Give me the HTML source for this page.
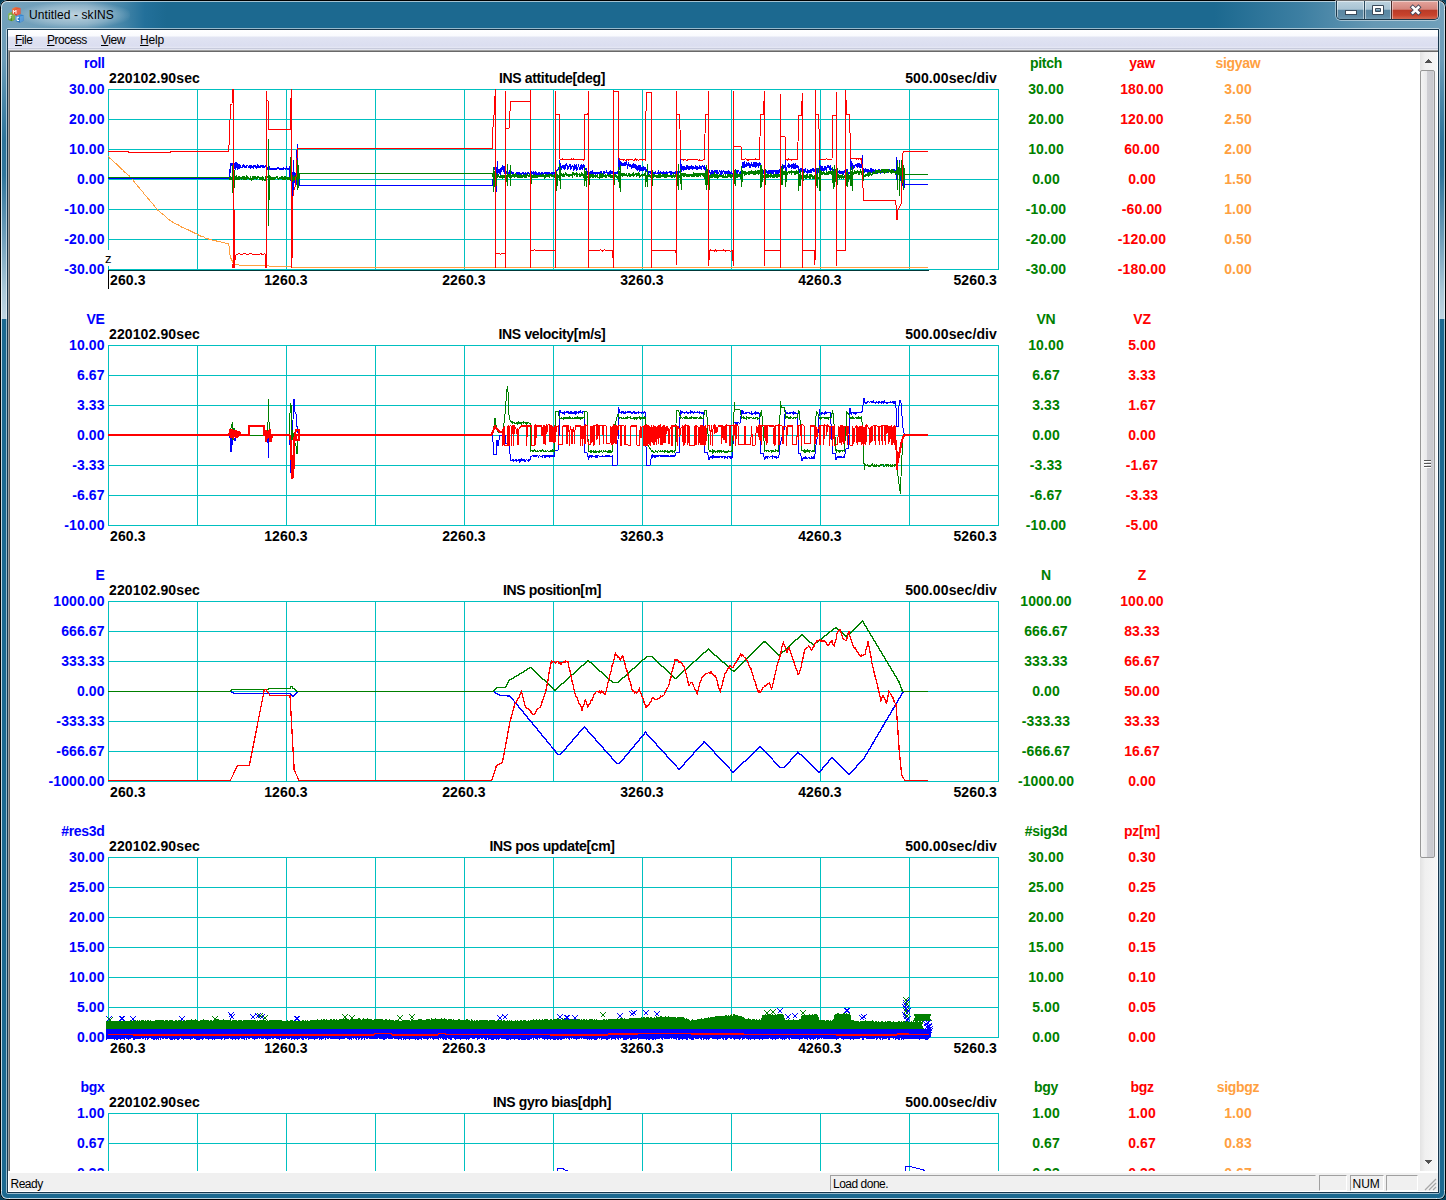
<!DOCTYPE html>
<html><head><meta charset="utf-8"><title>Untitled - skINS</title>
<style>
html,body{margin:0;padding:0}
body{width:1446px;height:1200px;overflow:hidden;position:relative;background:#063f5a;font-family:"Liberation Sans",sans-serif;}
.abs{position:absolute}
#win{left:0;top:0;width:1446px;height:1200px;background:#1c6990;border-radius:7px;overflow:hidden}
#glareL{left:0;top:0;width:8px;height:319px;background:linear-gradient(#74a2bc 0,#6c9cb8 60px,#4a87a8 100px,#2c7399 140px,#2f759b 175px,#6c9cb8 235px,#a9c7d7 290px,#bfd5e1 319px)}
#glareR{left:1438px;top:0;width:8px;height:319px;background:linear-gradient(#74a2bc 0,#6c9cb8 60px,#4a87a8 100px,#2c7399 140px,#2f759b 175px,#6c9cb8 235px,#a9c7d7 290px,#bfd5e1 319px)}
#title{left:0;top:0;width:1446px;height:30px;background:linear-gradient(90deg,#74a2bc 0,#6c9cb8 6%,#4485a8 8.5%,#23709a 10%,#1c6990 11.5%,#1c6990 84%,#3d7fa2 90%,#6698b4 95%,#70a0ba 100%)}
#tglow{left:20px;top:2px;width:110px;height:26px;border-radius:13px;background:radial-gradient(ellipse at center,rgba(255,255,255,.55),rgba(255,255,255,.25) 50%,rgba(255,255,255,0) 75%)}
#ttext{left:29px;top:8px;font-size:12px;letter-spacing:0.1px;color:#000;white-space:nowrap}
.edge{background:#000}
#menu{left:8px;top:30px;width:1430px;height:20px;background:linear-gradient(#fff 0,#fafbfe 28%,#e0e3f2 38%,#dbdef0 80%,#e4e6f3 88%,#c4c8da 93%,#f4f5fa 100%)}
#menu span{position:absolute;top:3px;font-size:12px;letter-spacing:-0.5px;color:#000;white-space:nowrap}
#menu u{text-decoration:underline}
#view{left:8px;top:50px;width:1430px;height:1121px;background:#fff;box-sizing:border-box;border-left:1px solid #a0a0a0;border-top:1px solid #a0a0a0}
#view2{left:9px;top:51px;width:1429px;height:1120px;box-sizing:border-box;border-left:1px solid #696969;border-top:1px solid #696969}
#plot{left:9px;top:51px;width:1411px;height:1120px;overflow:hidden}
#sb{left:1420px;top:52px;width:17px;height:1119px;background:linear-gradient(90deg,#e3e3e3,#f0f0f0 30%,#f6f6f6)}
#thumb{left:1420px;top:70px;width:15px;height:788px;box-sizing:border-box;border:1px solid #979797;border-radius:2px;background:linear-gradient(90deg,#f4f4f4,#e9e9eb 45%,#cfcfd4 50%,#c8c8cd 90%,#dcdce0)}
#status{left:8px;top:1171px;width:1430px;height:21px;background:#f0f0f0;font-size:12px;box-sizing:border-box;box-shadow:inset 1px 2px 0 #fff, inset 0 -1px 0 #fff;letter-spacing:-0.5px}
.pane{position:absolute;top:4px;height:16px;box-sizing:border-box;border:1px solid;border-color:#a0a0a0 #fff #fff #a0a0a0}
</style></head><body>
<div id="win" class="abs">
 <div id="title" class="abs"></div>
 <div id="glareL" class="abs"></div>
 <div id="glareR" class="abs"></div>
 <!-- outer edges -->
 <div class="abs" style="left:0;top:8px;width:1px;height:1184px;background:#000"></div>
 <div class="abs" style="left:1px;top:9px;width:1px;height:1182px;background:rgba(255,255,255,.75)"></div>
 <div class="abs" style="left:1445px;top:8px;width:1px;height:1184px;background:#000"></div>
 <div class="abs" style="left:1444px;top:9px;width:1px;height:1182px;background:rgba(255,255,255,.6)"></div>
 <div class="abs" style="left:8px;top:0;width:1430px;height:1px;background:#000"></div>
 <div class="abs" style="left:9px;top:1px;width:1428px;height:1px;background:rgba(255,255,255,.6)"></div>
 <div class="abs" style="left:8px;top:1199px;width:1430px;height:1px;background:#000"></div>
 <div class="abs" style="left:9px;top:1198px;width:1428px;height:1px;background:rgba(255,255,255,.7)"></div>
 <div class="abs" style="left:0;top:0;width:9px;height:9px;box-sizing:border-box;border-left:1px solid #000;border-top:1px solid #000;border-radius:7px 0 0 0"></div>
 <div class="abs" style="left:1px;top:1px;width:9px;height:9px;box-sizing:border-box;border-left:1px solid rgba(255,255,255,.7);border-top:1px solid rgba(255,255,255,.7);border-radius:6px 0 0 0"></div>
 <div class="abs" style="left:1437px;top:0;width:9px;height:9px;box-sizing:border-box;border-right:1px solid #000;border-top:1px solid #000;border-radius:0 7px 0 0"></div>
 <div class="abs" style="left:1436px;top:1px;width:9px;height:9px;box-sizing:border-box;border-right:1px solid rgba(255,255,255,.6);border-top:1px solid rgba(255,255,255,.6);border-radius:0 6px 0 0"></div>
 <div class="abs" style="left:0;top:1191px;width:9px;height:9px;box-sizing:border-box;border-left:1px solid #000;border-bottom:1px solid #000;border-radius:0 0 0 7px"></div>
 <div class="abs" style="left:1px;top:1190px;width:9px;height:9px;box-sizing:border-box;border-left:1px solid rgba(255,255,255,.7);border-bottom:1px solid rgba(255,255,255,.7);border-radius:0 0 0 6px"></div>
 <div class="abs" style="left:1437px;top:1191px;width:9px;height:9px;box-sizing:border-box;border-right:1px solid #000;border-bottom:1px solid #000;border-radius:0 0 7px 0"></div>
 <div class="abs" style="left:1436px;top:1190px;width:9px;height:9px;box-sizing:border-box;border-right:1px solid rgba(255,255,255,.6);border-bottom:1px solid rgba(255,255,255,.6);border-radius:0 0 6px 0"></div>
 <!-- inner edges -->
 <div class="abs" style="left:6px;top:28px;width:1434px;height:1166px;box-sizing:border-box;border:1px solid rgba(255,255,255,.55);border-radius:2px"></div>
 <div class="abs" style="left:7px;top:29px;width:1432px;height:1164px;box-sizing:border-box;border:1px solid #17374d"></div>
 <div id="tglow" class="abs"></div>
 <svg class="abs" style="left:7px;top:6px" width="18" height="18" viewBox="7 6 18 18">
  <defs>
   <linearGradient id="gr" x1="0" y1="0" x2="1" y2="1"><stop offset="0" stop-color="#f08a4a"/><stop offset=".5" stop-color="#e04a2a"/><stop offset="1" stop-color="#c02a1c"/></linearGradient>
   <linearGradient id="gg" x1="0" y1="0" x2="1" y2="1"><stop offset="0" stop-color="#9ccc5a"/><stop offset=".5" stop-color="#5c9a2c"/><stop offset="1" stop-color="#3c7a1c"/></linearGradient>
   <linearGradient id="gb" x1="0" y1="0" x2="1" y2="1"><stop offset="0" stop-color="#6cb4ea"/><stop offset=".5" stop-color="#2c7cc8"/><stop offset="1" stop-color="#1c5ca8"/></linearGradient>
  </defs>
  <path d="M8.3 13.5 L11.5 12 L15 13 L15 19.5 L12 21.3 L8.3 20 Z" fill="url(#gg)"/>
  <path d="M15.8 15.8 L19.5 14 L23.8 15.2 L23.8 20.8 L20 22.8 L15.8 21.3 Z" fill="url(#gb)"/>
  <path d="M12.2 8.5 L15.5 7 L20.5 8 L20.5 14 L16.5 15.8 L12.2 14 Z" fill="url(#gr)"/>
  <path d="M16.6 9.3 L20.5 8 L20.5 14 L16.6 15.8 Z" fill="#f4806a" opacity=".55"/>
  <path d="M12 15 L15 13.6 L15 19.5 L12 21.3 Z" fill="#b8e07a" opacity=".45"/>
  <path d="M20 16.6 L23.8 15.2 L23.8 20.8 L20 22.8 Z" fill="#8cc8f4" opacity=".5"/>
  <g stroke="#fff" stroke-width="1" fill="none"><path d="M13.4 13.6v-3.4l1.3 1.8 1.3-1.8v3.6"/><path d="M9.9 15.3v4M9.9 15.3h1.9M9.9 17.1h1.4"/><path d="M19 17.3h-1.9v3.2h2"/></g>
 </svg>
 <div id="ttext" class="abs">Untitled - skINS</div>
 <div class="abs" style="left:1336px;top:1px;width:103px;height:19px;box-sizing:border-box;border:1px solid #1a3648;border-top:none;border-radius:0 0 5px 5px;overflow:hidden;box-shadow:0 0 0 1px rgba(255,255,255,.45)">
  <div class="abs" style="left:0;top:0;width:27px;height:19px;background:linear-gradient(#bcd2de 0,#a8c3d3 44%,#5a87a2 47%,#5e8ba6 80%,#7aa2b9 100%);box-shadow:inset 0 0 0 1px rgba(255,255,255,.5)"></div>
  <div class="abs" style="left:27px;top:0;width:1px;height:19px;background:#2a4a5e"></div>
  <div class="abs" style="left:28px;top:0;width:26px;height:19px;background:linear-gradient(#bcd2de 0,#a8c3d3 44%,#5a87a2 47%,#5e8ba6 80%,#7aa2b9 100%);box-shadow:inset 0 0 0 1px rgba(255,255,255,.5)"></div>
  <div class="abs" style="left:54px;top:0;width:1px;height:19px;background:#4a2a28"></div>
  <div class="abs" style="left:55px;top:0;width:46px;height:19px;background:linear-gradient(#e3a49c 0,#d4857c 44%,#b93a27 47%,#c8432c 75%,#d4735c 100%);box-shadow:inset 0 0 0 1px rgba(255,255,255,.45)"></div>
 </div>
 <svg class="abs" style="left:1336px;top:0" width="103" height="20">
  <rect x="9.5" y="10.5" width="11" height="4" fill="#fff" stroke="#3a4a5a" stroke-width="1"/>
  <path d="M36.5 5.5h11v9h-11z M39.5 8.5v3h5v-3z" fill="#fff" fill-rule="evenodd" stroke="#3a4a5a" stroke-width="1"/>
  <path d="M76.8 7.3L82.4 12.7M82.4 7.3L76.8 12.7" stroke="#45485a" stroke-width="4.4" stroke-linecap="square"/><path d="M76.8 7.3L82.4 12.7M82.4 7.3L76.8 12.7" stroke="#fff" stroke-width="2.6" stroke-linecap="square"/>
 </svg>
 <div id="menu" class="abs"><span style="left:7px"><u>F</u>ile</span><span style="left:39px"><u>P</u>rocess</span><span style="left:93px"><u>V</u>iew</span><span style="left:132px;letter-spacing:-0.2px"><u>H</u>elp</span></div>
 <div id="view" class="abs"></div><div id="view2" class="abs"></div>
 <div id="plot" class="abs">
<svg width="1411" height="1120" viewBox="9 51 1411 1120" style="position:absolute;left:0;top:0" shape-rendering="crispEdges" fill="none">
<g font-family="'Liberation Sans',sans-serif" font-weight="bold" font-size="14px" style="letter-spacing:0.12px">
<g stroke="#00c0c0" stroke-width="1"><line x1="108.5" y1="89" x2="108.5" y2="270"/><line x1="197.5" y1="89" x2="197.5" y2="270"/><line x1="286.5" y1="89" x2="286.5" y2="270"/><line x1="375.5" y1="89" x2="375.5" y2="270"/><line x1="464.5" y1="89" x2="464.5" y2="270"/><line x1="553.5" y1="89" x2="553.5" y2="270"/><line x1="642.5" y1="89" x2="642.5" y2="270"/><line x1="731.5" y1="89" x2="731.5" y2="270"/><line x1="820.5" y1="89" x2="820.5" y2="270"/><line x1="909.5" y1="89" x2="909.5" y2="270"/><line x1="998.5" y1="89" x2="998.5" y2="270"/><line x1="108" y1="89.5" x2="999" y2="89.5"/><line x1="108" y1="119.5" x2="999" y2="119.5"/><line x1="108" y1="149.5" x2="999" y2="149.5"/><line x1="108" y1="179.5" x2="999" y2="179.5"/><line x1="108" y1="209.5" x2="999" y2="209.5"/><line x1="108" y1="239.5" x2="999" y2="239.5"/><line x1="108" y1="269.5" x2="999" y2="269.5"/></g>
<text x="104.6" y="68" text-anchor="end" fill="#0000ff" style="letter-spacing:-0.3px">roll</text>
<text x="109" y="83" text-anchor="start" fill="#000">220102.90sec</text>
<text x="552" y="83" text-anchor="middle" fill="#000" style="letter-spacing:-0.35px">INS attitude[deg]</text>
<text x="997" y="83" text-anchor="end" fill="#000">500.00sec/div</text>
<text x="104.7" y="94" text-anchor="end" fill="#0000ff">30.00</text>
<text x="104.7" y="124" text-anchor="end" fill="#0000ff">20.00</text>
<text x="104.7" y="154" text-anchor="end" fill="#0000ff">10.00</text>
<text x="104.7" y="184" text-anchor="end" fill="#0000ff">0.00</text>
<text x="104.7" y="214" text-anchor="end" fill="#0000ff">-10.00</text>
<text x="104.7" y="244" text-anchor="end" fill="#0000ff">-20.00</text>
<text x="104.7" y="274" text-anchor="end" fill="#0000ff">-30.00</text>
<text x="1046" y="68" text-anchor="middle" fill="#008000" style="letter-spacing:-0.3px">pitch</text>
<text x="1046" y="94" text-anchor="middle" fill="#008000">30.00</text>
<text x="1046" y="124" text-anchor="middle" fill="#008000">20.00</text>
<text x="1046" y="154" text-anchor="middle" fill="#008000">10.00</text>
<text x="1046" y="184" text-anchor="middle" fill="#008000">0.00</text>
<text x="1046" y="214" text-anchor="middle" fill="#008000">-10.00</text>
<text x="1046" y="244" text-anchor="middle" fill="#008000">-20.00</text>
<text x="1046" y="274" text-anchor="middle" fill="#008000">-30.00</text>
<text x="1142" y="68" text-anchor="middle" fill="#ff0000" style="letter-spacing:-0.3px">yaw</text>
<text x="1142" y="94" text-anchor="middle" fill="#ff0000">180.00</text>
<text x="1142" y="124" text-anchor="middle" fill="#ff0000">120.00</text>
<text x="1142" y="154" text-anchor="middle" fill="#ff0000">60.00</text>
<text x="1142" y="184" text-anchor="middle" fill="#ff0000">0.00</text>
<text x="1142" y="214" text-anchor="middle" fill="#ff0000">-60.00</text>
<text x="1142" y="244" text-anchor="middle" fill="#ff0000">-120.00</text>
<text x="1142" y="274" text-anchor="middle" fill="#ff0000">-180.00</text>
<text x="1238" y="68" text-anchor="middle" fill="#ffa040" style="letter-spacing:-0.3px">sigyaw</text>
<text x="1238" y="94" text-anchor="middle" fill="#ffa040">3.00</text>
<text x="1238" y="124" text-anchor="middle" fill="#ffa040">2.50</text>
<text x="1238" y="154" text-anchor="middle" fill="#ffa040">2.00</text>
<text x="1238" y="184" text-anchor="middle" fill="#ffa040">1.50</text>
<text x="1238" y="214" text-anchor="middle" fill="#ffa040">1.00</text>
<text x="1238" y="244" text-anchor="middle" fill="#ffa040">0.50</text>
<text x="1238" y="274" text-anchor="middle" fill="#ffa040">0.00</text>
<text x="110" y="285" text-anchor="start" fill="#000">260.3</text>
<text x="286" y="285" text-anchor="middle" fill="#000">1260.3</text>
<text x="464" y="285" text-anchor="middle" fill="#000">2260.3</text>
<text x="642" y="285" text-anchor="middle" fill="#000">3260.3</text>
<text x="820" y="285" text-anchor="middle" fill="#000">4260.3</text>
<text x="997" y="285" text-anchor="end" fill="#000">5260.3</text>
<g stroke="#00c0c0" stroke-width="1"><line x1="108.5" y1="345" x2="108.5" y2="526"/><line x1="197.5" y1="345" x2="197.5" y2="526"/><line x1="286.5" y1="345" x2="286.5" y2="526"/><line x1="375.5" y1="345" x2="375.5" y2="526"/><line x1="464.5" y1="345" x2="464.5" y2="526"/><line x1="553.5" y1="345" x2="553.5" y2="526"/><line x1="642.5" y1="345" x2="642.5" y2="526"/><line x1="731.5" y1="345" x2="731.5" y2="526"/><line x1="820.5" y1="345" x2="820.5" y2="526"/><line x1="909.5" y1="345" x2="909.5" y2="526"/><line x1="998.5" y1="345" x2="998.5" y2="526"/><line x1="108" y1="345.5" x2="999" y2="345.5"/><line x1="108" y1="375.5" x2="999" y2="375.5"/><line x1="108" y1="405.5" x2="999" y2="405.5"/><line x1="108" y1="435.5" x2="999" y2="435.5"/><line x1="108" y1="465.5" x2="999" y2="465.5"/><line x1="108" y1="495.5" x2="999" y2="495.5"/><line x1="108" y1="525.5" x2="999" y2="525.5"/></g>
<text x="104.6" y="324" text-anchor="end" fill="#0000ff" style="letter-spacing:-0.3px">VE</text>
<text x="109" y="339" text-anchor="start" fill="#000">220102.90sec</text>
<text x="552" y="339" text-anchor="middle" fill="#000" style="letter-spacing:-0.35px">INS velocity[m/s]</text>
<text x="997" y="339" text-anchor="end" fill="#000">500.00sec/div</text>
<text x="104.7" y="350" text-anchor="end" fill="#0000ff">10.00</text>
<text x="104.7" y="380" text-anchor="end" fill="#0000ff">6.67</text>
<text x="104.7" y="410" text-anchor="end" fill="#0000ff">3.33</text>
<text x="104.7" y="440" text-anchor="end" fill="#0000ff">0.00</text>
<text x="104.7" y="470" text-anchor="end" fill="#0000ff">-3.33</text>
<text x="104.7" y="500" text-anchor="end" fill="#0000ff">-6.67</text>
<text x="104.7" y="530" text-anchor="end" fill="#0000ff">-10.00</text>
<text x="1046" y="324" text-anchor="middle" fill="#008000" style="letter-spacing:-0.3px">VN</text>
<text x="1046" y="350" text-anchor="middle" fill="#008000">10.00</text>
<text x="1046" y="380" text-anchor="middle" fill="#008000">6.67</text>
<text x="1046" y="410" text-anchor="middle" fill="#008000">3.33</text>
<text x="1046" y="440" text-anchor="middle" fill="#008000">0.00</text>
<text x="1046" y="470" text-anchor="middle" fill="#008000">-3.33</text>
<text x="1046" y="500" text-anchor="middle" fill="#008000">-6.67</text>
<text x="1046" y="530" text-anchor="middle" fill="#008000">-10.00</text>
<text x="1142" y="324" text-anchor="middle" fill="#ff0000" style="letter-spacing:-0.3px">VZ</text>
<text x="1142" y="350" text-anchor="middle" fill="#ff0000">5.00</text>
<text x="1142" y="380" text-anchor="middle" fill="#ff0000">3.33</text>
<text x="1142" y="410" text-anchor="middle" fill="#ff0000">1.67</text>
<text x="1142" y="440" text-anchor="middle" fill="#ff0000">0.00</text>
<text x="1142" y="470" text-anchor="middle" fill="#ff0000">-1.67</text>
<text x="1142" y="500" text-anchor="middle" fill="#ff0000">-3.33</text>
<text x="1142" y="530" text-anchor="middle" fill="#ff0000">-5.00</text>
<text x="110" y="541" text-anchor="start" fill="#000">260.3</text>
<text x="286" y="541" text-anchor="middle" fill="#000">1260.3</text>
<text x="464" y="541" text-anchor="middle" fill="#000">2260.3</text>
<text x="642" y="541" text-anchor="middle" fill="#000">3260.3</text>
<text x="820" y="541" text-anchor="middle" fill="#000">4260.3</text>
<text x="997" y="541" text-anchor="end" fill="#000">5260.3</text>
<g stroke="#00c0c0" stroke-width="1"><line x1="108.5" y1="601" x2="108.5" y2="782"/><line x1="197.5" y1="601" x2="197.5" y2="782"/><line x1="286.5" y1="601" x2="286.5" y2="782"/><line x1="375.5" y1="601" x2="375.5" y2="782"/><line x1="464.5" y1="601" x2="464.5" y2="782"/><line x1="553.5" y1="601" x2="553.5" y2="782"/><line x1="642.5" y1="601" x2="642.5" y2="782"/><line x1="731.5" y1="601" x2="731.5" y2="782"/><line x1="820.5" y1="601" x2="820.5" y2="782"/><line x1="909.5" y1="601" x2="909.5" y2="782"/><line x1="998.5" y1="601" x2="998.5" y2="782"/><line x1="108" y1="601.5" x2="999" y2="601.5"/><line x1="108" y1="631.5" x2="999" y2="631.5"/><line x1="108" y1="661.5" x2="999" y2="661.5"/><line x1="108" y1="691.5" x2="999" y2="691.5"/><line x1="108" y1="721.5" x2="999" y2="721.5"/><line x1="108" y1="751.5" x2="999" y2="751.5"/><line x1="108" y1="781.5" x2="999" y2="781.5"/></g>
<text x="104.6" y="580" text-anchor="end" fill="#0000ff" style="letter-spacing:-0.3px">E</text>
<text x="109" y="595" text-anchor="start" fill="#000">220102.90sec</text>
<text x="552" y="595" text-anchor="middle" fill="#000" style="letter-spacing:-0.35px">INS position[m]</text>
<text x="997" y="595" text-anchor="end" fill="#000">500.00sec/div</text>
<text x="104.7" y="606" text-anchor="end" fill="#0000ff">1000.00</text>
<text x="104.7" y="636" text-anchor="end" fill="#0000ff">666.67</text>
<text x="104.7" y="666" text-anchor="end" fill="#0000ff">333.33</text>
<text x="104.7" y="696" text-anchor="end" fill="#0000ff">0.00</text>
<text x="104.7" y="726" text-anchor="end" fill="#0000ff">-333.33</text>
<text x="104.7" y="756" text-anchor="end" fill="#0000ff">-666.67</text>
<text x="104.7" y="786" text-anchor="end" fill="#0000ff">-1000.00</text>
<text x="1046" y="580" text-anchor="middle" fill="#008000" style="letter-spacing:-0.3px">N</text>
<text x="1046" y="606" text-anchor="middle" fill="#008000">1000.00</text>
<text x="1046" y="636" text-anchor="middle" fill="#008000">666.67</text>
<text x="1046" y="666" text-anchor="middle" fill="#008000">333.33</text>
<text x="1046" y="696" text-anchor="middle" fill="#008000">0.00</text>
<text x="1046" y="726" text-anchor="middle" fill="#008000">-333.33</text>
<text x="1046" y="756" text-anchor="middle" fill="#008000">-666.67</text>
<text x="1046" y="786" text-anchor="middle" fill="#008000">-1000.00</text>
<text x="1142" y="580" text-anchor="middle" fill="#ff0000" style="letter-spacing:-0.3px">Z</text>
<text x="1142" y="606" text-anchor="middle" fill="#ff0000">100.00</text>
<text x="1142" y="636" text-anchor="middle" fill="#ff0000">83.33</text>
<text x="1142" y="666" text-anchor="middle" fill="#ff0000">66.67</text>
<text x="1142" y="696" text-anchor="middle" fill="#ff0000">50.00</text>
<text x="1142" y="726" text-anchor="middle" fill="#ff0000">33.33</text>
<text x="1142" y="756" text-anchor="middle" fill="#ff0000">16.67</text>
<text x="1142" y="786" text-anchor="middle" fill="#ff0000">0.00</text>
<text x="110" y="797" text-anchor="start" fill="#000">260.3</text>
<text x="286" y="797" text-anchor="middle" fill="#000">1260.3</text>
<text x="464" y="797" text-anchor="middle" fill="#000">2260.3</text>
<text x="642" y="797" text-anchor="middle" fill="#000">3260.3</text>
<text x="820" y="797" text-anchor="middle" fill="#000">4260.3</text>
<text x="997" y="797" text-anchor="end" fill="#000">5260.3</text>
<g stroke="#00c0c0" stroke-width="1"><line x1="108.5" y1="857" x2="108.5" y2="1038"/><line x1="197.5" y1="857" x2="197.5" y2="1038"/><line x1="286.5" y1="857" x2="286.5" y2="1038"/><line x1="375.5" y1="857" x2="375.5" y2="1038"/><line x1="464.5" y1="857" x2="464.5" y2="1038"/><line x1="553.5" y1="857" x2="553.5" y2="1038"/><line x1="642.5" y1="857" x2="642.5" y2="1038"/><line x1="731.5" y1="857" x2="731.5" y2="1038"/><line x1="820.5" y1="857" x2="820.5" y2="1038"/><line x1="909.5" y1="857" x2="909.5" y2="1038"/><line x1="998.5" y1="857" x2="998.5" y2="1038"/><line x1="108" y1="857.5" x2="999" y2="857.5"/><line x1="108" y1="887.5" x2="999" y2="887.5"/><line x1="108" y1="917.5" x2="999" y2="917.5"/><line x1="108" y1="947.5" x2="999" y2="947.5"/><line x1="108" y1="977.5" x2="999" y2="977.5"/><line x1="108" y1="1007.5" x2="999" y2="1007.5"/><line x1="108" y1="1037.5" x2="999" y2="1037.5"/></g>
<text x="104.6" y="836" text-anchor="end" fill="#0000ff" style="letter-spacing:-0.3px">#res3d</text>
<text x="109" y="851" text-anchor="start" fill="#000">220102.90sec</text>
<text x="552" y="851" text-anchor="middle" fill="#000" style="letter-spacing:-0.35px">INS pos update[cm]</text>
<text x="997" y="851" text-anchor="end" fill="#000">500.00sec/div</text>
<text x="104.7" y="862" text-anchor="end" fill="#0000ff">30.00</text>
<text x="104.7" y="892" text-anchor="end" fill="#0000ff">25.00</text>
<text x="104.7" y="922" text-anchor="end" fill="#0000ff">20.00</text>
<text x="104.7" y="952" text-anchor="end" fill="#0000ff">15.00</text>
<text x="104.7" y="982" text-anchor="end" fill="#0000ff">10.00</text>
<text x="104.7" y="1012" text-anchor="end" fill="#0000ff">5.00</text>
<text x="104.7" y="1042" text-anchor="end" fill="#0000ff">0.00</text>
<text x="1046" y="836" text-anchor="middle" fill="#008000" style="letter-spacing:-0.3px">#sig3d</text>
<text x="1046" y="862" text-anchor="middle" fill="#008000">30.00</text>
<text x="1046" y="892" text-anchor="middle" fill="#008000">25.00</text>
<text x="1046" y="922" text-anchor="middle" fill="#008000">20.00</text>
<text x="1046" y="952" text-anchor="middle" fill="#008000">15.00</text>
<text x="1046" y="982" text-anchor="middle" fill="#008000">10.00</text>
<text x="1046" y="1012" text-anchor="middle" fill="#008000">5.00</text>
<text x="1046" y="1042" text-anchor="middle" fill="#008000">0.00</text>
<text x="1142" y="836" text-anchor="middle" fill="#ff0000" style="letter-spacing:-0.3px">pz[m]</text>
<text x="1142" y="862" text-anchor="middle" fill="#ff0000">0.30</text>
<text x="1142" y="892" text-anchor="middle" fill="#ff0000">0.25</text>
<text x="1142" y="922" text-anchor="middle" fill="#ff0000">0.20</text>
<text x="1142" y="952" text-anchor="middle" fill="#ff0000">0.15</text>
<text x="1142" y="982" text-anchor="middle" fill="#ff0000">0.10</text>
<text x="1142" y="1012" text-anchor="middle" fill="#ff0000">0.05</text>
<text x="1142" y="1042" text-anchor="middle" fill="#ff0000">0.00</text>
<text x="110" y="1053" text-anchor="start" fill="#000">260.3</text>
<text x="286" y="1053" text-anchor="middle" fill="#000">1260.3</text>
<text x="464" y="1053" text-anchor="middle" fill="#000">2260.3</text>
<text x="642" y="1053" text-anchor="middle" fill="#000">3260.3</text>
<text x="820" y="1053" text-anchor="middle" fill="#000">4260.3</text>
<text x="997" y="1053" text-anchor="end" fill="#000">5260.3</text>
<g stroke="#00c0c0" stroke-width="1"><line x1="108.5" y1="1113" x2="108.5" y2="1294"/><line x1="197.5" y1="1113" x2="197.5" y2="1294"/><line x1="286.5" y1="1113" x2="286.5" y2="1294"/><line x1="375.5" y1="1113" x2="375.5" y2="1294"/><line x1="464.5" y1="1113" x2="464.5" y2="1294"/><line x1="553.5" y1="1113" x2="553.5" y2="1294"/><line x1="642.5" y1="1113" x2="642.5" y2="1294"/><line x1="731.5" y1="1113" x2="731.5" y2="1294"/><line x1="820.5" y1="1113" x2="820.5" y2="1294"/><line x1="909.5" y1="1113" x2="909.5" y2="1294"/><line x1="998.5" y1="1113" x2="998.5" y2="1294"/><line x1="108" y1="1113.5" x2="999" y2="1113.5"/><line x1="108" y1="1143.5" x2="999" y2="1143.5"/><line x1="108" y1="1173.5" x2="999" y2="1173.5"/><line x1="108" y1="1203.5" x2="999" y2="1203.5"/><line x1="108" y1="1233.5" x2="999" y2="1233.5"/><line x1="108" y1="1263.5" x2="999" y2="1263.5"/><line x1="108" y1="1293.5" x2="999" y2="1293.5"/></g>
<text x="104.6" y="1092" text-anchor="end" fill="#0000ff" style="letter-spacing:-0.3px">bgx</text>
<text x="109" y="1107" text-anchor="start" fill="#000">220102.90sec</text>
<text x="552" y="1107" text-anchor="middle" fill="#000" style="letter-spacing:-0.35px">INS gyro bias[dph]</text>
<text x="997" y="1107" text-anchor="end" fill="#000">500.00sec/div</text>
<text x="104.7" y="1118" text-anchor="end" fill="#0000ff">1.00</text>
<text x="104.7" y="1148" text-anchor="end" fill="#0000ff">0.67</text>
<text x="104.7" y="1178" text-anchor="end" fill="#0000ff">0.33</text>
<text x="104.7" y="1208" text-anchor="end" fill="#0000ff">0.00</text>
<text x="104.7" y="1238" text-anchor="end" fill="#0000ff">-0.33</text>
<text x="104.7" y="1268" text-anchor="end" fill="#0000ff">-0.67</text>
<text x="104.7" y="1298" text-anchor="end" fill="#0000ff">-1.00</text>
<text x="1046" y="1092" text-anchor="middle" fill="#008000" style="letter-spacing:-0.3px">bgy</text>
<text x="1046" y="1118" text-anchor="middle" fill="#008000">1.00</text>
<text x="1046" y="1148" text-anchor="middle" fill="#008000">0.67</text>
<text x="1046" y="1178" text-anchor="middle" fill="#008000">0.33</text>
<text x="1046" y="1208" text-anchor="middle" fill="#008000">0.00</text>
<text x="1046" y="1238" text-anchor="middle" fill="#008000">-0.33</text>
<text x="1046" y="1268" text-anchor="middle" fill="#008000">-0.67</text>
<text x="1046" y="1298" text-anchor="middle" fill="#008000">-1.00</text>
<text x="1142" y="1092" text-anchor="middle" fill="#ff0000" style="letter-spacing:-0.3px">bgz</text>
<text x="1142" y="1118" text-anchor="middle" fill="#ff0000">1.00</text>
<text x="1142" y="1148" text-anchor="middle" fill="#ff0000">0.67</text>
<text x="1142" y="1178" text-anchor="middle" fill="#ff0000">0.33</text>
<text x="1142" y="1208" text-anchor="middle" fill="#ff0000">0.00</text>
<text x="1142" y="1238" text-anchor="middle" fill="#ff0000">-0.33</text>
<text x="1142" y="1268" text-anchor="middle" fill="#ff0000">-0.67</text>
<text x="1142" y="1298" text-anchor="middle" fill="#ff0000">-1.00</text>
<text x="1238" y="1092" text-anchor="middle" fill="#ffa040" style="letter-spacing:-0.3px">sigbgz</text>
<text x="1238" y="1118" text-anchor="middle" fill="#ffa040">1.00</text>
<text x="1238" y="1148" text-anchor="middle" fill="#ffa040">0.83</text>
<text x="1238" y="1178" text-anchor="middle" fill="#ffa040">0.67</text>
<text x="1238" y="1208" text-anchor="middle" fill="#ffa040">0.50</text>
<text x="1238" y="1238" text-anchor="middle" fill="#ffa040">0.33</text>
<text x="1238" y="1268" text-anchor="middle" fill="#ffa040">0.17</text>
<text x="1238" y="1298" text-anchor="middle" fill="#ffa040">0.00</text>
<text x="110" y="1309" text-anchor="start" fill="#000">260.3</text>
<text x="286" y="1309" text-anchor="middle" fill="#000">1260.3</text>
<text x="464" y="1309" text-anchor="middle" fill="#000">2260.3</text>
<text x="642" y="1309" text-anchor="middle" fill="#000">3260.3</text>
<text x="820" y="1309" text-anchor="middle" fill="#000">4260.3</text>
<text x="997" y="1309" text-anchor="end" fill="#000">5260.3</text>
</g>
<g fill="none" stroke-linejoin="miter">
<polyline points="108.0,156.4 109.0,157.2 110.0,158.4 111.0,159.0 112.0,160.2 113.0,161.0 114.0,161.8 115.0,162.9 116.0,163.6 117.0,164.7 118.0,165.4 119.0,166.4 120.0,167.5 121.0,168.7 122.0,169.2 123.0,170.1 124.0,171.3 125.0,172.4 126.0,173.1 127.0,173.9 128.0,175.2 129.0,175.5 130.0,177.0 131.0,177.7 132.0,178.8 133.0,180.0 134.0,181.4 135.0,182.9 136.0,183.7 137.0,185.2 138.0,186.5 139.0,187.5 140.0,188.9 141.0,189.8 142.0,191.0 143.0,192.3 144.0,193.8 145.0,194.8 146.0,195.9 147.0,197.3 148.0,198.4 149.0,199.4 150.0,200.9 151.0,202.0 152.0,202.9 153.0,204.3 154.0,205.5 155.0,206.9 156.0,207.9 157.0,208.9 158.0,210.5 159.0,210.8 160.0,211.9 161.0,212.9 162.0,213.4 163.0,214.5 164.0,215.0 165.0,216.3 166.0,217.2 167.0,217.9 168.0,218.9 169.0,219.4 170.0,220.5 171.0,221.2 172.0,221.7 173.0,222.2 174.0,223.0 175.0,223.6 176.0,223.8 177.0,224.5 178.0,224.7 179.0,225.6 180.0,226.1 181.0,226.8 182.0,227.3 183.0,227.5 184.0,228.1 185.0,228.7 186.0,228.8 187.0,229.5 188.0,229.8 189.0,230.3 190.0,230.7 191.0,231.6 192.0,231.7 193.0,232.2 194.0,232.7 195.0,233.5 196.0,233.5 197.0,234.2 198.0,234.7 199.0,235.3 200.0,235.7 201.0,236.2 202.0,236.2 203.0,236.7 204.0,237.1 205.0,237.9 206.0,238.3 207.0,238.3 208.0,238.7 209.0,239.2 210.0,239.5 211.0,239.8 212.0,240.1 213.0,240.1 214.0,240.2 215.0,240.6 216.0,240.8 217.0,241.2 218.0,241.6 219.0,241.7 220.0,241.8 221.0,242.0 222.0,242.3 223.0,242.1 224.0,242.8 225.0,243.0 226.0,243.3 227.0,243.4 228.0,243.4 229.0,246.2 230.0,255.0 231.0,258.4 232.0,260.5 233.0,262.8 234.0,263.4 235.0,263.9 236.0,264.6 237.0,264.9 238.0,264.9 239.0,265.0 240.0,265.2 241.0,265.2 242.0,265.2 243.0,265.2 244.0,265.2 245.0,265.2 246.0,265.2 247.0,265.2 248.0,265.2 249.0,265.2 250.0,265.2 251.0,265.2 252.0,265.2 253.0,265.2 254.0,265.2 255.0,265.2 256.0,265.2 257.0,265.2 258.0,265.2 259.0,265.2 260.0,265.2 261.0,265.2 262.0,265.2 263.0,265.2 264.0,265.2 265.0,265.2 266.0,265.2 267.0,265.5 268.0,265.7 269.0,266.0 270.0,266.2 271.0,266.3 272.0,266.4 273.0,266.4 274.0,266.4 275.0,266.4 276.0,266.5 277.0,266.5 278.0,266.5 279.0,266.6 280.0,266.6 281.0,266.6 282.0,266.7 283.0,266.7 284.0,266.7 285.0,266.8 286.0,266.8 287.0,266.8 288.0,266.9 289.0,266.9 290.0,266.9 291.0,267.0 292.0,267.0 293.0,267.1 294.0,267.2 295.0,267.2 296.0,267.3 297.0,267.3 298.0,267.4 299.0,267.4 300.0,267.5 301.0,267.5 302.0,267.5 303.0,267.5 304.0,267.5 305.0,267.5 306.0,267.5 307.0,267.5 308.0,267.5 309.0,267.5 310.0,267.5 311.0,267.5 312.0,267.5 313.0,267.5 314.0,267.5 315.0,267.5 316.0,267.5 317.0,267.5 318.0,267.5 319.0,267.5 320.0,267.5 321.0,267.5 322.0,267.5 323.0,267.5 324.0,267.5 325.0,267.5 326.0,267.5 327.0,267.5 328.0,267.5 329.0,267.5 330.0,267.5 331.0,267.5 332.0,267.5 333.0,267.5 334.0,267.5 335.0,267.5 336.0,267.5 337.0,267.5 338.0,267.5 339.0,267.5 340.0,267.5 341.0,267.5 342.0,267.5 343.0,267.5 344.0,267.5 345.0,267.5 346.0,267.5 347.0,267.5 348.0,267.5 349.0,267.5 350.0,267.5 351.0,267.5 352.0,267.5 353.0,267.5 354.0,267.5 355.0,267.5 356.0,267.5 357.0,267.5 358.0,267.5 359.0,267.5 360.0,267.5 361.0,267.5 362.0,267.5 363.0,267.5 364.0,267.5 365.0,267.5 366.0,267.5 367.0,267.5 368.0,267.5 369.0,267.5 370.0,267.5 371.0,267.5 372.0,267.5 373.0,267.5 374.0,267.5 375.0,267.5 376.0,267.5 377.0,267.5 378.0,267.5 379.0,267.5 380.0,267.5 381.0,267.5 382.0,267.5 383.0,267.5 384.0,267.5 385.0,267.5 386.0,267.5 387.0,267.5 388.0,267.5 389.0,267.5 390.0,267.5 391.0,267.5 392.0,267.5 393.0,267.5 394.0,267.5 395.0,267.5 396.0,267.5 397.0,267.5 398.0,267.5 399.0,267.5 400.0,267.5 401.0,267.5 402.0,267.5 403.0,267.5 404.0,267.5 405.0,267.5 406.0,267.5 407.0,267.5 408.0,267.5 409.0,267.5 410.0,267.5 411.0,267.5 412.0,267.5 413.0,267.5 414.0,267.5 415.0,267.5 416.0,267.5 417.0,267.5 418.0,267.5 419.0,267.5 420.0,267.5 421.0,267.5 422.0,267.5 423.0,267.5 424.0,267.5 425.0,267.5 426.0,267.5 427.0,267.5 428.0,267.5 429.0,267.5 430.0,267.5 431.0,267.5 432.0,267.5 433.0,267.5 434.0,267.5 435.0,267.5 436.0,267.5 437.0,267.5 438.0,267.5 439.0,267.5 440.0,267.5 441.0,267.5 442.0,267.5 443.0,267.5 444.0,267.5 445.0,267.5 446.0,267.5 447.0,267.5 448.0,267.5 449.0,267.5 450.0,267.5 451.0,267.5 452.0,267.5 453.0,267.5 454.0,267.5 455.0,267.5 456.0,267.5 457.0,267.5 458.0,267.5 459.0,267.5 460.0,267.5 461.0,267.5 462.0,267.5 463.0,267.5 464.0,267.5 465.0,267.5 466.0,267.5 467.0,267.5 468.0,267.5 469.0,267.5 470.0,267.5 471.0,267.5 472.0,267.5 473.0,267.5 474.0,267.5 475.0,267.5 476.0,267.5 477.0,267.5 478.0,267.5 479.0,267.5 480.0,267.5 481.0,267.5 482.0,267.5 483.0,267.5 484.0,267.5 485.0,267.5 486.0,267.5 487.0,267.5 488.0,267.5 489.0,267.5 490.0,267.5 491.0,267.5 492.0,267.5 493.0,267.5 494.0,267.5 495.0,267.5 496.0,267.5 497.0,267.5 498.0,267.5 499.0,267.5 500.0,267.5 501.0,267.5 502.0,267.5 503.0,267.5 504.0,267.5 505.0,267.5 506.0,267.5 507.0,267.5 508.0,267.5 509.0,267.5 510.0,267.5 511.0,267.5 512.0,267.5 513.0,267.5 514.0,267.5 515.0,267.5 516.0,267.5 517.0,267.5 518.0,267.5 519.0,267.5 520.0,267.5 521.0,267.5 522.0,267.5 523.0,267.5 524.0,267.5 525.0,267.5 526.0,267.5 527.0,267.5 528.0,267.5 529.0,267.5 530.0,267.5 531.0,267.5 532.0,267.5 533.0,267.5 534.0,267.5 535.0,267.5 536.0,267.5 537.0,267.5 538.0,267.5 539.0,267.5 540.0,267.5 541.0,267.5 542.0,267.5 543.0,267.5 544.0,267.5 545.0,267.5 546.0,267.5 547.0,267.5 548.0,267.5 549.0,267.5 550.0,267.5 551.0,267.5 552.0,267.5 553.0,267.5 554.0,267.5 555.0,267.5 556.0,267.5 557.0,267.5 558.0,267.5 559.0,267.5 560.0,267.5 561.0,267.5 562.0,267.5 563.0,267.5 564.0,267.5 565.0,267.5 566.0,267.5 567.0,267.5 568.0,267.5 569.0,267.5 570.0,267.5 571.0,267.5 572.0,267.5 573.0,267.5 574.0,267.5 575.0,267.5 576.0,267.5 577.0,267.5 578.0,267.5 579.0,267.5 580.0,267.5 581.0,267.5 582.0,267.5 583.0,267.5 584.0,267.5 585.0,267.5 586.0,267.5 587.0,267.5 588.0,267.5 589.0,267.5 590.0,267.5 591.0,267.5 592.0,267.5 593.0,267.5 594.0,267.5 595.0,267.5 596.0,267.5 597.0,267.5 598.0,267.5 599.0,267.5 600.0,267.5 601.0,267.5 602.0,267.5 603.0,267.5 604.0,267.5 605.0,267.5 606.0,267.5 607.0,267.5 608.0,267.5 609.0,267.5 610.0,267.5 611.0,267.5 612.0,267.5 613.0,267.5 614.0,267.5 615.0,267.5 616.0,267.5 617.0,267.5 618.0,267.5 619.0,267.5 620.0,267.5 621.0,267.5 622.0,267.5 623.0,267.5 624.0,267.5 625.0,267.5 626.0,267.5 627.0,267.5 628.0,267.5 629.0,267.5 630.0,267.5 631.0,267.5 632.0,267.5 633.0,267.5 634.0,267.5 635.0,267.5 636.0,267.5 637.0,267.5 638.0,267.5 639.0,267.5 640.0,267.5 641.0,267.5 642.0,267.5 643.0,267.5 644.0,267.5 645.0,267.5 646.0,267.5 647.0,267.5 648.0,267.5 649.0,267.5 650.0,267.5 651.0,267.5 652.0,267.5 653.0,267.5 654.0,267.5 655.0,267.5 656.0,267.5 657.0,267.5 658.0,267.5 659.0,267.5 660.0,267.5 661.0,267.5 662.0,267.5 663.0,267.5 664.0,267.5 665.0,267.5 666.0,267.5 667.0,267.5 668.0,267.5 669.0,267.5 670.0,267.5 671.0,267.5 672.0,267.5 673.0,267.5 674.0,267.5 675.0,267.5 676.0,267.5 677.0,267.5 678.0,267.5 679.0,267.5 680.0,267.5 681.0,267.5 682.0,267.5 683.0,267.5 684.0,267.5 685.0,267.5 686.0,267.5 687.0,267.5 688.0,267.5 689.0,267.5 690.0,267.5 691.0,267.5 692.0,267.5 693.0,267.5 694.0,267.5 695.0,267.5 696.0,267.5 697.0,267.5 698.0,267.5 699.0,267.5 700.0,267.5 701.0,267.5 702.0,267.5 703.0,267.5 704.0,267.5 705.0,267.5 706.0,267.5 707.0,267.5 708.0,267.5 709.0,267.5 710.0,267.5 711.0,267.5 712.0,267.5 713.0,267.5 714.0,267.5 715.0,267.5 716.0,267.5 717.0,267.5 718.0,267.5 719.0,267.5 720.0,267.5 721.0,267.5 722.0,267.5 723.0,267.5 724.0,267.5 725.0,267.5 726.0,267.5 727.0,267.5 728.0,267.5 729.0,267.5 730.0,267.5 731.0,267.5 732.0,267.5 733.0,267.5 734.0,267.5 735.0,267.5 736.0,267.5 737.0,267.5 738.0,267.5 739.0,267.5 740.0,267.5 741.0,267.5 742.0,267.5 743.0,267.5 744.0,267.5 745.0,267.5 746.0,267.5 747.0,267.5 748.0,267.5 749.0,267.5 750.0,267.5 751.0,267.5 752.0,267.5 753.0,267.5 754.0,267.5 755.0,267.5 756.0,267.5 757.0,267.5 758.0,267.5 759.0,267.5 760.0,267.5 761.0,267.5 762.0,267.5 763.0,267.5 764.0,267.5 765.0,267.5 766.0,267.5 767.0,267.5 768.0,267.5 769.0,267.5 770.0,267.5 771.0,267.5 772.0,267.5 773.0,267.5 774.0,267.5 775.0,267.5 776.0,267.5 777.0,267.5 778.0,267.5 779.0,267.5 780.0,267.5 781.0,267.5 782.0,267.5 783.0,267.5 784.0,267.5 785.0,267.5 786.0,267.5 787.0,267.5 788.0,267.5 789.0,267.5 790.0,267.5 791.0,267.5 792.0,267.5 793.0,267.5 794.0,267.5 795.0,267.5 796.0,267.5 797.0,267.5 798.0,267.5 799.0,267.5 800.0,267.5 801.0,267.5 802.0,267.5 803.0,267.5 804.0,267.5 805.0,267.5 806.0,267.5 807.0,267.5 808.0,267.5 809.0,267.5 810.0,267.5 811.0,267.5 812.0,267.5 813.0,267.5 814.0,267.5 815.0,267.5 816.0,267.5 817.0,267.5 818.0,267.5 819.0,267.5 820.0,267.5 821.0,267.5 822.0,267.5 823.0,267.5 824.0,267.5 825.0,267.5 826.0,267.5 827.0,267.5 828.0,267.5 829.0,267.5 830.0,267.5 831.0,267.5 832.0,267.5 833.0,267.5 834.0,267.5 835.0,267.5 836.0,267.5 837.0,267.5 838.0,267.5 839.0,267.5 840.0,267.5 841.0,267.5 842.0,267.5 843.0,267.5 844.0,267.5 845.0,267.5 846.0,267.5 847.0,267.5 848.0,267.5 849.0,267.5 850.0,267.5 851.0,267.5 852.0,267.5 853.0,267.5 854.0,267.5 855.0,267.5 856.0,267.5 857.0,267.5 858.0,267.5 859.0,267.5 860.0,267.5 861.0,267.5 862.0,267.5 863.0,267.5 864.0,267.5 865.0,267.5 866.0,267.5 867.0,267.5 868.0,267.5 869.0,267.5 870.0,267.5 871.0,267.5 872.0,267.5 873.0,267.5 874.0,267.5 875.0,267.5 876.0,267.5 877.0,267.5 878.0,267.5 879.0,267.5 880.0,267.5 881.0,267.5 882.0,267.5 883.0,267.5 884.0,267.5 885.0,267.5 886.0,267.5 887.0,267.5 888.0,267.5 889.0,267.5 890.0,267.5 891.0,267.5 892.0,267.5 893.0,267.5 894.0,267.5 895.0,267.5 896.0,267.5 897.0,267.5 898.0,267.5 899.0,267.5 900.0,267.5 901.0,267.5 902.0,267.5 903.0,267.5 904.0,267.5 905.0,267.5 906.0,267.5 907.0,267.5 908.0,267.5 909.0,267.5 910.0,267.5 911.0,267.5 912.0,267.5 913.0,267.5 914.0,267.5 915.0,267.5 916.0,267.5 917.0,267.5 918.0,267.5 919.0,267.5 920.0,267.5 921.0,267.5 922.0,267.5 923.0,267.5 924.0,267.5 925.0,267.5 926.0,267.5 927.0,267.5 928.0,267.5" stroke="#ffa040" stroke-width="1"/>
<line x1="108" y1="270.5" x2="929" y2="270.5" stroke="#003838" stroke-width="1"/>
<polyline points="108.0,178.5 108.3,178.5 108.6,178.5 108.9,178.5 109.2,178.5 109.5,178.5 109.8,178.5 110.1,178.5 110.4,178.5 110.7,178.5 111.0,178.5 111.3,178.5 111.6,178.5 111.9,178.5 112.2,178.5 112.5,178.5 112.8,178.5 113.1,178.5 113.4,178.5 113.7,178.5 114.0,178.5 114.3,178.5 114.6,178.5 114.9,178.5 115.2,178.5 115.5,178.5 115.8,178.5 116.1,178.5 116.4,178.5 116.7,178.5 117.0,178.5 117.3,178.5 117.6,178.5 117.9,178.5 118.2,178.5 118.5,178.5 118.8,178.5 119.1,178.5 119.4,178.5 119.7,178.5 120.0,178.5 120.3,178.5 120.6,178.5 120.9,178.5 121.2,178.5 121.5,178.5 121.8,178.5 122.1,178.5 122.4,178.5 122.7,178.5 123.0,178.5 123.3,178.5 123.6,178.5 123.9,178.5 124.2,178.5 124.5,178.5 124.8,178.5 125.1,178.5 125.4,178.5 125.7,178.5 126.0,178.5 126.3,178.5 126.6,178.5 126.9,178.5 127.2,178.5 127.5,178.5 127.8,178.5 128.1,178.5 128.4,178.5 128.7,178.5 129.0,178.5 129.3,178.5 129.6,178.5 129.9,178.5 130.2,178.5 130.5,178.5 130.8,178.5 131.1,178.5 131.4,178.5 131.7,178.5 132.0,178.5 132.3,178.5 132.6,178.5 132.9,178.5 133.2,178.5 133.5,178.5 133.8,178.5 134.1,178.5 134.4,178.5 134.7,178.5 135.0,178.5 135.3,178.5 135.6,178.5 135.9,178.5 136.2,178.5 136.5,178.5 136.8,178.5 137.1,178.5 137.4,178.5 137.7,178.5 138.0,178.5 138.3,178.5 138.6,178.5 138.9,178.5 139.2,178.5 139.5,178.5 139.8,178.5 140.1,178.5 140.4,178.5 140.7,178.5 141.0,178.5 141.3,178.5 141.6,178.5 141.9,178.5 142.2,178.5 142.5,178.5 142.8,178.5 143.1,178.5 143.4,178.5 143.7,178.5 144.0,178.5 144.3,178.5 144.6,178.5 144.9,178.5 145.2,178.5 145.5,178.5 145.8,178.5 146.1,178.5 146.4,178.5 146.7,178.5 147.0,178.5 147.3,178.5 147.6,178.5 147.9,178.5 148.2,178.5 148.5,178.5 148.8,178.5 149.1,178.5 149.4,178.5 149.7,178.5 150.0,178.5 150.3,178.5 150.6,178.5 150.9,178.5 151.2,178.5 151.5,178.5 151.8,178.5 152.1,178.5 152.4,178.5 152.7,178.5 153.0,178.5 153.3,178.5 153.6,178.5 153.9,178.5 154.2,178.5 154.5,178.5 154.8,178.5 155.1,178.5 155.4,178.5 155.7,178.5 156.0,178.5 156.3,178.5 156.6,178.5 156.9,178.5 157.2,178.5 157.5,178.5 157.8,178.5 158.1,178.5 158.4,178.5 158.7,178.5 159.0,178.5 159.3,178.5 159.6,178.5 159.9,178.5 160.2,178.5 160.5,178.5 160.8,178.5 161.1,178.5 161.4,178.5 161.7,178.5 162.0,178.5 162.3,178.5 162.6,178.5 162.9,178.5 163.2,178.5 163.5,178.5 163.8,178.5 164.1,178.5 164.4,178.5 164.7,178.5 165.0,178.5 165.3,178.5 165.6,178.5 165.9,178.5 166.2,178.5 166.5,178.5 166.8,178.5 167.1,178.5 167.4,178.5 167.7,178.5 168.0,178.5 168.3,178.5 168.6,178.5 168.9,178.5 169.2,178.5 169.5,178.5 169.8,178.5 170.1,178.5 170.4,178.5 170.7,178.5 171.0,178.5 171.3,178.5 171.6,178.5 171.9,178.5 172.2,178.5 172.5,178.5 172.8,178.5 173.1,178.5 173.4,178.5 173.7,178.5 174.0,178.5 174.3,178.5 174.6,178.5 174.9,178.5 175.2,178.5 175.5,178.5 175.8,178.5 176.1,178.5 176.4,178.5 176.7,178.5 177.0,178.5 177.3,178.5 177.6,178.5 177.9,178.5 178.2,178.5 178.5,178.5 178.8,178.5 179.1,178.5 179.4,178.5 179.7,178.5 180.0,178.5 180.3,178.5 180.6,178.5 180.9,178.5 181.2,178.5 181.5,178.5 181.8,178.5 182.1,178.5 182.4,178.5 182.7,178.5 183.0,178.5 183.3,178.5 183.6,178.5 183.9,178.5 184.2,178.5 184.5,178.5 184.8,178.5 185.1,178.5 185.4,178.5 185.7,178.5 186.0,178.5 186.3,178.5 186.6,178.5 186.9,178.5 187.2,178.5 187.5,178.5 187.8,178.5 188.1,178.5 188.4,178.5 188.7,178.5 189.0,178.5 189.3,178.5 189.6,178.5 189.9,178.5 190.2,178.5 190.5,178.5 190.8,178.5 191.1,178.5 191.4,178.5 191.7,178.5 192.0,178.5 192.3,178.5 192.6,178.5 192.9,178.5 193.2,178.5 193.5,178.5 193.8,178.5 194.1,178.5 194.4,178.5 194.7,178.5 195.0,178.5 195.3,178.5 195.6,178.5 195.9,178.5 196.2,178.5 196.5,178.5 196.8,178.5 197.1,178.5 197.4,178.5 197.7,178.5 198.0,178.5 198.3,178.5 198.6,178.5 198.9,178.5 199.2,178.5 199.5,178.5 199.8,178.5 200.1,178.5 200.4,178.5 200.7,178.5 201.0,178.5 201.3,178.5 201.6,178.5 201.9,178.5 202.2,178.5 202.5,178.5 202.8,178.5 203.1,178.5 203.4,178.5 203.7,178.5 204.0,178.5 204.3,178.5 204.6,178.5 204.9,178.5 205.2,178.5 205.5,178.5 205.8,178.5 206.1,178.5 206.4,178.5 206.7,178.5 207.0,178.5 207.3,178.5 207.6,178.5 207.9,178.5 208.2,178.5 208.5,178.5 208.8,178.5 209.1,178.5 209.4,178.5 209.7,178.5 210.0,178.5 210.3,178.5 210.6,178.5 210.9,178.5 211.2,178.5 211.5,178.5 211.8,178.5 212.1,178.5 212.4,178.5 212.7,178.5 213.0,178.5 213.3,178.5 213.6,178.5 213.9,178.5 214.2,178.5 214.5,178.5 214.8,178.5 215.1,178.5 215.4,178.5 215.7,178.5 216.0,178.5 216.3,178.5 216.6,178.5 216.9,178.5 217.2,178.5 217.5,178.5 217.8,178.5 218.1,178.5 218.4,178.5 218.7,178.5 219.0,178.5 219.3,178.5 219.6,178.5 219.9,178.5 220.2,178.5 220.5,178.5 220.8,178.5 221.1,178.5 221.4,178.5 221.7,178.5 222.0,178.5 222.3,178.5 222.6,178.5 222.9,178.5 223.2,178.5 223.5,178.5 223.8,178.5 224.1,178.5 224.4,178.5 224.7,178.5 225.0,178.5 225.3,178.5 225.6,178.5 225.9,178.5 226.2,178.5 226.5,178.5 226.8,178.5 227.1,178.5 227.4,178.5 227.7,178.5 228.0,178.5 228.3,178.5 228.6,178.5 228.9,178.5 229.2,177.3 229.5,172.3 229.8,172.5 230.1,168.0 230.4,173.0 230.7,169.0 231.0,163.5 231.3,164.3 231.6,165.1 231.9,165.2 232.2,163.3 232.5,169.1 232.8,170.2 233.1,166.0 233.4,166.2 233.7,163.0 234.0,163.1 234.3,165.0 234.6,164.4 234.9,168.9 235.2,163.6 235.5,162.5 235.8,169.9 236.1,166.5 236.4,163.5 236.7,166.6 237.0,162.5 237.3,166.5 237.6,170.1 237.9,169.2 238.2,167.9 238.5,164.4 238.8,165.2 239.1,163.6 239.4,168.5 239.7,166.6 240.0,167.3 240.3,165.7 240.6,165.3 240.9,167.4 241.2,168.0 241.5,167.6 241.8,167.4 242.1,167.4 242.4,167.2 242.7,165.3 243.0,166.4 243.3,165.8 243.6,164.6 243.9,164.6 244.2,165.5 244.5,165.4 244.8,167.0 245.1,167.9 245.4,166.1 245.7,167.9 246.0,168.1 246.3,167.9 246.6,165.8 246.9,165.3 247.2,165.3 247.5,165.2 247.8,165.2 248.1,166.7 248.4,167.7 248.7,167.5 249.0,166.2 249.3,166.9 249.6,167.4 249.9,164.8 250.2,166.9 250.5,167.8 250.8,167.3 251.1,167.2 251.4,166.2 251.7,165.1 252.0,167.3 252.3,165.7 252.6,167.4 252.9,168.0 253.2,165.9 253.5,165.9 253.8,167.9 254.1,167.1 254.4,165.1 254.7,165.0 255.0,165.0 255.3,167.8 255.6,167.4 255.9,165.0 256.2,167.5 256.5,168.0 256.8,166.9 257.1,165.8 257.4,166.5 257.7,165.0 258.0,164.6 258.3,168.0 258.6,166.8 258.9,166.4 259.2,167.9 259.5,166.1 259.8,167.6 260.1,167.5 260.4,165.3 260.7,165.4 261.0,165.6 261.3,165.4 261.6,166.6 261.9,165.4 262.2,166.0 262.5,165.0 262.8,167.8 263.1,165.8 263.4,166.1 263.7,166.6 264.0,167.8 264.3,166.0 264.6,167.8 264.9,166.3 265.2,166.4 265.5,166.4 265.8,164.6 266.1,166.2 266.4,165.6 266.7,165.4 267.0,168.6 267.3,166.7 267.6,168.1 267.9,169.4 268.2,168.8 268.5,168.4 268.8,168.7 269.1,168.8 269.4,169.3 269.7,167.9 270.0,168.8 270.3,168.2 270.6,168.3 270.9,169.2 271.2,168.7 271.5,168.8 271.8,169.2 272.1,169.5 272.4,168.6 272.7,168.9 273.0,168.7 273.3,168.7 273.6,169.1 273.9,168.6 274.2,168.8 274.5,168.7 274.8,169.6 275.1,169.1 275.4,169.5 275.7,169.6 276.0,168.2 276.3,168.8 276.6,169.6 276.9,169.4 277.2,168.0 277.5,167.9 277.8,168.6 278.1,167.8 278.4,168.2 278.7,167.8 279.0,169.0 279.3,169.3 279.6,169.5 279.9,168.0 280.2,169.1 280.5,169.0 280.8,168.0 281.1,169.5 281.4,169.6 281.7,168.1 282.0,169.6 282.3,168.5 282.6,168.7 282.9,169.7 283.2,169.4 283.5,168.0 283.8,168.6 284.1,168.7 284.4,168.4 284.7,168.1 285.0,168.3 285.3,169.1 285.6,167.7 285.9,168.8 286.2,168.6 286.5,167.7 286.8,168.4 287.1,168.9 287.4,168.7 287.7,167.8 288.0,169.7 288.3,169.3 288.6,169.6 288.9,167.9 289.2,167.1 289.5,166.3 289.8,177.1 290.1,172.3 290.4,170.8 290.7,174.5 291.0,180.5 291.3,179.5 291.6,173.0 291.9,171.8 292.2,181.3 292.5,177.2 292.5,172.0 292.8,197.0 292.8,179.0 293.1,171.8 293.4,171.6 293.7,179.3 293.5,160.0 293.8,190.0 294.0,176.3 294.3,172.3 294.6,182.8 294.9,179.3 295.2,181.5 295.5,173.1 295.8,182.5 296.1,173.2 296.0,150.0 296.3,185.0 296.4,182.9 296.7,178.2 297.0,177.0 297.3,179.7 297.6,184.3 297.5,144.0 297.8,180.0 297.9,176.6 298.2,175.1 298.5,180.0 298.8,176.8 299.1,176.4 299.4,180.2 299.7,185.3 300.0,185.3 300.3,185.3 300.6,185.3 300.9,185.3 301.2,185.3 301.5,185.3 301.8,185.3 302.1,185.3 302.4,185.3 302.7,185.3 303.0,185.3 303.3,185.3 303.6,185.3 303.9,185.3 304.2,185.3 304.5,185.3 304.8,185.3 305.1,185.3 305.4,185.3 305.7,185.3 306.0,185.3 306.3,185.3 306.6,185.3 306.9,185.3 307.2,185.3 307.5,185.3 307.8,185.3 308.1,185.3 308.4,185.3 308.7,185.3 309.0,185.3 309.3,185.3 309.6,185.3 309.9,185.3 310.2,185.3 310.5,185.3 310.8,185.3 311.1,185.3 311.4,185.3 311.7,185.3 312.0,185.3 312.3,185.3 312.6,185.3 312.9,185.3 313.2,185.3 313.5,185.3 313.8,185.3 314.1,185.3 314.4,185.3 314.7,185.3 315.0,185.3 315.3,185.3 315.6,185.3 315.9,185.3 316.2,185.3 316.5,185.3 316.8,185.3 317.1,185.3 317.4,185.3 317.7,185.3 318.0,185.3 318.3,185.3 318.6,185.3 318.9,185.3 319.2,185.3 319.5,185.3 319.8,185.3 320.1,185.3 320.4,185.3 320.7,185.3 321.0,185.3 321.3,185.3 321.6,185.3 321.9,185.3 322.2,185.3 322.5,185.3 322.8,185.3 323.1,185.3 323.4,185.3 323.7,185.3 324.0,185.3 324.3,185.3 324.6,185.3 324.9,185.3 325.2,185.3 325.5,185.3 325.8,185.3 326.1,185.3 326.4,185.3 326.7,185.3 327.0,185.3 327.3,185.3 327.6,185.3 327.9,185.3 328.2,185.3 328.5,185.3 328.8,185.3 329.1,185.3 329.4,185.3 329.7,185.3 330.0,185.3 330.3,185.3 330.6,185.3 330.9,185.3 331.2,185.3 331.5,185.3 331.8,185.3 332.1,185.3 332.4,185.3 332.7,185.3 333.0,185.3 333.3,185.3 333.6,185.3 333.9,185.3 334.2,185.3 334.5,185.3 334.8,185.3 335.1,185.3 335.4,185.3 335.7,185.3 336.0,185.3 336.3,185.3 336.6,185.3 336.9,185.3 337.2,185.3 337.5,185.3 337.8,185.3 338.1,185.3 338.4,185.3 338.7,185.3 339.0,185.3 339.3,185.3 339.6,185.3 339.9,185.3 340.2,185.3 340.5,185.3 340.8,185.3 341.1,185.3 341.4,185.3 341.7,185.3 342.0,185.3 342.3,185.3 342.6,185.3 342.9,185.3 343.2,185.3 343.5,185.3 343.8,185.3 344.1,185.3 344.4,185.3 344.7,185.3 345.0,185.3 345.3,185.3 345.6,185.3 345.9,185.3 346.2,185.3 346.5,185.3 346.8,185.3 347.1,185.3 347.4,185.3 347.7,185.3 348.0,185.3 348.3,185.3 348.6,185.3 348.9,185.3 349.2,185.3 349.5,185.3 349.8,185.3 350.1,185.3 350.4,185.3 350.7,185.3 351.0,185.3 351.3,185.3 351.6,185.3 351.9,185.3 352.2,185.3 352.5,185.3 352.8,185.3 353.1,185.3 353.4,185.3 353.7,185.3 354.0,185.3 354.3,185.3 354.6,185.3 354.9,185.3 355.2,185.3 355.5,185.3 355.8,185.3 356.1,185.3 356.4,185.3 356.7,185.3 357.0,185.3 357.3,185.3 357.6,185.3 357.9,185.3 358.2,185.3 358.5,185.3 358.8,185.3 359.1,185.3 359.4,185.3 359.7,185.3 360.0,185.3 360.3,185.3 360.6,185.3 360.9,185.3 361.2,185.3 361.5,185.3 361.8,185.3 362.1,185.3 362.4,185.3 362.7,185.3 363.0,185.3 363.3,185.3 363.6,185.3 363.9,185.3 364.2,185.3 364.5,185.3 364.8,185.3 365.1,185.3 365.4,185.3 365.7,185.3 366.0,185.3 366.3,185.3 366.6,185.3 366.9,185.3 367.2,185.3 367.5,185.3 367.8,185.3 368.1,185.3 368.4,185.3 368.7,185.3 369.0,185.3 369.3,185.3 369.6,185.3 369.9,185.3 370.2,185.3 370.5,185.3 370.8,185.3 371.1,185.3 371.4,185.3 371.7,185.3 372.0,185.3 372.3,185.3 372.6,185.3 372.9,185.3 373.2,185.3 373.5,185.3 373.8,185.3 374.1,185.3 374.4,185.3 374.7,185.3 375.0,185.3 375.3,185.3 375.6,185.3 375.9,185.3 376.2,185.3 376.5,185.3 376.8,185.3 377.1,185.3 377.4,185.3 377.7,185.3 378.0,185.3 378.3,185.3 378.6,185.3 378.9,185.3 379.2,185.3 379.5,185.3 379.8,185.3 380.1,185.3 380.4,185.3 380.7,185.3 381.0,185.3 381.3,185.3 381.6,185.3 381.9,185.3 382.2,185.3 382.5,185.3 382.8,185.3 383.1,185.3 383.4,185.3 383.7,185.3 384.0,185.3 384.3,185.3 384.6,185.3 384.9,185.3 385.2,185.3 385.5,185.3 385.8,185.3 386.1,185.3 386.4,185.3 386.7,185.3 387.0,185.3 387.3,185.3 387.6,185.3 387.9,185.3 388.2,185.3 388.5,185.3 388.8,185.3 389.1,185.3 389.4,185.3 389.7,185.3 390.0,185.3 390.3,185.3 390.6,185.3 390.9,185.3 391.2,185.3 391.5,185.3 391.8,185.3 392.1,185.3 392.4,185.3 392.7,185.3 393.0,185.3 393.3,185.3 393.6,185.3 393.9,185.3 394.2,185.3 394.5,185.3 394.8,185.3 395.1,185.3 395.4,185.3 395.7,185.3 396.0,185.3 396.3,185.3 396.6,185.3 396.9,185.3 397.2,185.3 397.5,185.3 397.8,185.3 398.1,185.3 398.4,185.3 398.7,185.3 399.0,185.3 399.3,185.3 399.6,185.3 399.9,185.3 400.2,185.3 400.5,185.3 400.8,185.3 401.1,185.3 401.4,185.3 401.7,185.3 402.0,185.3 402.3,185.3 402.6,185.3 402.9,185.3 403.2,185.3 403.5,185.3 403.8,185.3 404.1,185.3 404.4,185.3 404.7,185.3 405.0,185.3 405.3,185.3 405.6,185.3 405.9,185.3 406.2,185.3 406.5,185.3 406.8,185.3 407.1,185.3 407.4,185.3 407.7,185.3 408.0,185.3 408.3,185.3 408.6,185.3 408.9,185.3 409.2,185.3 409.5,185.3 409.8,185.3 410.1,185.3 410.4,185.3 410.7,185.3 411.0,185.3 411.3,185.3 411.6,185.3 411.9,185.3 412.2,185.3 412.5,185.3 412.8,185.3 413.1,185.3 413.4,185.3 413.7,185.3 414.0,185.3 414.3,185.3 414.6,185.3 414.9,185.3 415.2,185.3 415.5,185.3 415.8,185.3 416.1,185.3 416.4,185.3 416.7,185.3 417.0,185.3 417.3,185.3 417.6,185.3 417.9,185.3 418.2,185.3 418.5,185.3 418.8,185.3 419.1,185.3 419.4,185.3 419.7,185.3 420.0,185.3 420.3,185.3 420.6,185.3 420.9,185.3 421.2,185.3 421.5,185.3 421.8,185.3 422.1,185.3 422.4,185.3 422.7,185.3 423.0,185.3 423.3,185.3 423.6,185.3 423.9,185.3 424.2,185.3 424.5,185.3 424.8,185.3 425.1,185.3 425.4,185.3 425.7,185.3 426.0,185.3 426.3,185.3 426.6,185.3 426.9,185.3 427.2,185.3 427.5,185.3 427.8,185.3 428.1,185.3 428.4,185.3 428.7,185.3 429.0,185.3 429.3,185.3 429.6,185.3 429.9,185.3 430.2,185.3 430.5,185.3 430.8,185.3 431.1,185.3 431.4,185.3 431.7,185.3 432.0,185.3 432.3,185.3 432.6,185.3 432.9,185.3 433.2,185.3 433.5,185.3 433.8,185.3 434.1,185.3 434.4,185.3 434.7,185.3 435.0,185.3 435.3,185.3 435.6,185.3 435.9,185.3 436.2,185.3 436.5,185.3 436.8,185.3 437.1,185.3 437.4,185.3 437.7,185.3 438.0,185.3 438.3,185.3 438.6,185.3 438.9,185.3 439.2,185.3 439.5,185.3 439.8,185.3 440.1,185.3 440.4,185.3 440.7,185.3 441.0,185.3 441.3,185.3 441.6,185.3 441.9,185.3 442.2,185.3 442.5,185.3 442.8,185.3 443.1,185.3 443.4,185.3 443.7,185.3 444.0,185.3 444.3,185.3 444.6,185.3 444.9,185.3 445.2,185.3 445.5,185.3 445.8,185.3 446.1,185.3 446.4,185.3 446.7,185.3 447.0,185.3 447.3,185.3 447.6,185.3 447.9,185.3 448.2,185.3 448.5,185.3 448.8,185.3 449.1,185.3 449.4,185.3 449.7,185.3 450.0,185.3 450.3,185.3 450.6,185.3 450.9,185.3 451.2,185.3 451.5,185.3 451.8,185.3 452.1,185.3 452.4,185.3 452.7,185.3 453.0,185.3 453.3,185.3 453.6,185.3 453.9,185.3 454.2,185.3 454.5,185.3 454.8,185.3 455.1,185.3 455.4,185.3 455.7,185.3 456.0,185.3 456.3,185.3 456.6,185.3 456.9,185.3 457.2,185.3 457.5,185.3 457.8,185.3 458.1,185.3 458.4,185.3 458.7,185.3 459.0,185.3 459.3,185.3 459.6,185.3 459.9,185.3 460.2,185.3 460.5,185.3 460.8,185.3 461.1,185.3 461.4,185.3 461.7,185.3 462.0,185.3 462.3,185.3 462.6,185.3 462.9,185.3 463.2,185.3 463.5,185.3 463.8,185.3 464.1,185.3 464.4,185.3 464.7,185.3 465.0,185.3 465.3,185.3 465.6,185.3 465.9,185.3 466.2,185.3 466.5,185.3 466.8,185.3 467.1,185.3 467.4,185.3 467.7,185.3 468.0,185.3 468.3,185.3 468.6,185.3 468.9,185.3 469.2,185.3 469.5,185.3 469.8,185.3 470.1,185.3 470.4,185.3 470.7,185.3 471.0,185.3 471.3,185.3 471.6,185.3 471.9,185.3 472.2,185.3 472.5,185.3 472.8,185.3 473.1,185.3 473.4,185.3 473.7,185.3 474.0,185.3 474.3,185.3 474.6,185.3 474.9,185.3 475.2,185.3 475.5,185.3 475.8,185.3 476.1,185.3 476.4,185.3 476.7,185.3 477.0,185.3 477.3,185.3 477.6,185.3 477.9,185.3 478.2,185.3 478.5,185.3 478.8,185.3 479.1,185.3 479.4,185.3 479.7,185.3 480.0,185.3 480.3,185.3 480.6,185.3 480.9,185.3 481.2,185.3 481.5,185.3 481.8,185.3 482.1,185.3 482.4,185.3 482.7,185.3 483.0,185.3 483.3,185.3 483.6,185.3 483.9,185.3 484.2,185.3 484.5,185.3 484.8,185.3 485.1,185.3 485.4,185.3 485.7,185.3 486.0,185.3 486.3,185.3 486.6,185.3 486.9,185.3 487.2,185.3 487.5,185.3 487.8,185.3 488.1,185.3 488.4,185.3 488.7,185.3 489.0,185.3 489.3,185.3 489.6,185.3 489.9,185.3 490.2,185.3 490.5,185.3 490.8,185.3 491.1,185.3 491.4,185.3 491.7,185.3 492.0,185.3 492.3,185.3 492.6,182.9 492.9,180.2 493.2,177.5 493.5,174.6 493.8,172.2 494.1,167.9 494.4,170.0 494.7,166.8 495.0,168.5 495.3,165.2 495.6,167.5 495.9,165.2 495.8,165.0 496.1,192.0 496.2,172.3 496.5,170.5 496.8,166.9 497.1,169.7 497.0,160.0 497.3,178.0 497.4,174.3 497.7,166.1 498.0,173.2 498.3,169.3 498.6,170.0 498.9,173.3 499.2,168.9 499.5,170.1 499.8,171.9 500.1,174.8 500.4,168.4 500.7,173.3 501.0,172.1 501.3,171.4 501.6,169.0 501.9,168.5 502.2,165.5 502.5,166.3 502.8,165.7 503.1,172.4 503.4,167.6 503.7,166.6 504.0,165.8 504.3,173.4 504.6,173.7 504.9,171.7 505.2,170.0 505.5,171.0 505.8,172.2 506.1,173.5 506.4,172.5 506.7,173.4 507.0,172.8 507.3,175.1 507.6,175.1 507.9,173.8 508.2,172.8 508.5,175.1 508.8,173.0 509.1,173.1 509.4,172.0 509.7,173.2 510.0,173.5 510.3,173.6 510.6,172.6 510.9,173.6 511.2,172.0 511.5,172.8 511.8,172.3 512.1,173.3 512.4,172.1 512.7,172.1 513.0,173.0 513.3,172.7 513.6,173.9 513.9,173.7 514.2,174.4 514.5,174.1 514.8,174.3 515.1,174.8 515.4,173.2 515.7,173.0 516.0,175.2 516.3,172.5 516.6,174.3 516.9,174.1 517.2,172.1 517.5,174.7 517.8,174.9 518.1,174.0 518.4,174.3 518.7,174.6 519.0,172.4 519.3,173.7 519.6,173.6 519.9,174.7 520.2,174.6 520.5,174.6 520.8,173.9 521.1,174.9 521.4,174.2 521.7,174.2 522.0,172.7 522.3,172.1 522.6,172.4 522.9,173.2 523.2,172.3 523.5,174.7 523.8,173.8 524.1,174.0 524.4,174.0 524.7,174.2 525.0,173.6 525.3,172.0 525.6,174.6 525.9,174.4 526.2,173.6 526.5,173.7 526.8,174.1 527.1,172.2 527.4,174.4 527.7,172.8 528.0,172.2 528.3,172.8 528.6,174.3 528.9,172.7 529.2,174.4 529.5,175.1 529.8,173.6 530.1,173.2 530.4,173.5 530.7,174.2 531.0,174.5 531.3,174.0 531.6,174.1 531.9,172.2 532.2,172.5 532.5,172.8 532.8,174.4 533.1,173.0 533.4,173.8 533.7,172.0 534.0,172.2 534.3,172.9 534.6,174.2 534.9,174.2 535.2,174.2 535.5,172.9 535.8,173.7 536.1,173.5 536.4,173.5 536.7,172.4 537.0,174.9 537.3,172.6 537.6,175.1 537.9,175.0 538.2,172.1 538.5,173.5 538.8,174.6 539.1,175.1 539.4,173.4 539.7,172.9 540.0,172.7 540.3,175.0 540.6,172.7 540.9,173.9 541.2,172.5 541.5,173.7 541.8,175.0 542.1,172.4 542.4,174.6 542.7,173.6 543.0,174.8 543.3,174.3 543.6,172.7 543.9,174.9 544.2,173.6 544.5,172.1 544.8,172.0 545.1,173.6 545.4,173.4 545.7,173.0 546.0,172.5 546.3,173.1 546.6,173.0 546.9,174.7 547.2,172.0 547.5,174.4 547.8,174.7 548.1,172.4 548.4,175.0 548.7,174.3 549.0,174.9 549.3,172.9 549.6,173.2 549.9,173.3 550.2,175.2 550.5,173.9 550.8,173.2 551.1,173.4 551.4,172.9 551.7,172.2 552.0,172.3 552.3,174.7 552.6,172.9 552.9,175.0 553.2,172.8 553.5,172.9 553.8,173.6 554.1,172.6 554.4,173.2 554.7,175.1 555.0,174.8 555.3,174.2 555.6,173.2 555.9,173.7 556.2,173.4 556.5,171.8 556.8,171.9 557.1,169.4 557.4,171.2 557.7,169.9 558.0,170.4 558.3,169.7 558.6,168.2 558.9,167.0 559.2,169.4 559.5,166.5 559.8,167.2 560.1,166.1 559.9,160.0 560.2,172.0 560.4,165.8 560.7,168.4 561.0,169.9 561.3,165.6 561.6,167.9 561.9,165.8 562.2,167.3 562.5,166.4 562.8,165.0 563.1,165.0 563.4,165.2 563.7,169.4 564.0,167.0 564.3,165.3 564.6,169.4 564.9,170.0 565.2,166.7 565.5,164.8 565.8,165.2 566.1,164.5 566.4,166.1 566.7,164.5 567.0,165.4 567.3,165.6 567.6,167.4 567.9,169.3 568.2,168.5 568.5,166.5 568.8,166.5 569.1,167.1 569.4,166.3 569.7,166.0 570.0,164.4 570.3,165.7 570.6,169.8 570.9,164.8 571.2,167.0 571.5,167.8 571.8,169.2 572.1,165.3 572.4,165.6 572.7,165.5 573.0,166.4 573.3,166.7 573.6,169.7 573.9,169.1 574.2,169.2 574.5,164.1 574.8,164.2 575.1,168.3 575.4,169.4 575.7,166.8 576.0,167.5 576.3,164.0 576.6,166.3 576.9,169.6 577.2,169.0 577.5,169.1 577.8,169.8 578.1,165.5 578.4,164.7 578.7,164.9 579.0,167.1 579.3,168.1 579.6,169.6 579.9,168.3 580.2,167.9 580.5,168.6 580.8,166.7 581.1,167.3 581.4,164.2 581.7,168.7 582.0,165.4 582.3,169.5 582.6,167.9 582.9,165.8 583.2,164.8 583.5,165.5 583.8,167.8 584.1,168.3 584.4,165.3 584.7,165.5 585.0,168.6 585.3,169.4 585.6,168.7 585.9,168.2 586.2,170.9 586.5,167.8 586.8,170.0 587.1,171.4 587.4,174.9 587.7,173.4 588.0,174.2 588.3,172.9 588.6,172.2 588.9,172.2 589.2,174.5 589.5,173.7 589.8,172.4 590.1,171.5 590.4,173.0 590.7,173.6 591.0,172.7 591.3,172.2 591.6,173.5 591.9,174.4 592.2,172.1 592.5,171.5 592.8,172.5 593.1,172.7 593.4,173.6 593.7,172.0 594.0,174.0 594.3,173.8 594.6,173.0 594.9,172.1 595.2,174.5 595.5,172.4 595.8,174.0 596.1,172.1 596.4,172.1 596.7,173.8 597.0,172.3 597.3,174.4 597.6,173.0 597.9,172.0 598.2,172.1 598.5,172.7 598.8,173.5 599.1,174.4 599.4,171.9 599.7,172.7 600.0,172.1 600.3,174.5 600.6,171.9 600.9,171.6 601.2,171.6 601.5,172.7 601.8,174.3 602.1,174.2 602.4,173.7 602.7,174.6 603.0,174.4 603.3,172.5 603.6,172.0 603.9,174.4 604.2,173.8 604.5,171.5 604.8,173.5 605.1,172.6 605.4,172.6 605.7,172.5 606.0,171.9 606.3,171.4 606.6,172.3 606.9,172.5 607.2,174.5 607.5,171.8 607.8,174.5 608.1,172.1 608.4,172.5 608.7,174.0 609.0,174.0 609.3,172.8 609.6,171.6 609.9,172.9 610.2,172.6 610.5,174.3 610.8,172.0 611.1,172.6 611.4,174.3 611.7,171.5 612.0,172.7 612.3,174.0 612.6,173.9 612.9,171.5 613.2,171.5 613.5,171.6 613.8,174.3 614.1,172.2 614.4,173.8 614.7,174.3 615.0,172.5 615.3,172.3 615.6,174.5 615.9,173.4 616.2,172.2 616.5,173.7 616.8,172.4 617.1,172.3 617.4,171.4 617.7,173.8 618.0,174.3 618.3,170.4 618.6,168.4 618.9,162.5 619.2,161.3 618.9,157.0 619.2,170.0 619.5,163.0 619.8,166.1 620.1,166.2 620.4,162.6 620.7,161.8 621.0,163.0 621.3,163.5 621.6,166.3 621.9,161.6 622.2,165.7 622.5,165.3 622.8,165.9 623.1,165.7 623.4,164.7 623.7,163.0 624.0,163.0 624.3,163.3 624.6,166.1 624.9,161.7 625.2,162.5 625.5,166.1 625.8,163.0 626.1,161.9 626.4,161.7 626.7,165.1 627.0,163.7 627.3,168.0 627.6,167.4 627.9,168.2 628.2,163.6 628.5,162.5 628.8,162.7 629.1,165.3 629.4,166.7 629.7,165.1 630.0,163.8 630.3,165.1 630.6,166.4 630.9,166.9 631.2,167.4 631.5,168.1 631.8,167.0 632.1,163.6 632.4,168.3 632.7,164.8 633.0,166.7 633.3,165.5 633.6,167.9 633.9,164.5 634.2,164.9 634.5,164.9 634.8,164.4 635.1,169.2 635.4,167.3 635.7,165.7 636.0,166.3 636.3,170.1 636.6,167.1 636.9,165.4 637.2,169.2 637.5,168.3 637.8,170.5 638.1,164.9 638.4,167.3 638.7,169.6 639.0,169.8 639.3,170.3 639.6,164.8 639.9,166.5 640.2,165.5 640.5,166.0 640.8,171.1 641.1,168.6 641.4,170.9 641.7,167.4 642.0,170.7 642.3,168.1 642.6,166.9 642.9,170.3 643.2,171.4 643.5,166.1 643.8,169.3 644.1,169.6 644.4,167.1 644.7,168.1 645.0,166.7 645.3,167.7 645.6,168.6 645.9,171.4 646.2,172.4 646.5,170.1 646.8,169.5 647.1,172.4 647.4,173.6 647.7,172.0 648.0,172.4 648.3,172.1 648.6,173.9 648.9,173.2 649.2,171.6 649.5,171.7 649.8,172.7 650.1,173.2 650.4,173.4 650.7,171.7 651.0,171.9 651.3,173.6 651.6,172.7 651.9,172.3 652.2,172.4 652.5,174.5 652.8,172.4 653.1,173.2 653.4,172.5 653.7,172.7 654.0,174.2 654.3,174.6 654.6,172.6 654.9,172.0 655.2,173.7 655.5,172.1 655.8,171.4 656.1,174.3 656.4,172.8 656.7,174.0 657.0,172.7 657.3,174.2 657.6,172.9 657.9,171.9 658.2,171.4 658.5,173.2 658.8,173.5 659.1,174.3 659.4,171.7 659.7,173.4 660.0,172.6 660.3,173.0 660.6,171.9 660.9,172.3 661.2,173.1 661.5,174.4 661.8,171.7 662.1,173.0 662.4,174.0 662.7,174.5 663.0,172.0 663.3,171.8 663.6,174.4 663.9,174.5 664.2,172.9 664.5,171.6 664.8,174.4 665.1,172.6 665.4,174.3 665.7,173.4 666.0,174.0 666.3,171.9 666.6,173.9 666.9,172.1 667.2,172.7 667.5,174.1 667.8,174.1 668.1,172.0 668.4,172.1 668.7,172.7 669.0,173.1 669.3,172.6 669.6,171.8 669.9,172.2 670.2,173.7 670.5,174.3 670.8,171.5 671.1,173.2 671.4,173.8 671.7,171.5 672.0,174.1 672.3,171.8 672.6,173.3 672.9,173.2 673.2,173.4 673.5,172.4 673.8,172.7 674.1,173.3 674.4,172.8 674.7,173.5 675.0,172.8 675.3,172.8 675.6,171.5 675.9,173.4 676.2,173.0 676.5,172.2 676.8,173.8 677.1,173.9 677.4,172.9 677.7,172.0 678.0,172.9 678.3,171.7 678.6,171.8 678.9,172.8 679.2,171.7 679.5,172.8 679.8,173.0 680.1,171.0 680.4,171.2 680.7,167.8 681.0,168.2 680.9,158.0 681.2,172.0 681.3,168.9 681.6,167.6 681.9,165.3 682.2,167.5 682.5,166.9 682.8,169.8 683.1,165.7 683.4,169.3 683.7,170.0 684.0,168.7 684.3,169.1 684.6,166.0 684.9,169.9 685.2,167.5 685.5,169.8 685.8,169.6 686.1,165.8 686.4,168.9 686.7,169.7 687.0,165.3 687.3,166.8 687.6,168.8 687.9,165.8 688.2,169.5 688.5,166.4 688.8,169.1 689.1,165.7 689.4,167.5 689.7,169.6 690.0,166.0 690.3,166.3 690.6,167.5 690.9,166.6 691.2,165.2 691.5,165.9 691.8,165.8 692.1,169.7 692.4,168.4 692.7,169.5 693.0,165.8 693.3,168.9 693.6,165.6 693.9,167.7 694.2,168.2 694.5,166.8 694.8,169.4 695.1,167.8 695.4,167.9 695.7,169.4 696.0,165.5 696.3,170.0 696.6,168.1 696.9,167.0 697.2,169.0 697.5,166.3 697.8,170.0 698.1,167.9 698.4,166.8 698.7,168.8 699.0,167.2 699.3,165.9 699.6,168.7 699.9,165.2 700.2,169.1 700.5,166.3 700.8,168.2 701.1,169.9 701.4,167.9 701.7,168.3 702.0,166.6 702.3,165.0 702.6,165.2 702.9,165.7 703.2,168.1 703.5,167.2 703.8,167.6 704.1,169.5 704.4,165.7 704.7,166.1 705.0,168.3 705.3,166.9 705.6,168.3 705.9,171.4 706.2,170.8 706.5,171.9 706.8,171.3 707.1,172.9 707.4,172.9 707.7,171.2 708.0,173.0 708.3,172.4 708.6,170.9 708.9,174.4 709.2,171.4 709.5,171.0 709.8,170.7 710.1,173.1 710.4,174.1 710.7,173.7 711.0,172.1 711.3,171.5 711.6,170.4 711.9,173.1 712.2,172.8 712.5,171.8 712.8,173.1 713.1,172.3 713.4,174.4 713.7,173.5 714.0,171.4 714.3,174.3 714.6,170.5 714.9,172.6 715.2,172.1 715.5,171.3 715.8,170.6 716.1,173.7 716.4,170.4 716.7,172.7 717.0,174.4 717.3,170.9 717.6,171.2 717.9,173.0 718.2,172.5 718.5,173.1 718.8,173.9 719.1,171.1 719.4,171.7 719.7,171.6 720.0,170.5 720.3,174.2 720.6,173.7 720.9,173.4 721.2,170.3 721.5,174.0 721.8,173.6 722.1,172.3 722.4,173.6 722.7,172.3 723.0,171.3 723.3,170.8 723.6,171.3 723.9,170.5 724.2,171.8 724.5,173.6 724.8,173.4 725.1,174.0 725.4,173.4 725.7,171.5 726.0,172.7 726.3,172.2 726.6,173.8 726.9,172.6 727.2,171.5 727.5,173.1 727.8,174.5 728.1,171.3 728.4,174.2 728.7,170.4 729.0,171.4 729.3,171.3 729.6,173.6 729.9,174.5 730.2,173.6 730.5,171.7 730.8,174.2 731.1,171.7 731.4,171.4 731.7,174.3 732.0,173.1 732.3,173.3 732.6,173.2 732.9,174.6 733.2,172.4 733.5,174.0 733.8,173.4 733.5,152.0 733.8,175.0 734.1,174.1 734.4,172.2 734.7,173.5 735.0,172.8 735.3,171.7 735.6,171.2 735.9,173.0 736.2,170.6 736.5,174.3 736.8,170.9 737.1,170.4 737.4,170.8 737.7,174.4 738.0,171.8 738.3,170.9 738.6,170.4 738.9,170.5 739.2,173.3 739.5,173.1 739.8,173.4 740.1,173.5 740.4,170.6 740.7,172.9 741.0,171.9 741.3,172.3 741.6,170.0 741.9,168.3 742.2,162.2 742.5,167.4 742.8,167.7 743.1,167.8 743.4,162.5 743.7,163.1 744.0,162.5 744.3,162.0 744.6,167.2 744.9,167.0 745.2,165.9 745.5,167.1 745.8,165.8 746.1,163.6 746.4,162.4 746.7,162.4 747.0,166.6 747.3,163.1 747.6,163.8 747.9,164.5 748.2,161.9 748.5,163.4 748.8,163.6 749.1,166.4 749.4,164.2 749.7,163.9 750.0,168.0 750.3,165.0 750.6,167.2 750.9,165.8 751.2,162.0 751.5,164.4 751.8,164.6 752.1,166.7 752.4,164.0 752.7,166.3 753.0,165.2 753.3,163.2 753.6,167.3 753.9,162.4 754.2,167.0 754.5,162.9 754.8,161.8 755.1,163.1 755.4,166.7 755.7,168.1 756.0,161.8 756.3,164.9 756.6,164.9 756.9,166.9 757.2,163.0 757.5,165.0 757.8,164.0 758.1,167.1 758.4,163.5 758.7,167.8 759.0,163.6 759.3,163.2 759.6,166.3 759.9,165.0 760.2,164.4 760.5,169.2 760.8,168.4 761.1,173.5 761.4,173.0 761.7,173.5 762.0,172.7 762.3,171.2 762.6,171.5 762.9,171.5 763.2,174.0 763.5,169.8 763.8,174.0 764.1,169.5 764.4,170.5 764.7,170.8 765.0,174.1 765.3,172.0 765.6,171.4 765.9,174.0 766.2,170.6 766.5,171.8 766.8,172.2 767.1,173.3 767.4,173.3 767.7,172.8 768.0,171.2 768.3,171.1 768.6,170.2 768.9,173.8 769.2,172.8 769.5,173.3 769.8,170.3 770.1,171.7 770.4,173.4 770.7,172.4 771.0,170.1 771.3,171.8 771.6,174.0 771.9,170.6 772.2,170.4 772.5,171.0 772.8,173.1 773.1,173.8 773.4,170.2 773.7,170.2 774.0,170.7 774.3,171.1 774.6,172.1 774.9,170.2 775.2,171.1 775.5,170.4 775.8,174.5 776.1,173.2 776.4,169.9 776.7,174.4 777.0,169.9 777.3,171.4 777.6,174.5 777.9,173.5 778.2,173.2 778.5,171.7 778.8,170.4 779.1,172.7 779.4,170.0 779.7,170.5 780.0,171.4 780.3,169.6 780.6,171.5 780.9,173.5 781.2,172.1 781.5,169.0 781.8,168.1 782.1,165.8 782.4,163.6 782.7,166.7 783.0,165.4 783.3,167.6 783.6,168.8 783.9,165.5 784.2,166.5 784.5,167.7 784.8,165.5 785.1,164.2 785.4,167.5 785.7,168.6 786.0,167.9 785.7,158.0 786.0,172.0 786.3,167.4 786.6,168.4 786.9,167.2 787.2,167.0 787.5,165.7 787.8,164.7 788.1,166.9 788.4,163.3 788.7,165.5 789.0,167.9 789.3,167.4 789.6,166.9 789.9,164.3 790.2,165.5 790.5,165.7 790.8,166.8 791.1,165.4 791.4,167.2 791.7,168.9 792.0,163.8 792.3,167.1 792.6,167.9 792.9,165.2 793.2,165.9 793.5,169.2 793.8,162.9 794.1,166.3 794.4,163.7 794.7,167.9 795.0,169.0 795.3,166.1 795.6,163.3 795.9,166.5 796.2,166.3 796.5,167.5 796.8,166.1 797.1,166.9 797.4,168.2 797.7,166.1 798.0,165.4 798.3,170.0 798.6,167.4 798.9,171.5 799.2,170.4 799.5,172.5 799.8,168.9 800.1,173.7 800.4,170.2 800.7,168.5 801.0,169.7 801.3,170.4 801.6,168.3 801.9,170.5 802.2,170.6 802.5,172.1 802.8,170.2 803.1,169.7 803.4,169.5 803.7,172.4 804.0,173.5 804.3,171.2 804.6,169.4 804.9,172.7 805.2,170.4 805.5,169.4 805.8,168.9 806.1,172.5 806.4,172.7 806.7,171.8 807.0,170.8 807.3,171.3 807.6,169.5 807.9,173.6 808.2,170.2 808.5,171.8 808.8,172.8 809.1,172.8 809.4,170.8 809.7,169.8 810.0,171.3 810.3,168.9 810.6,172.9 810.9,170.2 811.2,173.0 811.5,169.7 811.8,170.3 812.1,169.6 812.4,170.6 812.7,169.2 813.0,168.2 813.3,172.2 813.6,169.8 813.9,169.6 814.2,169.9 814.5,170.9 814.8,170.6 815.1,171.8 815.4,171.9 815.7,170.2 816.0,173.4 816.3,173.0 816.6,168.5 816.9,172.8 817.2,173.3 817.5,172.6 817.8,169.0 818.1,172.9 818.4,171.7 818.7,168.3 819.0,168.3 819.3,173.2 819.6,170.3 819.9,166.6 819.8,150.0 820.1,172.0 820.2,165.3 820.5,165.6 820.8,166.2 821.1,169.9 821.4,167.0 821.7,165.6 822.0,170.7 822.3,170.0 822.6,165.7 822.9,170.7 823.2,168.7 823.5,169.9 823.8,169.1 824.1,170.7 824.4,170.0 824.7,170.3 825.0,165.9 825.3,169.3 825.6,168.2 825.9,169.6 826.2,167.6 826.5,170.6 826.8,168.4 827.1,166.4 827.4,166.2 827.7,165.5 828.0,168.0 828.3,165.0 828.6,167.8 828.9,165.6 829.2,167.9 829.5,168.0 829.8,168.3 830.1,170.5 830.4,164.6 830.7,170.3 831.0,167.8 831.3,168.4 831.6,169.1 831.9,170.3 832.2,168.1 832.5,169.5 832.8,173.8 833.1,169.6 833.4,172.8 833.7,172.8 834.0,169.4 834.3,172.6 834.6,173.0 834.9,174.4 835.2,171.1 835.5,174.7 835.8,172.1 836.1,171.9 836.4,174.2 836.7,169.4 837.0,173.2 837.3,172.7 837.6,171.1 837.9,174.0 838.2,171.3 838.5,171.9 838.8,172.1 839.1,173.5 839.4,170.4 839.7,171.6 840.0,171.6 840.3,172.3 840.6,173.8 840.9,170.8 841.2,173.8 841.5,171.5 841.8,172.0 842.1,170.7 842.4,172.0 842.7,174.7 843.0,172.9 843.3,173.6 843.6,171.1 843.9,171.0 844.2,170.9 844.5,172.5 844.8,172.8 845.1,173.6 845.4,169.4 845.7,173.2 846.0,174.2 846.3,172.3 846.6,169.5 846.9,170.9 847.2,169.2 847.5,170.3 847.8,174.4 848.1,172.6 848.4,172.9 848.7,173.6 849.0,174.3 849.3,172.6 849.6,172.7 849.9,172.7 850.2,171.7 850.5,169.3 850.8,167.7 851.1,164.0 850.8,155.0 851.1,170.0 851.4,166.4 851.7,165.3 852.0,166.9 852.3,163.4 852.6,163.8 852.9,163.1 853.2,166.9 853.5,167.7 853.8,166.3 854.1,164.8 854.4,167.2 854.7,167.0 855.0,165.8 855.3,164.2 855.6,164.5 855.9,165.1 856.2,164.6 856.5,165.1 856.8,166.2 857.1,167.8 857.4,163.2 857.7,165.9 858.0,163.1 858.3,163.5 858.6,167.1 858.9,165.9 859.2,167.7 859.5,165.2 859.8,163.0 860.1,164.9 860.4,166.0 860.7,167.8 861.0,168.0 861.3,165.4 861.6,165.0 861.9,163.4 862.2,167.4 862.5,166.8 862.4,155.0 862.7,172.0 862.8,168.1 863.1,168.9 863.4,168.8 863.7,171.8 864.0,169.3 864.3,173.1 864.6,169.2 864.9,172.6 865.2,169.4 865.5,168.9 865.8,172.0 866.1,169.9 866.4,172.0 866.7,169.6 867.0,169.0 867.3,172.2 867.6,171.9 867.9,172.6 868.2,172.0 868.5,169.2 868.8,171.6 869.1,171.9 869.4,170.8 869.7,172.9 870.0,169.9 870.3,173.0 870.6,172.0 870.9,168.9 871.2,168.9 871.5,171.7 871.8,172.4 872.1,169.2 872.4,170.2 872.7,172.0 873.0,169.5 873.3,172.6 873.6,170.9 873.9,169.1 874.2,170.4 874.5,171.3 874.8,170.7 875.1,171.8 875.4,169.4 875.7,172.3 876.0,170.4 876.3,171.6 876.6,171.6 876.9,170.6 877.2,170.5 877.5,172.3 877.8,173.0 878.1,172.3 878.4,171.3 878.7,170.1 879.0,169.1 879.3,173.1 879.6,171.9 879.9,172.4 880.2,170.3 880.5,171.5 880.8,173.1 881.1,172.5 881.4,171.4 881.7,170.2 882.0,170.7 882.3,172.7 882.6,170.5 882.9,171.8 883.2,171.4 883.5,172.7 883.8,172.4 884.1,170.0 884.4,168.8 884.7,170.0 885.0,170.7 885.3,171.4 885.6,172.4 885.9,172.7 886.2,169.0 886.5,172.5 886.8,172.4 887.1,172.6 887.4,171.3 887.7,170.0 888.0,172.5 888.3,172.4 888.6,171.8 888.9,172.8 889.2,170.3 889.5,169.2 889.8,171.2 890.1,172.3 890.4,169.7 890.7,172.1 891.0,172.9 891.3,169.8 891.6,171.5 891.9,171.8 892.2,170.8 892.5,169.7 892.8,169.9 893.1,172.1 893.4,172.3 893.7,170.8 894.0,169.2 894.3,172.3 894.6,172.2 894.9,169.8 895.2,171.4 895.5,172.7 895.8,172.7 896.1,171.1 896.4,170.9 896.7,171.4 896.5,157.0 896.8,180.0 897.0,169.6 897.3,166.4 897.6,166.5 897.9,175.1 898.2,170.0 898.5,173.5 898.8,171.2 899.1,173.4 899.0,160.0 899.3,185.0 899.4,167.8 899.7,166.4 900.0,182.0 900.3,172.3 900.6,168.3 900.9,177.0 901.2,179.8 901.5,170.0 901.8,177.4 902.1,173.6 902.4,176.7 902.7,169.0 902.5,158.0 902.8,186.0 903.0,169.5 903.3,185.1 903.6,183.5 903.9,177.7 904.2,180.4 904.5,177.4 904.8,187.6 905.1,184.4 905.4,184.4 905.7,184.4 906.0,184.4 906.3,184.4 906.6,184.4 906.9,184.4 907.2,184.4 907.5,184.4 907.8,184.4 908.1,184.4 908.4,184.4 908.7,184.4 909.0,184.4 909.3,184.4 909.6,184.4 909.9,184.4 910.2,184.4 910.5,184.4 910.8,184.4 911.1,184.4 911.4,184.4 911.7,184.4 912.0,184.4 912.3,184.4 912.6,184.4 912.9,184.4 913.2,184.4 913.5,184.4 913.8,184.4 914.1,184.4 914.4,184.4 914.7,184.4 915.0,184.4 915.3,184.4 915.6,184.4 915.9,184.4 916.2,184.4 916.5,184.4 916.8,184.4 917.1,184.4 917.4,184.4 917.7,184.4 918.0,184.4 918.3,184.4 918.6,184.4 918.9,184.4 919.2,184.4 919.5,184.4 919.8,184.4 920.1,184.4 920.4,184.4 920.7,184.4 921.0,184.4 921.3,184.4 921.6,184.4 921.9,184.4 922.2,184.4 922.5,184.4 922.8,184.4 923.1,184.4 923.4,184.4 923.7,184.4 924.0,184.4 924.3,184.4 924.6,184.4 924.9,184.4 925.2,184.4 925.5,184.4 925.8,184.4 926.1,184.4 926.4,184.4 926.7,184.4 927.0,184.4 927.3,184.4 927.6,184.4" stroke="#0000ff" stroke-width="1"/>
<polyline points="108.0,177.5 108.2,177.5 108.5,177.5 108.8,177.5 109.0,177.5 109.2,177.5 109.5,177.5 109.8,177.5 110.0,177.5 110.2,177.5 110.5,177.5 110.8,177.5 111.0,177.5 111.2,177.5 111.5,177.5 111.8,177.5 112.0,177.5 112.2,177.5 112.5,177.5 112.8,177.5 113.0,177.5 113.2,177.5 113.5,177.5 113.8,177.5 114.0,177.5 114.2,177.5 114.5,177.5 114.8,177.5 115.0,177.5 115.2,177.5 115.5,177.5 115.8,177.5 116.0,177.5 116.2,177.5 116.5,177.5 116.8,177.5 117.0,177.5 117.2,177.5 117.5,177.5 117.8,177.5 118.0,177.5 118.2,177.5 118.5,177.5 118.8,177.5 119.0,177.5 119.2,177.5 119.5,177.5 119.8,177.5 120.0,177.5 120.2,177.5 120.5,177.5 120.8,177.5 121.0,177.5 121.2,177.5 121.5,177.5 121.8,177.5 122.0,177.5 122.2,177.5 122.5,177.5 122.8,177.5 123.0,177.5 123.2,177.5 123.5,177.5 123.8,177.5 124.0,177.5 124.2,177.5 124.5,177.5 124.8,177.5 125.0,177.5 125.2,177.5 125.5,177.5 125.8,177.5 126.0,177.5 126.2,177.5 126.5,177.5 126.8,177.5 127.0,177.5 127.2,177.5 127.5,177.5 127.8,177.5 128.0,177.5 128.2,177.5 128.5,177.5 128.8,177.5 129.0,177.5 129.2,177.5 129.5,177.5 129.8,177.5 130.0,177.5 130.2,177.5 130.5,177.5 130.8,177.5 131.0,177.5 131.2,177.5 131.5,177.5 131.8,177.5 132.0,177.5 132.2,177.5 132.5,177.5 132.8,177.5 133.0,177.5 133.2,177.5 133.5,177.5 133.8,177.5 134.0,177.5 134.2,177.5 134.5,177.5 134.8,177.5 135.0,177.5 135.2,177.5 135.5,177.5 135.8,177.5 136.0,177.5 136.2,177.5 136.5,177.5 136.8,177.5 137.0,177.5 137.2,177.5 137.5,177.5 137.8,177.5 138.0,177.5 138.2,177.5 138.5,177.5 138.8,177.5 139.0,177.5 139.2,177.5 139.5,177.5 139.8,177.5 140.0,177.5 140.2,177.5 140.5,177.5 140.8,177.5 141.0,177.5 141.2,177.5 141.5,177.5 141.8,177.5 142.0,177.5 142.2,177.5 142.5,177.5 142.8,177.5 143.0,177.5 143.2,177.5 143.5,177.5 143.8,177.5 144.0,177.5 144.2,177.5 144.5,177.5 144.8,177.5 145.0,177.5 145.2,177.5 145.5,177.5 145.8,177.5 146.0,177.5 146.2,177.5 146.5,177.5 146.8,177.5 147.0,177.5 147.2,177.5 147.5,177.5 147.8,177.5 148.0,177.5 148.2,177.5 148.5,177.5 148.8,177.5 149.0,177.5 149.2,177.5 149.5,177.5 149.8,177.5 150.0,177.5 150.2,177.5 150.5,177.5 150.8,177.5 151.0,177.5 151.2,177.5 151.5,177.5 151.8,177.5 152.0,177.5 152.2,177.5 152.5,177.5 152.8,177.5 153.0,177.5 153.2,177.5 153.5,177.5 153.8,177.5 154.0,177.5 154.2,177.5 154.5,177.5 154.8,177.5 155.0,177.5 155.2,177.5 155.5,177.5 155.8,177.5 156.0,177.5 156.2,177.5 156.5,177.5 156.8,177.5 157.0,177.5 157.2,177.5 157.5,177.5 157.8,177.5 158.0,177.5 158.2,177.5 158.5,177.5 158.8,177.5 159.0,177.5 159.2,177.5 159.5,177.5 159.8,177.5 160.0,177.5 160.2,177.5 160.5,177.5 160.8,177.5 161.0,177.5 161.2,177.5 161.5,177.5 161.8,177.5 162.0,177.5 162.2,177.5 162.5,177.5 162.8,177.5 163.0,177.5 163.2,177.5 163.5,177.5 163.8,177.5 164.0,177.5 164.2,177.5 164.5,177.5 164.8,177.5 165.0,177.5 165.2,177.5 165.5,177.5 165.8,177.5 166.0,177.5 166.2,177.5 166.5,177.5 166.8,177.5 167.0,177.5 167.2,177.5 167.5,177.5 167.8,177.5 168.0,177.5 168.2,177.5 168.5,177.5 168.8,177.5 169.0,177.5 169.2,177.5 169.5,177.5 169.8,177.5 170.0,177.5 170.2,177.5 170.5,177.5 170.8,177.5 171.0,177.5 171.2,177.5 171.5,177.5 171.8,177.5 172.0,177.5 172.2,177.5 172.5,177.5 172.8,177.5 173.0,177.5 173.2,177.5 173.5,177.5 173.8,177.5 174.0,177.5 174.2,177.5 174.5,177.5 174.8,177.5 175.0,177.5 175.2,177.5 175.5,177.5 175.8,177.5 176.0,177.5 176.2,177.5 176.5,177.5 176.8,177.5 177.0,177.5 177.2,177.5 177.5,177.5 177.8,177.5 178.0,177.5 178.2,177.5 178.5,177.5 178.8,177.5 179.0,177.5 179.2,177.5 179.5,177.5 179.8,177.5 180.0,177.5 180.2,177.5 180.5,177.5 180.8,177.5 181.0,177.5 181.2,177.5 181.5,177.5 181.8,177.5 182.0,177.5 182.2,177.5 182.5,177.5 182.8,177.5 183.0,177.5 183.2,177.5 183.5,177.5 183.8,177.5 184.0,177.5 184.2,177.5 184.5,177.5 184.8,177.5 185.0,177.5 185.2,177.5 185.5,177.5 185.8,177.5 186.0,177.5 186.2,177.5 186.5,177.5 186.8,177.5 187.0,177.5 187.2,177.5 187.5,177.5 187.8,177.5 188.0,177.5 188.2,177.5 188.5,177.5 188.8,177.5 189.0,177.5 189.2,177.5 189.5,177.5 189.8,177.5 190.0,177.5 190.2,177.5 190.5,177.5 190.8,177.5 191.0,177.5 191.2,177.5 191.5,177.5 191.8,177.5 192.0,177.5 192.2,177.5 192.5,177.5 192.8,177.5 193.0,177.5 193.2,177.5 193.5,177.5 193.8,177.5 194.0,177.5 194.2,177.5 194.5,177.5 194.8,177.5 195.0,177.5 195.2,177.5 195.5,177.5 195.8,177.5 196.0,177.5 196.2,177.5 196.5,177.5 196.8,177.5 197.0,177.5 197.2,177.5 197.5,177.5 197.8,177.5 198.0,177.5 198.2,177.5 198.5,177.5 198.8,177.5 199.0,177.5 199.2,177.5 199.5,177.5 199.8,177.5 200.0,177.5 200.2,177.5 200.5,177.5 200.8,177.5 201.0,177.5 201.2,177.5 201.5,177.5 201.8,177.5 202.0,177.5 202.2,177.5 202.5,177.5 202.8,177.5 203.0,177.5 203.2,177.5 203.5,177.5 203.8,177.5 204.0,177.5 204.2,177.5 204.5,177.5 204.8,177.5 205.0,177.5 205.2,177.5 205.5,177.5 205.8,177.5 206.0,177.5 206.2,177.5 206.5,177.5 206.8,177.5 207.0,177.5 207.2,177.5 207.5,177.5 207.8,177.5 208.0,177.5 208.2,177.5 208.5,177.5 208.8,177.5 209.0,177.5 209.2,177.5 209.5,177.5 209.8,177.5 210.0,177.5 210.2,177.5 210.5,177.5 210.8,177.5 211.0,177.5 211.2,177.5 211.5,177.5 211.8,177.5 212.0,177.5 212.2,177.5 212.5,177.5 212.8,177.5 213.0,177.5 213.2,177.5 213.5,177.5 213.8,177.5 214.0,177.5 214.2,177.5 214.5,177.5 214.8,177.5 215.0,177.5 215.2,177.5 215.5,177.5 215.8,177.5 216.0,177.5 216.2,177.5 216.5,177.5 216.8,177.5 217.0,177.5 217.2,177.5 217.5,177.5 217.8,177.5 218.0,177.5 218.2,177.5 218.5,177.5 218.8,177.5 219.0,177.5 219.2,177.5 219.5,177.5 219.8,177.5 220.0,177.5 220.2,177.5 220.5,177.5 220.8,177.5 221.0,177.5 221.2,177.5 221.5,177.5 221.8,177.5 222.0,177.5 222.2,177.5 222.5,177.5 222.8,177.5 223.0,177.5 223.2,177.5 223.5,177.5 223.8,177.5 224.0,177.5 224.2,177.5 224.5,177.5 224.8,177.5 225.0,177.5 225.2,177.5 225.5,177.5 225.8,177.5 226.0,177.5 226.2,177.5 226.5,177.5 226.8,177.5 227.0,177.5 227.2,177.5 227.5,177.5 227.8,177.5 228.0,177.5 228.2,177.5 228.5,177.5 228.8,177.5 229.0,177.5 229.2,177.9 229.5,178.3 229.8,177.6 230.0,179.9 230.2,176.8 230.5,180.2 230.8,176.5 231.0,179.9 231.2,179.0 231.5,177.1 231.8,178.2 232.0,177.4 232.2,177.3 232.5,177.1 232.3,165.0 232.6,193.0 232.8,177.8 233.0,180.3 233.2,180.3 233.5,180.0 233.5,160.0 233.8,190.0 233.8,176.7 234.0,177.5 234.2,179.9 234.5,176.5 234.8,179.2 234.6,170.0 234.9,188.0 235.0,177.5 235.2,180.2 235.5,176.4 235.8,179.5 236.0,177.7 236.2,176.9 236.5,176.3 236.8,179.6 237.0,178.4 237.2,177.0 237.5,178.0 237.8,179.9 238.0,177.2 238.2,178.6 238.5,176.9 238.8,177.0 239.0,179.4 239.2,179.1 239.5,177.1 239.8,176.6 240.0,176.6 240.2,178.7 240.5,178.3 240.8,177.4 241.0,177.1 241.2,178.7 241.5,179.1 241.8,179.5 242.0,178.6 242.2,177.1 242.5,176.6 242.8,179.2 243.0,177.9 243.2,179.2 243.5,176.5 243.8,179.5 244.0,177.6 244.2,179.7 244.5,179.8 244.8,178.3 245.0,176.4 245.2,179.9 245.5,178.2 245.8,179.8 246.0,177.4 246.2,177.0 246.5,179.6 246.8,177.8 247.0,177.0 247.2,177.8 247.5,178.7 247.8,176.3 248.0,178.4 248.2,178.1 248.5,178.4 248.8,176.8 249.0,179.2 249.2,179.6 249.5,179.8 249.8,177.6 250.0,179.1 250.2,177.8 250.5,179.3 250.8,176.5 251.0,179.8 251.2,180.1 251.5,178.3 251.8,178.4 252.0,178.4 252.2,178.4 252.5,176.4 252.8,180.2 253.0,177.2 253.2,177.0 253.5,176.7 253.8,177.3 254.0,179.6 254.2,176.4 254.5,176.7 254.8,179.1 255.0,177.1 255.2,176.4 255.5,178.7 255.8,178.6 256.0,178.4 256.2,179.1 256.5,176.7 256.8,179.8 257.0,179.2 257.2,176.5 257.5,176.8 257.8,178.3 258.0,178.3 258.2,177.4 258.5,176.8 258.8,177.9 259.0,176.8 259.2,178.7 259.5,179.7 259.8,176.9 260.0,178.6 260.2,179.3 260.5,177.0 260.8,179.6 261.0,180.1 261.2,177.9 261.5,178.0 261.8,179.7 262.0,178.4 262.2,177.9 262.5,180.1 262.8,179.4 263.0,177.7 263.2,177.3 263.5,177.6 263.8,178.0 264.0,180.2 264.2,179.5 264.5,180.0 264.8,179.6 265.0,179.7 265.2,176.5 265.5,178.4 265.8,180.1 266.0,180.0 266.2,177.3 266.5,178.0 266.8,178.8 267.0,177.8 267.2,178.4 267.5,176.6 267.8,178.0 268.0,178.3 268.2,176.4 268.5,176.9 268.4,139.4 268.7,225.7 268.8,180.2 269.0,179.4 268.9,160.0 269.2,200.0 269.2,180.0 269.5,178.8 269.8,179.5 270.0,179.8 270.2,179.8 270.5,176.4 270.8,178.9 271.0,177.4 271.2,179.0 271.5,177.4 271.8,178.5 272.0,180.0 272.2,178.8 272.5,177.3 272.8,178.4 273.0,178.0 273.2,180.1 273.5,177.5 273.8,177.5 274.0,178.9 274.2,176.8 274.5,178.7 274.8,180.1 275.0,178.4 275.2,177.4 275.5,178.2 275.8,178.4 276.0,176.9 276.2,176.8 276.5,176.8 276.8,177.5 277.0,177.9 277.2,177.5 277.5,177.3 277.8,176.7 278.0,178.5 278.2,179.7 278.5,178.7 278.8,178.6 279.0,178.9 279.2,177.1 279.5,179.1 279.8,178.1 280.0,178.5 280.2,178.8 280.5,178.2 280.8,177.5 281.0,177.3 281.2,177.2 281.5,178.3 281.8,177.8 282.0,178.6 282.2,176.3 282.5,177.7 282.8,179.7 283.0,177.3 283.2,178.5 283.5,178.3 283.8,177.4 284.0,180.3 284.2,177.5 284.5,179.4 284.8,176.9 285.0,176.6 285.2,179.8 285.5,178.1 285.8,176.5 286.0,177.9 286.2,178.1 286.5,179.2 286.8,176.7 287.0,177.2 287.2,180.1 287.5,179.3 287.8,176.9 288.0,177.6 288.2,177.7 288.5,179.0 288.8,178.8 289.0,179.7 289.2,179.6 289.5,178.4 289.8,179.3 290.0,179.3 290.0,157.0 290.3,180.0 290.2,179.3 290.5,178.2 290.8,179.4 291.0,179.1 290.8,162.0 291.1,184.0 291.2,180.0 291.5,176.8 291.8,179.8 292.0,174.3 292.2,180.3 292.5,178.8 292.8,178.0 293.0,181.7 293.2,178.5 293.5,177.2 293.8,180.0 294.0,180.6 294.2,178.4 294.5,176.5 294.8,177.0 295.0,177.0 295.2,179.0 295.5,175.5 295.8,176.2 296.0,177.4 296.2,176.0 296.5,175.4 296.8,179.0 297.0,179.5 297.0,160.0 297.3,190.0 297.2,176.6 297.5,176.0 297.8,173.9 298.0,174.8 298.2,173.4 298.5,176.8 298.3,165.0 298.6,188.0 298.8,176.7 299.0,172.7 299.2,178.6 299.5,173.1 299.8,176.5 300.0,173.0 300.2,173.0 300.5,173.0 300.8,173.0 301.0,173.0 301.2,173.0 301.5,173.0 301.8,173.0 302.0,173.0 302.2,173.0 302.5,173.0 302.8,173.0 303.0,173.0 303.2,173.0 303.5,173.0 303.8,173.0 304.0,173.0 304.2,173.0 304.5,173.0 304.8,173.0 305.0,173.0 305.2,173.0 305.5,173.0 305.8,173.0 306.0,173.0 306.2,173.0 306.5,173.0 306.8,173.0 307.0,173.0 307.2,173.1 307.5,173.2 307.8,173.4 308.0,173.5 308.2,173.5 308.5,173.5 308.8,173.5 309.0,173.5 309.2,173.5 309.5,173.5 309.8,173.5 310.0,173.5 310.2,173.5 310.5,173.5 310.8,173.5 311.0,173.5 311.2,173.5 311.5,173.5 311.8,173.5 312.0,173.5 312.2,173.5 312.5,173.5 312.8,173.5 313.0,173.5 313.2,173.5 313.5,173.5 313.8,173.5 314.0,173.5 314.2,173.5 314.5,173.5 314.8,173.5 315.0,173.5 315.2,173.5 315.5,173.5 315.8,173.5 316.0,173.5 316.2,173.5 316.5,173.5 316.8,173.5 317.0,173.5 317.2,173.5 317.5,173.5 317.8,173.5 318.0,173.5 318.2,173.5 318.5,173.5 318.8,173.5 319.0,173.5 319.2,173.5 319.5,173.5 319.8,173.5 320.0,173.5 320.2,173.5 320.5,173.5 320.8,173.5 321.0,173.5 321.2,173.5 321.5,173.5 321.8,173.5 322.0,173.5 322.2,173.5 322.5,173.5 322.8,173.5 323.0,173.5 323.2,173.5 323.5,173.5 323.8,173.5 324.0,173.5 324.2,173.5 324.5,173.5 324.8,173.5 325.0,173.5 325.2,173.5 325.5,173.5 325.8,173.5 326.0,173.5 326.2,173.5 326.5,173.5 326.8,173.5 327.0,173.5 327.2,173.5 327.5,173.5 327.8,173.5 328.0,173.5 328.2,173.5 328.5,173.5 328.8,173.5 329.0,173.5 329.2,173.5 329.5,173.5 329.8,173.5 330.0,173.5 330.2,173.5 330.5,173.5 330.8,173.5 331.0,173.5 331.2,173.5 331.5,173.5 331.8,173.5 332.0,173.5 332.2,173.5 332.5,173.5 332.8,173.5 333.0,173.5 333.2,173.5 333.5,173.5 333.8,173.5 334.0,173.5 334.2,173.5 334.5,173.5 334.8,173.5 335.0,173.5 335.2,173.5 335.5,173.5 335.8,173.5 336.0,173.5 336.2,173.5 336.5,173.5 336.8,173.5 337.0,173.5 337.2,173.5 337.5,173.5 337.8,173.5 338.0,173.5 338.2,173.5 338.5,173.5 338.8,173.5 339.0,173.5 339.2,173.5 339.5,173.5 339.8,173.5 340.0,173.5 340.2,173.5 340.5,173.5 340.8,173.5 341.0,173.5 341.2,173.5 341.5,173.5 341.8,173.5 342.0,173.5 342.2,173.5 342.5,173.5 342.8,173.5 343.0,173.5 343.2,173.5 343.5,173.5 343.8,173.5 344.0,173.5 344.2,173.5 344.5,173.5 344.8,173.5 345.0,173.5 345.2,173.5 345.5,173.5 345.8,173.5 346.0,173.5 346.2,173.5 346.5,173.5 346.8,173.5 347.0,173.5 347.2,173.5 347.5,173.5 347.8,173.5 348.0,173.5 348.2,173.5 348.5,173.5 348.8,173.5 349.0,173.5 349.2,173.5 349.5,173.5 349.8,173.5 350.0,173.5 350.2,173.5 350.5,173.5 350.8,173.5 351.0,173.5 351.2,173.5 351.5,173.5 351.8,173.5 352.0,173.5 352.2,173.5 352.5,173.5 352.8,173.5 353.0,173.5 353.2,173.5 353.5,173.5 353.8,173.5 354.0,173.5 354.2,173.5 354.5,173.5 354.8,173.5 355.0,173.5 355.2,173.5 355.5,173.5 355.8,173.5 356.0,173.5 356.2,173.5 356.5,173.5 356.8,173.5 357.0,173.5 357.2,173.5 357.5,173.5 357.8,173.5 358.0,173.5 358.2,173.5 358.5,173.5 358.8,173.5 359.0,173.5 359.2,173.5 359.5,173.5 359.8,173.5 360.0,173.5 360.2,173.5 360.5,173.5 360.8,173.5 361.0,173.5 361.2,173.5 361.5,173.5 361.8,173.5 362.0,173.5 362.2,173.5 362.5,173.5 362.8,173.5 363.0,173.5 363.2,173.5 363.5,173.5 363.8,173.5 364.0,173.5 364.2,173.5 364.5,173.5 364.8,173.5 365.0,173.5 365.2,173.5 365.5,173.5 365.8,173.5 366.0,173.5 366.2,173.5 366.5,173.5 366.8,173.5 367.0,173.5 367.2,173.5 367.5,173.5 367.8,173.5 368.0,173.5 368.2,173.5 368.5,173.5 368.8,173.5 369.0,173.5 369.2,173.5 369.5,173.5 369.8,173.5 370.0,173.5 370.2,173.5 370.5,173.5 370.8,173.5 371.0,173.5 371.2,173.5 371.5,173.5 371.8,173.5 372.0,173.5 372.2,173.5 372.5,173.5 372.8,173.5 373.0,173.5 373.2,173.5 373.5,173.5 373.8,173.5 374.0,173.5 374.2,173.5 374.5,173.5 374.8,173.5 375.0,173.5 375.2,173.5 375.5,173.5 375.8,173.5 376.0,173.5 376.2,173.5 376.5,173.5 376.8,173.5 377.0,173.5 377.2,173.5 377.5,173.5 377.8,173.5 378.0,173.5 378.2,173.5 378.5,173.5 378.8,173.5 379.0,173.5 379.2,173.5 379.5,173.5 379.8,173.5 380.0,173.5 380.2,173.5 380.5,173.5 380.8,173.5 381.0,173.5 381.2,173.5 381.5,173.5 381.8,173.5 382.0,173.5 382.2,173.5 382.5,173.5 382.8,173.5 383.0,173.5 383.2,173.5 383.5,173.5 383.8,173.5 384.0,173.5 384.2,173.5 384.5,173.5 384.8,173.5 385.0,173.5 385.2,173.5 385.5,173.5 385.8,173.5 386.0,173.5 386.2,173.5 386.5,173.5 386.8,173.5 387.0,173.5 387.2,173.5 387.5,173.5 387.8,173.5 388.0,173.5 388.2,173.5 388.5,173.5 388.8,173.5 389.0,173.5 389.2,173.5 389.5,173.5 389.8,173.5 390.0,173.5 390.2,173.5 390.5,173.5 390.8,173.5 391.0,173.5 391.2,173.5 391.5,173.5 391.8,173.5 392.0,173.5 392.2,173.5 392.5,173.5 392.8,173.5 393.0,173.5 393.2,173.5 393.5,173.5 393.8,173.5 394.0,173.5 394.2,173.5 394.5,173.5 394.8,173.5 395.0,173.5 395.2,173.5 395.5,173.5 395.8,173.5 396.0,173.5 396.2,173.5 396.5,173.5 396.8,173.5 397.0,173.5 397.2,173.5 397.5,173.5 397.8,173.5 398.0,173.5 398.2,173.5 398.5,173.5 398.8,173.5 399.0,173.5 399.2,173.5 399.5,173.5 399.8,173.5 400.0,173.5 400.2,173.5 400.5,173.5 400.8,173.5 401.0,173.5 401.2,173.5 401.5,173.5 401.8,173.5 402.0,173.5 402.2,173.5 402.5,173.5 402.8,173.5 403.0,173.5 403.2,173.5 403.5,173.5 403.8,173.5 404.0,173.5 404.2,173.5 404.5,173.5 404.8,173.5 405.0,173.5 405.2,173.5 405.5,173.5 405.8,173.5 406.0,173.5 406.2,173.5 406.5,173.5 406.8,173.5 407.0,173.5 407.2,173.5 407.5,173.5 407.8,173.5 408.0,173.5 408.2,173.5 408.5,173.5 408.8,173.5 409.0,173.5 409.2,173.5 409.5,173.5 409.8,173.5 410.0,173.5 410.2,173.5 410.5,173.5 410.8,173.5 411.0,173.5 411.2,173.5 411.5,173.5 411.8,173.5 412.0,173.5 412.2,173.5 412.5,173.5 412.8,173.5 413.0,173.5 413.2,173.5 413.5,173.5 413.8,173.5 414.0,173.5 414.2,173.5 414.5,173.5 414.8,173.5 415.0,173.5 415.2,173.5 415.5,173.5 415.8,173.5 416.0,173.5 416.2,173.5 416.5,173.5 416.8,173.5 417.0,173.5 417.2,173.5 417.5,173.5 417.8,173.5 418.0,173.5 418.2,173.5 418.5,173.5 418.8,173.5 419.0,173.5 419.2,173.5 419.5,173.5 419.8,173.5 420.0,173.5 420.2,173.5 420.5,173.5 420.8,173.5 421.0,173.5 421.2,173.5 421.5,173.5 421.8,173.5 422.0,173.5 422.2,173.5 422.5,173.5 422.8,173.5 423.0,173.5 423.2,173.5 423.5,173.5 423.8,173.5 424.0,173.5 424.2,173.5 424.5,173.5 424.8,173.5 425.0,173.5 425.2,173.5 425.5,173.5 425.8,173.5 426.0,173.5 426.2,173.5 426.5,173.5 426.8,173.5 427.0,173.5 427.2,173.5 427.5,173.5 427.8,173.5 428.0,173.5 428.2,173.5 428.5,173.5 428.8,173.5 429.0,173.5 429.2,173.5 429.5,173.5 429.8,173.5 430.0,173.5 430.2,173.5 430.5,173.5 430.8,173.5 431.0,173.5 431.2,173.5 431.5,173.5 431.8,173.5 432.0,173.5 432.2,173.5 432.5,173.5 432.8,173.5 433.0,173.5 433.2,173.5 433.5,173.5 433.8,173.5 434.0,173.5 434.2,173.5 434.5,173.5 434.8,173.5 435.0,173.5 435.2,173.5 435.5,173.5 435.8,173.5 436.0,173.5 436.2,173.5 436.5,173.5 436.8,173.5 437.0,173.5 437.2,173.5 437.5,173.5 437.8,173.5 438.0,173.5 438.2,173.5 438.5,173.5 438.8,173.5 439.0,173.5 439.2,173.5 439.5,173.5 439.8,173.5 440.0,173.5 440.2,173.5 440.5,173.5 440.8,173.5 441.0,173.5 441.2,173.5 441.5,173.5 441.8,173.5 442.0,173.5 442.2,173.5 442.5,173.5 442.8,173.5 443.0,173.5 443.2,173.5 443.5,173.5 443.8,173.5 444.0,173.5 444.2,173.5 444.5,173.5 444.8,173.5 445.0,173.5 445.2,173.5 445.5,173.5 445.8,173.5 446.0,173.5 446.2,173.5 446.5,173.5 446.8,173.5 447.0,173.5 447.2,173.5 447.5,173.5 447.8,173.5 448.0,173.5 448.2,173.5 448.5,173.5 448.8,173.5 449.0,173.5 449.2,173.5 449.5,173.5 449.8,173.5 450.0,173.5 450.2,173.5 450.5,173.5 450.8,173.5 451.0,173.5 451.2,173.5 451.5,173.5 451.8,173.5 452.0,173.5 452.2,173.5 452.5,173.5 452.8,173.5 453.0,173.5 453.2,173.5 453.5,173.5 453.8,173.5 454.0,173.5 454.2,173.5 454.5,173.5 454.8,173.5 455.0,173.5 455.2,173.5 455.5,173.5 455.8,173.5 456.0,173.5 456.2,173.5 456.5,173.5 456.8,173.5 457.0,173.5 457.2,173.5 457.5,173.5 457.8,173.5 458.0,173.5 458.2,173.5 458.5,173.5 458.8,173.5 459.0,173.5 459.2,173.5 459.5,173.5 459.8,173.5 460.0,173.5 460.2,173.5 460.5,173.5 460.8,173.5 461.0,173.5 461.2,173.5 461.5,173.5 461.8,173.5 462.0,173.5 462.2,173.5 462.5,173.5 462.8,173.5 463.0,173.5 463.2,173.5 463.5,173.5 463.8,173.5 464.0,173.5 464.2,173.5 464.5,173.5 464.8,173.5 465.0,173.5 465.2,173.5 465.5,173.5 465.8,173.5 466.0,173.5 466.2,173.5 466.5,173.5 466.8,173.5 467.0,173.5 467.2,173.5 467.5,173.5 467.8,173.5 468.0,173.5 468.2,173.5 468.5,173.5 468.8,173.5 469.0,173.5 469.2,173.5 469.5,173.5 469.8,173.5 470.0,173.5 470.2,173.5 470.5,173.5 470.8,173.5 471.0,173.5 471.2,173.5 471.5,173.5 471.8,173.5 472.0,173.5 472.2,173.5 472.5,173.5 472.8,173.5 473.0,173.5 473.2,173.5 473.5,173.5 473.8,173.5 474.0,173.5 474.2,173.5 474.5,173.5 474.8,173.5 475.0,173.5 475.2,173.5 475.5,173.5 475.8,173.5 476.0,173.5 476.2,173.5 476.5,173.5 476.8,173.5 477.0,173.5 477.2,173.5 477.5,173.5 477.8,173.5 478.0,173.5 478.2,173.5 478.5,173.5 478.8,173.5 479.0,173.5 479.2,173.5 479.5,173.5 479.8,173.5 480.0,173.5 480.2,173.5 480.5,173.5 480.8,173.5 481.0,173.5 481.2,173.5 481.5,173.5 481.8,173.5 482.0,173.5 482.2,173.5 482.5,173.5 482.8,173.5 483.0,173.5 483.2,173.5 483.5,173.5 483.8,173.5 484.0,173.5 484.2,173.5 484.5,173.5 484.8,173.5 485.0,173.5 485.2,173.5 485.5,173.5 485.8,173.5 486.0,173.5 486.2,173.5 486.5,173.5 486.8,173.5 487.0,173.5 487.2,173.5 487.5,173.5 487.8,173.5 488.0,173.5 488.2,173.5 488.5,173.5 488.8,173.5 489.0,173.5 489.2,173.5 489.5,173.5 489.8,173.5 490.0,173.5 490.2,173.5 490.5,173.5 490.8,173.5 491.0,173.5 491.2,173.5 491.5,173.5 491.8,173.5 492.0,173.5 492.2,173.9 492.5,174.4 492.8,176.1 493.0,177.0 493.2,174.5 493.5,175.8 493.5,167.0 493.8,191.6 493.8,177.7 494.0,174.2 494.2,174.4 494.1,171.0 494.4,186.6 494.5,176.3 494.8,176.1 495.0,177.7 495.2,177.1 495.5,176.2 495.8,178.0 495.6,169.4 495.9,190.7 496.0,176.2 496.2,176.2 496.2,173.4 496.5,185.7 496.5,176.8 496.8,175.7 497.0,175.6 497.2,176.5 497.5,175.5 497.8,177.8 498.0,176.8 498.2,176.2 498.5,174.6 498.8,175.6 499.0,175.7 499.2,176.3 499.5,176.4 499.8,177.5 500.0,177.9 500.2,176.0 500.5,175.9 500.8,176.6 501.0,178.0 501.2,175.5 501.5,176.2 501.8,177.3 502.0,174.8 502.2,175.4 502.5,177.9 502.8,177.3 503.0,176.1 503.2,174.6 503.5,177.6 503.8,176.8 504.0,177.3 504.2,178.0 504.5,177.6 504.8,175.8 505.0,174.8 505.2,175.3 505.5,176.1 505.3,170.7 505.6,186.8 505.8,176.1 506.0,174.9 505.9,174.7 506.2,181.8 506.2,174.9 506.5,176.6 506.8,176.5 507.0,175.5 507.0,164.3 507.3,186.4 507.2,178.0 507.5,176.6 507.8,174.4 507.6,168.3 507.9,181.4 508.0,175.8 508.2,177.2 508.5,175.4 508.8,176.8 509.0,174.2 509.2,175.4 509.5,177.4 509.8,176.4 510.0,176.7 510.0,165.3 510.3,185.6 510.2,174.9 510.5,176.1 510.8,176.3 510.6,169.3 510.9,180.6 511.0,175.2 511.2,176.7 511.5,176.2 511.8,178.0 512.0,176.4 512.2,175.8 512.5,174.7 512.8,174.8 513.0,177.1 513.2,174.6 513.5,174.6 513.8,174.8 514.0,176.2 514.2,177.3 514.5,176.5 514.8,177.3 515.0,174.4 515.2,174.2 515.5,177.1 515.8,175.4 516.0,176.9 516.2,175.5 516.5,174.8 516.8,175.2 517.0,174.6 517.2,177.6 517.5,176.4 517.8,175.5 518.0,175.9 518.2,175.7 518.5,174.4 518.8,177.6 519.0,176.4 519.2,177.8 519.5,175.9 519.8,176.6 520.0,175.1 520.2,174.4 520.5,177.7 520.8,177.4 521.0,175.4 521.2,177.6 521.5,177.3 521.8,175.4 522.0,176.5 522.2,177.8 522.5,176.1 522.8,177.8 523.0,175.1 523.2,175.7 523.5,176.9 523.8,175.0 524.0,175.4 524.2,177.5 524.5,176.0 524.8,177.2 525.0,175.1 525.2,174.9 525.5,175.6 525.8,174.9 526.0,177.9 526.2,175.3 526.5,176.3 526.8,174.6 527.0,176.2 527.2,175.7 527.5,175.7 527.8,174.4 528.0,174.7 528.2,177.3 528.5,175.5 528.8,175.1 529.0,174.9 529.2,175.3 529.5,175.1 529.8,174.3 530.0,176.7 530.2,175.5 530.5,174.8 530.3,164.4 530.6,188.9 530.8,176.9 531.0,174.6 530.9,168.4 531.2,183.9 531.2,175.2 531.5,177.4 531.8,174.7 532.0,175.9 532.2,177.4 532.5,177.3 532.8,174.8 533.0,175.5 533.2,176.9 533.5,175.6 533.8,177.8 534.0,175.0 534.2,177.8 534.5,176.1 534.8,175.1 535.0,175.9 535.2,174.7 535.5,176.9 535.8,175.2 536.0,177.6 536.2,176.4 536.5,175.6 536.8,175.1 537.0,176.5 537.2,175.0 537.5,177.5 537.8,174.7 538.0,176.1 538.2,176.3 538.5,175.2 538.8,177.1 539.0,175.7 539.2,176.7 539.5,176.4 539.8,175.4 540.0,175.7 540.2,174.5 540.5,174.9 540.8,177.4 541.0,175.4 541.2,176.7 541.5,174.6 541.8,176.3 542.0,175.6 542.2,176.1 542.5,175.3 542.8,174.5 543.0,175.4 543.2,175.1 543.5,174.7 543.8,176.9 544.0,175.3 544.2,175.7 544.5,177.7 544.8,177.1 545.0,177.6 545.2,177.5 545.5,174.7 545.8,175.3 546.0,174.3 546.2,176.8 546.5,176.7 546.8,175.5 547.0,175.8 547.2,176.7 547.5,176.9 547.8,175.1 548.0,177.4 548.2,175.5 548.5,176.6 548.8,174.9 549.0,174.6 549.2,177.7 549.5,177.0 549.8,176.9 550.0,174.4 550.2,174.4 550.5,174.8 550.8,175.0 551.0,175.4 551.2,175.6 551.5,174.3 551.8,175.4 552.0,176.6 552.2,174.9 552.5,177.4 552.8,176.4 553.0,176.9 553.2,175.2 553.5,175.9 553.8,176.8 554.0,175.5 554.2,174.2 554.5,177.4 554.8,177.2 555.0,175.3 555.2,174.4 555.2,170.1 555.5,188.2 555.5,177.4 555.8,176.5 556.0,174.4 555.8,174.1 556.1,183.2 556.2,175.1 556.5,174.6 556.5,170.6 556.8,191.4 556.8,177.2 557.0,175.0 557.2,177.7 557.1,174.6 557.4,186.4 557.5,177.0 557.8,174.5 558.0,176.8 558.2,175.7 558.5,177.0 558.8,177.3 559.0,175.3 559.2,174.3 559.5,177.2 559.8,175.0 560.0,176.6 559.8,164.4 560.1,189.2 560.2,175.7 560.5,175.9 560.4,168.4 560.7,184.2 560.8,176.3 561.0,175.5 561.2,174.8 561.5,173.3 561.8,175.8 562.0,174.7 562.2,175.0 562.5,176.6 562.8,173.6 563.0,176.0 563.2,173.3 563.5,175.8 563.8,176.2 564.0,174.1 564.2,175.2 564.5,176.8 564.8,175.5 565.0,175.2 565.2,174.0 565.5,173.3 565.8,174.5 566.0,174.7 566.2,173.9 566.5,174.3 566.8,173.6 567.0,175.8 567.2,175.6 567.5,174.0 567.8,174.0 568.0,175.1 568.2,174.8 568.5,176.7 568.8,174.4 569.0,174.2 569.2,176.5 569.5,173.6 569.8,175.2 570.0,174.4 570.2,176.2 570.5,175.2 570.8,176.0 571.0,173.7 571.2,175.6 571.5,175.4 571.8,174.9 572.0,176.0 572.2,176.3 572.5,173.5 572.8,174.2 573.0,174.5 573.2,173.9 573.5,173.3 573.8,174.2 574.0,173.8 574.2,175.8 574.5,174.8 574.8,173.5 575.0,174.3 575.2,174.9 575.5,174.5 575.8,173.7 576.0,173.4 576.2,173.1 576.5,176.9 576.8,176.0 577.0,173.4 577.2,175.8 577.5,176.8 577.8,175.2 578.0,173.5 578.2,175.0 578.5,174.8 578.8,173.8 579.0,175.2 579.2,173.1 579.5,176.6 579.8,175.5 580.0,175.5 580.2,176.7 580.5,175.6 580.8,174.1 581.0,174.0 581.2,173.6 581.5,173.2 581.8,176.0 582.0,176.3 582.2,174.2 582.5,173.8 582.8,175.5 583.0,176.3 583.2,176.6 583.5,173.7 583.8,176.1 584.0,176.3 584.2,176.2 584.5,174.9 584.5,166.8 584.8,185.8 584.8,174.6 585.0,177.3 585.2,175.4 585.1,170.8 585.4,180.8 585.5,175.6 585.8,176.3 586.0,175.6 586.0,170.7 586.3,186.8 586.2,177.4 586.5,175.1 586.8,174.4 586.6,174.7 586.9,181.8 587.0,176.4 587.2,176.6 587.5,177.3 587.8,176.9 588.0,177.6 588.2,177.8 588.5,176.1 588.3,168.0 588.6,189.5 588.8,176.1 589.0,174.8 588.9,172.0 589.2,184.5 589.2,175.3 589.5,176.4 589.8,174.5 590.0,176.8 590.2,174.8 590.5,175.9 590.8,177.9 591.0,174.5 591.2,174.4 591.5,175.9 591.8,174.9 592.0,176.9 592.2,174.2 592.5,177.4 592.8,177.5 593.0,177.2 593.2,175.8 593.5,175.3 593.8,176.7 594.0,176.2 594.2,175.8 594.5,175.5 594.8,175.9 595.0,176.7 595.2,177.3 595.5,177.6 595.8,174.8 596.0,175.3 596.2,175.9 596.5,176.3 596.8,175.5 597.0,174.9 597.2,174.5 597.5,175.4 597.8,175.9 598.0,177.9 598.2,177.7 598.5,177.5 598.8,177.9 599.0,177.9 599.2,176.6 599.5,177.3 599.8,174.4 600.0,176.8 600.2,176.5 600.5,175.3 600.8,176.4 601.0,177.8 601.2,176.0 601.5,176.7 601.8,175.3 602.0,175.5 602.2,177.6 602.5,174.3 602.8,174.9 603.0,176.8 603.2,175.9 603.5,174.5 603.8,176.7 604.0,175.6 604.2,176.4 604.5,175.8 604.8,176.2 605.0,176.3 605.2,175.7 605.5,174.6 605.8,174.9 606.0,177.6 606.2,176.3 606.5,174.6 606.8,177.5 607.0,175.2 607.2,174.6 607.5,176.2 607.8,175.2 608.0,176.1 608.2,176.3 608.5,175.1 608.8,176.4 609.0,174.6 609.2,176.2 609.5,176.4 609.8,174.5 610.0,175.8 610.2,174.5 610.5,175.9 610.8,177.5 611.0,176.3 611.2,176.9 611.5,177.1 611.8,174.6 612.0,178.0 612.2,176.9 612.5,174.6 612.8,177.4 613.0,175.7 613.2,174.9 613.5,177.8 613.5,170.7 613.8,189.7 613.8,176.3 614.0,177.1 614.2,174.7 614.1,174.7 614.4,184.7 614.5,177.1 614.8,174.4 615.0,175.1 615.2,175.6 615.5,174.3 615.8,176.5 616.0,175.0 616.2,175.3 616.5,176.9 616.8,175.8 617.0,177.6 617.2,176.6 617.5,177.5 617.8,176.3 618.0,177.7 618.2,177.2 618.5,174.3 618.8,176.2 619.0,174.4 618.8,166.8 619.1,188.1 619.2,176.0 619.5,175.7 619.4,170.8 619.7,183.1 619.8,176.2 620.0,173.6 620.0,165.1 620.3,191.8 620.2,174.5 620.5,175.9 620.8,176.7 620.6,169.1 620.9,186.8 621.0,175.8 621.2,173.3 621.5,175.4 621.8,173.5 622.0,175.2 622.2,176.2 622.5,173.5 622.8,176.6 623.0,175.7 623.2,174.1 623.5,173.8 623.8,174.8 624.0,176.3 624.2,175.3 624.5,173.5 624.8,173.2 625.0,173.5 625.2,176.1 625.5,173.8 625.8,175.2 626.0,174.2 626.2,175.7 626.5,174.5 626.8,173.6 627.0,176.4 627.2,175.1 627.5,175.7 627.8,176.2 628.0,176.7 628.2,173.2 628.5,174.4 628.8,173.7 629.0,175.0 629.2,176.4 629.5,176.1 629.8,173.2 630.0,173.8 630.2,176.2 630.5,175.7 630.8,174.6 631.0,174.9 631.2,173.7 631.5,176.3 631.8,174.6 632.0,176.4 632.2,175.4 632.5,173.4 632.8,174.4 633.0,173.9 633.2,176.5 633.5,175.3 633.8,173.3 634.0,173.7 634.2,174.5 634.5,174.9 634.8,175.3 635.0,174.6 635.2,174.4 635.5,173.1 635.8,175.3 636.0,174.4 636.2,173.2 636.5,174.8 636.8,176.8 637.0,173.3 637.2,173.7 637.5,175.6 637.8,174.1 638.0,174.1 638.2,175.0 638.5,174.1 638.8,175.3 639.0,175.1 639.2,176.7 639.5,176.9 639.8,173.2 640.0,175.2 640.2,176.0 640.5,176.4 640.8,176.0 641.0,175.5 641.2,175.5 641.5,174.5 641.8,174.2 642.0,176.1 642.2,176.4 642.5,176.7 642.8,175.7 643.0,174.3 643.2,176.0 643.5,175.9 643.8,175.0 644.0,175.5 644.2,174.4 644.5,175.2 644.8,174.6 645.0,173.3 645.2,174.7 645.5,174.9 645.5,170.9 645.8,186.6 645.8,177.7 646.0,176.0 646.2,175.6 646.1,174.9 646.4,181.6 646.5,175.1 646.8,175.1 647.0,175.5 647.0,164.3 647.3,186.8 647.2,174.7 647.5,174.2 647.8,177.5 647.6,168.3 647.9,181.8 648.0,175.9 648.2,175.9 648.5,176.4 648.8,175.3 649.0,174.8 649.2,174.5 649.5,175.3 649.8,175.4 650.0,177.0 650.2,176.3 650.5,177.8 650.8,175.5 651.0,177.7 651.2,176.4 651.5,174.5 651.5,166.5 651.8,191.3 651.8,174.9 652.0,176.4 652.2,178.0 652.1,170.5 652.4,186.3 652.5,175.6 652.8,177.1 653.0,175.8 653.2,177.5 653.5,174.5 653.8,176.0 654.0,177.6 654.2,175.2 654.5,175.2 654.8,174.3 655.0,174.8 655.2,175.2 655.5,176.9 655.8,175.0 656.0,175.7 656.2,175.0 656.5,176.5 656.8,177.5 657.0,176.7 657.2,174.9 657.5,177.0 657.8,177.9 658.0,176.5 658.2,174.5 658.5,177.3 658.8,177.5 659.0,175.5 659.2,174.7 659.5,174.9 659.8,176.2 660.0,177.5 660.2,176.6 660.5,177.7 660.8,175.0 661.0,175.4 661.2,177.0 661.5,176.7 661.8,175.7 662.0,176.8 662.2,175.5 662.5,174.4 662.8,175.8 663.0,174.4 663.2,176.6 663.5,175.5 663.8,176.1 664.0,176.5 664.2,175.2 664.5,176.0 664.8,174.3 665.0,177.7 665.2,176.3 665.5,178.0 665.8,174.4 666.0,176.5 666.2,177.0 666.5,175.5 666.8,174.6 667.0,174.8 667.2,174.7 667.5,177.1 667.8,174.5 668.0,177.3 668.2,175.8 668.5,176.2 668.8,176.4 669.0,176.3 669.2,176.7 669.5,176.5 669.8,175.5 670.0,177.0 670.2,175.2 670.5,176.9 670.8,177.1 671.0,177.1 671.2,175.4 671.5,177.1 671.8,177.9 672.0,175.9 672.2,175.3 672.5,176.2 672.8,177.8 673.0,174.7 673.2,174.2 673.5,176.0 673.8,176.7 674.0,177.1 674.2,175.6 674.5,178.0 674.8,175.1 675.0,177.1 675.2,174.5 675.5,174.3 675.8,174.7 676.0,174.4 676.2,176.1 676.5,176.3 676.8,174.9 676.6,170.3 676.9,190.9 677.0,177.8 677.2,175.6 677.2,174.3 677.5,185.9 677.5,174.8 677.8,174.9 678.0,177.0 678.0,164.3 678.3,190.5 678.2,177.7 678.5,174.8 678.8,174.3 678.6,168.3 678.9,185.5 679.0,177.2 679.2,175.1 679.5,177.9 679.8,176.1 680.0,176.6 680.2,175.2 680.5,176.7 680.8,175.1 681.0,174.3 680.8,169.0 681.1,189.5 681.2,176.5 681.5,173.5 681.4,173.0 681.7,184.5 681.8,175.9 682.0,173.3 682.2,175.6 682.5,174.6 682.8,176.4 683.0,173.3 683.2,175.2 683.5,174.7 683.8,176.6 684.0,176.7 684.2,175.5 684.5,174.0 684.8,174.1 685.0,174.1 685.2,174.7 685.5,174.0 685.8,173.9 686.0,176.0 686.2,175.5 686.5,174.2 686.8,176.9 687.0,173.9 687.2,175.3 687.5,173.7 687.8,176.4 688.0,176.4 688.2,174.1 688.5,176.0 688.8,176.2 689.0,174.2 689.2,174.4 689.5,174.9 689.8,176.5 690.0,173.7 690.2,175.7 690.5,175.4 690.8,174.8 691.0,175.3 691.2,176.5 691.5,173.9 691.8,176.5 692.0,174.5 692.2,176.1 692.5,176.4 692.8,173.8 693.0,176.4 693.2,176.9 693.5,174.2 693.8,173.2 694.0,173.5 694.2,176.8 694.5,173.1 694.8,176.6 695.0,173.7 695.2,175.9 695.5,173.5 695.8,173.7 696.0,175.7 696.2,173.4 696.5,174.4 696.8,176.6 697.0,175.8 697.2,176.5 697.5,176.8 697.8,173.2 698.0,174.0 698.2,176.1 698.5,175.7 698.8,173.2 699.0,175.0 699.2,174.0 699.5,174.7 699.8,173.5 700.0,172.8 700.2,177.3 700.5,174.2 700.8,176.7 701.0,173.3 701.2,174.9 701.5,173.3 701.8,174.7 702.0,173.5 702.2,175.9 702.5,173.4 702.8,176.1 703.0,175.0 703.2,173.2 703.5,174.3 703.8,175.0 704.0,176.9 704.2,174.3 704.5,173.7 704.8,177.2 705.0,176.8 705.0,170.9 705.3,185.4 705.2,176.3 705.5,174.5 705.8,174.3 705.6,174.9 705.9,180.4 706.0,174.9 706.2,174.0 706.5,173.9 706.5,165.0 706.8,190.3 706.8,176.0 707.0,175.6 707.2,176.3 707.1,169.0 707.4,185.3 707.5,175.4 707.8,173.7 708.0,176.9 708.2,176.7 708.5,176.2 708.8,176.2 708.7,170.6 709.0,189.7 709.0,176.9 709.2,178.2 709.5,177.7 709.3,174.6 709.6,184.7 709.8,177.0 710.0,175.5 710.2,175.2 710.5,175.6 710.8,178.2 711.0,175.5 711.2,175.5 711.5,175.6 711.8,174.4 712.0,178.3 712.2,173.7 712.5,176.5 712.8,178.0 713.0,174.9 713.2,176.5 713.5,175.4 713.8,174.8 714.0,174.6 714.2,174.2 714.5,177.6 714.8,177.3 715.0,177.9 715.2,173.9 715.5,176.9 715.8,175.2 716.0,176.7 716.2,176.2 716.5,175.2 716.8,178.2 717.0,173.7 717.2,177.1 717.5,177.6 717.8,176.0 718.0,176.4 718.2,178.3 718.5,174.8 718.8,176.6 719.0,177.1 719.2,175.4 719.5,177.0 719.8,175.5 720.0,176.1 720.2,176.5 720.5,176.8 720.8,175.2 721.0,176.6 721.2,176.2 721.5,174.7 721.8,176.5 722.0,174.9 722.2,177.9 722.5,175.9 722.8,177.0 723.0,176.1 723.2,175.9 723.5,174.7 723.8,174.4 724.0,178.0 724.2,176.1 724.5,176.1 724.8,176.1 725.0,177.4 725.2,174.8 725.5,174.5 725.8,177.5 726.0,175.8 726.2,176.6 726.5,177.5 726.8,177.8 727.0,177.7 727.2,173.9 727.5,175.5 727.8,177.5 728.0,177.5 728.2,174.3 728.5,174.4 728.8,174.9 729.0,174.2 729.2,175.3 729.5,177.4 729.8,176.1 730.0,175.8 730.2,174.1 730.5,175.5 730.8,178.3 731.0,176.9 731.2,175.8 731.5,175.9 731.8,177.4 732.0,177.2 732.2,174.4 732.5,176.8 732.8,175.4 733.0,176.1 733.2,174.8 733.5,175.4 733.4,166.1 733.7,189.1 733.8,175.3 734.0,175.5 734.0,170.1 734.3,184.1 734.2,173.8 734.5,174.6 734.8,176.3 735.0,174.0 735.0,169.3 735.3,185.7 735.2,174.5 735.5,177.0 735.8,175.0 735.6,173.3 735.9,180.7 736.0,175.2 736.2,174.8 736.5,177.5 736.8,174.1 737.0,176.6 737.2,177.7 737.5,174.6 737.8,175.6 738.0,177.3 738.2,176.5 738.5,175.4 738.8,173.9 739.0,175.7 739.2,175.4 739.5,177.0 739.8,175.1 740.0,175.6 740.2,176.7 740.5,177.4 740.8,175.3 741.0,175.5 741.2,175.6 741.5,176.5 741.5,166.3 741.8,186.8 741.8,172.3 742.0,175.2 742.2,174.0 742.1,170.3 742.4,181.8 742.5,172.4 742.8,173.7 743.0,172.2 743.2,171.0 743.5,174.1 743.8,172.4 744.0,173.1 744.2,172.9 744.5,174.8 744.8,174.1 745.0,170.7 745.2,173.3 745.5,172.7 745.8,172.7 746.0,174.5 746.2,172.5 746.5,172.8 746.8,174.7 747.0,172.6 747.2,172.8 747.5,172.9 747.8,174.3 748.0,173.6 748.2,173.9 748.5,172.4 748.8,170.7 749.0,173.6 749.2,173.0 749.5,174.0 749.8,174.0 750.0,171.0 750.2,171.5 750.5,170.8 750.8,174.2 751.0,170.9 751.2,170.8 751.5,173.9 751.8,173.0 752.0,170.7 752.2,173.5 752.5,173.7 752.8,172.6 753.0,170.6 753.2,173.6 753.5,172.3 753.8,173.1 754.0,175.0 754.2,174.1 754.5,174.4 754.8,171.0 755.0,171.9 755.2,172.7 755.5,170.4 755.8,174.9 756.0,171.6 756.2,171.5 756.5,171.7 756.8,171.5 757.0,174.2 757.2,172.8 757.5,172.6 757.8,172.2 758.0,170.5 758.2,171.6 758.5,174.2 758.8,173.9 759.0,174.2 759.2,171.4 759.5,171.1 759.8,170.4 760.0,172.7 760.0,164.9 760.3,188.4 760.2,172.8 760.5,174.1 760.8,175.1 760.6,168.9 760.9,183.4 761.0,176.4 761.2,175.4 761.5,177.4 761.5,165.2 761.8,186.7 761.8,174.6 762.0,177.9 762.2,176.3 762.1,169.2 762.4,181.7 762.5,173.9 762.8,175.1 763.0,176.2 763.2,175.6 763.5,176.3 763.8,175.2 764.0,175.0 764.2,177.4 764.5,175.0 764.5,165.0 764.8,189.7 764.8,177.0 765.0,177.4 765.2,176.4 765.1,169.0 765.4,184.7 765.5,175.8 765.8,178.0 766.0,175.7 766.2,177.7 766.5,174.0 766.8,175.7 767.0,176.6 767.2,173.9 767.5,177.7 767.8,174.0 768.0,176.4 768.2,174.5 768.5,177.9 768.8,176.3 769.0,177.4 769.2,176.0 769.5,176.8 769.8,176.8 770.0,175.1 770.2,174.7 770.5,177.6 770.8,174.4 771.0,177.9 771.2,174.7 771.5,174.2 771.8,174.1 772.0,177.3 772.2,178.1 772.5,175.6 772.8,176.7 773.0,174.9 773.2,177.9 773.5,176.9 773.8,174.4 774.0,174.0 774.2,176.9 774.5,173.9 774.8,177.5 775.0,175.1 775.2,174.8 775.5,176.4 775.8,175.2 776.0,176.3 776.2,174.4 776.5,177.9 776.8,175.2 777.0,177.6 777.2,174.4 777.5,177.4 777.8,178.2 778.0,175.5 778.2,173.9 778.5,175.4 778.8,176.6 779.0,174.7 779.2,176.2 779.5,174.1 779.8,175.8 780.0,177.0 780.2,175.7 780.5,176.8 780.8,174.2 780.6,164.1 780.9,190.0 781.0,177.5 781.2,173.5 781.2,168.1 781.5,185.0 781.5,176.4 781.8,176.0 782.0,175.0 782.0,165.4 782.3,185.3 782.2,173.1 782.5,172.0 782.8,172.3 782.6,169.4 782.9,180.3 783.0,174.1 783.2,172.9 783.5,174.9 783.8,171.1 784.0,172.9 784.2,174.6 784.5,173.4 784.8,173.1 785.0,171.0 785.2,171.2 785.5,171.8 785.8,174.7 785.6,170.5 785.9,186.5 786.0,174.5 786.2,171.6 786.2,174.5 786.5,181.5 786.5,174.8 786.8,170.7 787.0,173.3 787.2,175.0 787.5,172.1 787.8,174.9 788.0,173.5 788.2,170.7 788.5,172.0 788.8,172.6 789.0,171.6 789.2,173.9 789.5,171.3 789.8,174.1 790.0,171.8 790.2,170.8 790.5,173.0 790.8,170.9 791.0,173.0 791.2,174.0 791.5,173.1 791.8,172.5 792.0,170.5 792.2,172.7 792.5,170.8 792.8,173.3 793.0,171.0 793.2,173.0 793.5,172.0 793.8,172.1 794.0,173.4 794.2,171.1 794.5,171.1 794.8,174.6 795.0,171.8 795.2,174.2 795.5,174.3 795.8,172.5 796.0,170.9 796.2,170.7 796.5,174.3 796.8,170.8 797.0,172.5 797.2,172.7 797.5,170.8 797.8,172.4 798.0,171.0 798.2,173.7 798.5,174.5 798.8,174.9 798.6,170.5 798.9,191.1 799.0,175.1 799.2,176.1 799.2,174.5 799.5,186.1 799.5,175.1 799.8,174.8 800.0,175.3 800.0,170.2 800.3,186.0 800.2,178.2 800.5,176.5 800.8,178.3 800.6,174.2 800.9,181.0 801.0,174.3 801.2,178.5 801.5,176.4 801.8,177.8 802.0,176.8 802.2,177.4 802.5,175.3 802.5,167.1 802.8,185.7 802.8,177.7 803.0,174.9 803.2,175.4 803.1,171.1 803.4,180.7 803.5,174.3 803.8,176.0 804.0,176.6 804.2,175.5 804.5,178.3 804.8,174.6 805.0,176.9 805.2,175.3 805.5,176.9 805.8,177.8 806.0,177.5 806.2,174.5 806.5,175.3 806.8,177.0 807.0,178.7 807.2,174.4 807.5,177.0 807.8,177.4 808.0,177.9 808.2,175.8 808.5,177.9 808.8,176.3 809.0,178.4 809.2,174.2 809.5,178.5 809.8,176.1 810.0,176.1 810.2,174.6 810.5,175.3 810.8,177.6 811.0,177.3 811.2,174.9 811.5,175.8 811.8,174.8 812.0,175.1 812.2,175.2 812.5,175.7 812.8,178.7 813.0,178.8 813.2,177.8 813.5,176.4 813.8,176.5 814.0,177.8 814.2,178.4 814.5,177.7 814.8,177.1 815.0,175.1 815.2,177.1 815.5,178.1 815.5,170.5 815.8,190.9 815.8,177.8 816.0,174.6 816.2,177.5 816.1,174.5 816.4,185.9 816.5,175.8 816.8,174.9 817.0,178.6 817.0,168.4 817.3,188.2 817.2,177.3 817.5,177.6 817.8,174.8 817.6,172.4 817.9,183.2 818.0,178.0 818.2,178.5 818.5,178.4 818.8,177.6 819.0,178.0 819.2,177.0 819.5,175.2 819.8,173.6 819.7,166.4 820.0,190.8 820.0,174.5 820.2,174.3 820.5,174.7 820.3,170.4 820.6,185.8 820.8,172.1 821.0,175.1 821.2,173.1 821.5,175.1 821.8,171.2 822.0,175.2 822.2,174.3 822.5,171.9 822.8,174.6 823.0,171.8 823.2,171.6 823.5,172.8 823.8,171.8 824.0,173.0 824.2,174.9 824.5,173.9 824.8,174.0 825.0,172.5 825.2,174.3 825.5,174.4 825.8,173.8 826.0,175.0 826.2,174.5 826.5,172.6 826.8,171.1 827.0,173.7 827.2,174.5 827.5,172.3 827.8,173.4 828.0,174.5 828.2,174.3 828.5,170.7 828.8,172.9 829.0,170.8 829.2,171.2 829.5,174.4 829.8,172.6 830.0,173.5 830.2,172.8 830.5,172.2 830.8,171.7 831.0,172.3 831.2,174.6 831.5,173.5 831.8,172.0 832.0,171.1 832.2,172.8 832.5,175.7 832.8,175.4 833.0,177.2 832.8,167.3 833.1,189.4 833.2,177.9 833.5,174.8 833.4,171.3 833.7,184.4 833.8,177.3 834.0,174.4 834.2,178.0 834.5,175.0 834.5,165.0 834.8,186.6 834.8,175.4 835.0,178.6 835.2,175.9 835.1,169.0 835.4,181.6 835.5,175.2 835.8,178.3 836.0,177.0 836.2,178.3 836.5,176.0 836.8,176.5 836.6,164.4 836.9,190.0 837.0,178.6 837.2,176.5 837.2,168.4 837.5,185.0 837.5,178.7 837.8,175.1 838.0,178.0 838.2,174.9 838.5,176.6 838.8,174.2 839.0,175.0 839.2,178.5 839.5,176.3 839.8,177.9 840.0,175.4 840.2,175.8 840.5,174.7 840.8,176.7 841.0,178.2 841.2,176.6 841.5,175.9 841.8,178.5 842.0,178.3 842.2,177.3 842.5,174.5 842.8,177.1 843.0,176.2 843.2,178.6 843.5,175.9 843.8,177.2 844.0,177.1 844.2,175.9 844.5,176.6 844.8,177.3 845.0,178.4 845.2,176.5 845.5,175.9 845.8,178.7 845.7,167.9 846.0,186.0 846.0,174.5 846.2,178.0 846.5,177.3 846.3,171.9 846.6,181.0 846.8,176.8 847.0,176.3 847.2,177.7 847.5,178.3 847.5,170.1 847.8,186.9 847.8,177.6 848.0,177.6 848.2,174.4 848.1,174.1 848.4,181.9 848.5,175.7 848.8,174.8 849.0,178.6 849.2,178.3 849.5,174.9 849.8,176.9 850.0,176.9 850.2,173.4 850.5,174.0 850.8,174.6 850.7,166.9 851.0,186.1 851.0,173.2 851.2,171.5 851.5,173.7 851.3,170.9 851.6,181.1 851.8,171.5 852.0,172.7 852.0,165.9 852.3,190.9 852.2,172.1 852.5,174.7 852.8,173.2 852.6,169.9 852.9,185.9 853.0,173.9 853.2,173.3 853.5,172.0 853.8,174.6 854.0,173.5 854.2,173.4 854.5,171.5 854.8,170.9 855.0,172.8 855.2,174.0 855.5,173.9 855.8,171.8 856.0,170.8 856.2,172.6 856.5,174.2 856.8,170.9 857.0,173.6 857.2,171.0 857.5,171.6 857.8,170.4 858.0,171.6 858.2,172.0 858.5,174.6 858.8,174.6 859.0,171.1 859.2,171.6 859.5,174.5 859.8,171.1 860.0,171.7 860.2,172.2 860.5,170.7 860.8,171.4 861.0,172.0 861.2,172.0 861.5,174.6 861.8,171.4 862.0,171.1 862.2,174.8 862.5,173.0 862.5,166.3 862.8,186.2 862.8,175.2 863.0,174.6 863.2,175.7 863.1,170.3 863.4,181.2 863.5,173.9 863.8,173.5 864.0,176.7 864.2,175.3 864.5,175.6 864.8,176.1 865.0,176.4 865.2,174.2 865.5,174.5 865.8,177.0 866.0,175.1 866.2,174.0 866.5,175.5 866.8,173.7 867.0,176.0 867.2,172.6 867.5,176.1 867.8,174.9 868.0,173.8 868.2,176.5 868.5,173.3 868.8,173.1 869.0,172.3 869.2,174.4 869.5,175.3 869.8,174.9 870.0,173.6 870.2,175.3 870.5,172.1 870.8,172.9 871.0,174.4 871.2,175.8 871.5,174.2 871.8,174.4 872.0,174.7 872.2,172.8 872.5,175.3 872.8,174.3 873.0,172.4 873.2,172.5 873.5,174.4 873.8,172.2 874.0,171.4 874.2,174.4 874.5,172.8 874.8,172.7 875.0,173.3 875.2,174.3 875.5,170.7 875.8,171.5 876.0,170.2 876.2,171.7 876.5,172.1 876.8,173.6 877.0,172.7 877.2,172.2 877.5,171.3 877.8,172.0 878.0,170.6 878.2,173.1 878.5,172.8 878.8,172.9 879.0,169.7 879.2,172.0 879.5,172.3 879.8,171.1 880.0,172.8 880.2,172.8 880.5,172.1 880.8,172.5 881.0,171.7 881.2,172.8 881.5,169.4 881.8,172.0 882.0,172.0 882.2,171.6 882.5,170.1 882.8,169.1 883.0,171.6 883.2,172.7 883.5,170.1 883.8,169.9 884.0,169.9 884.2,169.3 884.5,172.0 884.8,173.4 885.0,172.6 885.2,170.6 885.5,172.2 885.8,169.3 886.0,172.9 886.2,170.5 886.5,169.0 886.8,171.9 887.0,169.7 887.2,170.3 887.5,169.3 887.8,171.1 888.0,171.7 888.2,172.8 888.5,169.3 888.8,172.9 889.0,169.7 889.2,170.2 889.5,172.1 889.8,170.8 890.0,170.7 890.2,171.8 890.5,170.2 890.8,172.9 891.0,170.2 891.2,173.2 891.5,173.0 891.8,171.8 892.0,169.5 892.2,172.9 892.5,169.5 892.8,171.7 893.0,171.4 893.2,169.7 893.5,172.3 893.8,172.8 894.0,172.2 894.2,171.3 894.5,171.9 894.8,172.2 895.0,170.6 895.2,173.6 895.5,174.2 895.8,173.3 896.0,174.1 896.2,171.2 896.5,174.2 896.8,170.0 897.0,171.6 897.2,166.2 897.5,171.4 897.3,160.0 897.6,190.0 897.8,175.1 898.0,175.6 898.2,171.6 898.5,169.9 898.8,167.5 899.0,171.0 899.2,169.2 899.5,167.8 899.5,163.0 899.8,196.0 899.8,176.6 900.0,173.1 900.2,171.9 900.5,168.2 900.8,176.3 901.0,168.3 901.2,169.5 901.5,174.2 901.5,160.0 901.8,192.0 901.8,176.6 902.0,181.0 902.2,177.5 902.5,180.7 902.8,180.4 903.0,177.3 903.0,165.0 903.3,190.0 903.2,177.3 903.5,166.9 903.8,169.2 904.0,166.2 904.2,179.9 904.5,177.8 904.8,176.5 905.0,174.5 905.2,174.5 905.5,174.5 905.8,174.5 906.0,174.5 906.2,174.5 906.5,174.5 906.8,174.5 907.0,174.5 907.2,174.5 907.5,174.5 907.8,174.5 908.0,174.5 908.2,174.5 908.5,174.5 908.8,174.5 909.0,174.5 909.2,174.5 909.5,174.5 909.8,174.5 910.0,174.5 910.2,174.5 910.5,174.5 910.8,174.5 911.0,174.5 911.2,174.5 911.5,174.5 911.8,174.5 912.0,174.5 912.2,174.5 912.5,174.5 912.8,174.5 913.0,174.5 913.2,174.5 913.5,174.5 913.8,174.5 914.0,174.5 914.2,174.5 914.5,174.5 914.8,174.5 915.0,174.5 915.2,174.5 915.5,174.5 915.8,174.5 916.0,174.5 916.2,174.5 916.5,174.5 916.8,174.5 917.0,174.5 917.2,174.5 917.5,174.5 917.8,174.5 918.0,174.5 918.2,174.5 918.5,174.5 918.8,174.5 919.0,174.5 919.2,174.5 919.5,174.5 919.8,174.5 920.0,174.5 920.2,174.5 920.5,174.5 920.8,174.5 921.0,174.5 921.2,174.5 921.5,174.5 921.8,174.5 922.0,174.5 922.2,174.5 922.5,174.5 922.8,174.5 923.0,174.5 923.2,174.5 923.5,174.5 923.8,174.5 924.0,174.5 924.2,174.5 924.5,174.5 924.8,174.5 925.0,174.5 925.2,174.5 925.5,174.5 925.8,174.5 926.0,174.5 926.2,174.5 926.5,174.5 926.8,174.5 927.0,174.5 927.2,174.5 927.5,174.5" stroke="#008000" stroke-width="1"/>
<polyline points="108.0,151.5 128.0,151.5 128.5,152.5 170.0,152.5 171.0,151.5 228.5,151.5 229.5,139.4 230.4,104.6 232.0,104.0 232.5,89.5 233.0,89.5 233.0,268.0 233.6,89.5 234.2,268.0 234.6,262.0 236.0,255.0 237.0,254.2 238.0,253.9 239.0,254.0 240.0,253.8 241.0,254.4 242.0,254.8 243.0,254.0 244.0,253.7 245.0,253.8 246.0,254.0 247.0,254.7 248.0,254.6 249.0,254.1 250.0,253.7 251.0,253.7 252.0,253.8 253.0,254.5 254.0,254.2 255.0,254.8 256.0,254.7 257.0,254.6 258.0,254.2 259.0,254.6 260.0,253.8 261.0,253.7 262.0,254.3 263.0,254.2 264.0,253.9 265.0,253.9 265.7,254.2 266.0,268.0 266.0,91.0 267.0,100.5 268.0,100.5 268.5,129.1 290.2,129.1 290.8,105.0 291.3,89.0 291.6,268.0 292.3,250.5 292.6,198.0 294.0,190.0 295.5,185.0 296.5,170.0 297.4,148.9 492.4,148.4 493.0,127.0 494.5,109.0 495.3,89.0 495.6,268.0 496.0,253.5 497.0,252.9 498.0,254.0 499.0,253.8 500.0,254.0 501.0,254.1 502.0,253.4 503.0,253.8 504.0,253.4 505.2,253.5 505.3,268.0 505.4,91.0 506.0,128.5 509.0,128.5 509.5,118.0 510.7,101.4 530.3,101.4 530.3,90.0 530.4,268.0 531.0,250.5 532.0,250.9 533.0,250.9 534.0,250.1 535.0,249.9 536.0,250.2 537.0,250.6 538.0,250.4 539.0,249.9 540.0,250.9 541.0,250.8 542.0,250.5 543.0,250.0 544.0,251.0 545.0,250.5 546.0,250.0 547.0,250.3 548.0,250.6 549.0,251.0 550.0,250.5 551.0,250.7 552.0,250.1 553.0,250.2 554.0,251.0 555.0,250.5 555.1,268.0 555.2,91.0 556.0,114.4 559.5,114.4 559.8,158.7 560.5,159.5 561.5,159.4 562.5,159.0 563.5,159.6 564.5,159.1 565.5,159.1 566.5,159.4 567.5,159.6 568.5,159.7 569.5,159.7 570.5,159.4 571.5,159.0 572.5,159.8 573.5,159.0 574.5,159.5 575.5,159.4 576.5,159.7 577.5,159.8 578.5,159.2 579.5,159.7 580.5,159.7 581.5,159.5 582.5,159.1 583.5,160.0 584.2,159.5 584.5,114.4 588.0,114.4 588.2,91.0 588.3,268.0 589.0,250.5 590.0,250.6 591.0,250.0 592.0,250.2 593.0,251.1 594.0,250.2 595.0,250.4 596.0,250.8 597.0,250.9 598.0,250.7 599.0,250.8 600.0,249.9 601.0,250.0 602.0,251.1 603.0,250.9 604.0,249.9 605.0,250.0 606.0,250.2 607.0,251.0 608.0,250.2 609.0,250.7 610.0,251.0 611.0,250.7 612.0,251.0 612.8,250.5 613.3,268.0 613.5,91.0 614.0,91.5 618.5,91.5 618.8,157.0 619.5,159.7 620.5,159.4 621.5,159.3 622.5,159.1 623.5,160.0 624.5,159.2 625.5,160.3 626.5,160.0 627.5,159.3 628.5,160.1 629.5,159.3 630.5,159.7 631.5,159.2 632.5,160.0 633.5,160.2 634.5,160.2 635.5,159.1 636.5,160.1 637.5,159.8 638.5,160.1 639.5,159.7 640.5,159.8 641.5,159.8 642.5,160.1 643.5,159.2 644.5,159.2 645.1,159.7 645.8,120.0 646.5,92.3 651.5,92.3 651.5,268.0 652.0,250.5 653.0,250.6 654.0,250.2 655.0,250.4 656.0,249.9 657.0,250.8 658.0,249.9 659.0,250.9 660.0,250.9 661.0,250.4 662.0,250.0 663.0,250.7 664.0,250.1 665.0,250.4 666.0,250.0 667.0,251.1 668.0,250.6 669.0,250.3 670.0,250.0 671.0,250.8 672.0,250.9 673.0,250.9 674.0,250.0 675.0,250.3 675.9,250.5 676.5,265.0 676.6,91.0 677.0,114.4 679.5,114.4 680.2,135.0 680.8,159.0 681.5,159.7 682.5,159.5 683.5,160.0 684.5,159.3 685.5,159.8 686.5,160.3 687.5,160.0 688.5,159.1 689.5,159.2 690.5,159.2 691.5,159.9 692.5,159.8 693.5,159.7 694.5,159.6 695.5,159.6 696.5,159.8 697.5,159.9 698.5,160.2 699.5,160.0 700.5,160.1 701.5,160.2 702.5,160.1 703.5,160.0 704.1,159.7 705.0,133.8 705.8,114.7 708.5,114.7 708.6,91.0 708.7,266.0 709.5,250.5 710.5,249.9 711.5,250.7 712.5,250.9 713.5,250.4 714.5,251.0 715.5,250.1 716.5,251.0 717.5,250.4 718.5,250.7 719.5,250.2 720.5,250.3 721.5,250.3 722.5,250.3 723.5,250.0 724.5,250.4 725.5,251.1 726.5,250.7 727.5,251.0 728.5,250.8 729.5,250.9 730.5,251.1 731.5,250.8 732.4,250.5 733.3,266.0 733.4,91.0 734.0,146.2 741.0,146.2 741.5,159.5 742.5,159.2 743.5,159.2 744.5,159.4 745.5,158.9 746.5,159.2 747.5,160.0 748.5,160.0 749.5,159.3 750.5,159.8 751.5,159.8 752.5,160.0 753.5,159.9 754.5,159.5 755.5,159.0 756.5,159.9 757.5,159.3 758.5,159.7 759.4,159.5 760.6,114.7 763.5,114.7 764.4,91.0 764.5,266.0 765.0,250.5 766.0,250.3 767.0,250.5 768.0,251.1 769.0,250.1 770.0,250.5 771.0,250.7 772.0,250.5 773.0,251.0 774.0,250.4 775.0,251.0 776.0,250.7 777.0,251.1 778.0,250.0 779.0,250.2 780.2,250.5 780.5,268.0 780.6,94.0 781.0,136.8 785.0,136.8 785.6,159.5 786.6,159.2 787.6,160.0 788.6,158.9 789.6,159.2 790.6,159.8 791.6,160.1 792.6,159.1 793.6,159.4 794.6,159.7 795.6,159.7 796.6,159.8 797.6,159.5 798.6,115.5 801.5,115.5 802.3,93.0 802.5,268.0 803.0,250.5 804.0,250.8 805.0,250.2 806.0,250.2 807.0,249.9 808.0,250.7 809.0,250.2 810.0,250.2 811.0,251.1 812.0,250.7 813.0,250.6 814.5,250.5 815.0,265.0 815.5,90.0 816.0,114.4 818.7,114.4 819.7,159.5 820.7,159.7 821.7,159.6 822.7,159.7 823.7,159.3 824.7,159.0 825.7,159.0 826.7,158.9 827.7,159.3 828.7,159.1 829.7,159.0 830.7,159.5 832.0,159.5 832.8,115.5 836.0,115.5 836.5,92.0 836.6,266.0 837.0,250.5 838.0,251.1 839.0,250.7 840.0,250.2 841.0,250.8 842.0,250.1 843.0,250.0 844.0,250.3 845.5,250.5 845.7,90.0 846.5,114.4 849.5,114.4 850.7,158.7 851.7,158.6 852.7,158.9 853.7,158.6 854.7,159.0 855.7,158.2 856.7,159.2 857.7,158.5 858.7,159.1 859.7,158.1 860.7,159.1 861.8,158.7 863.5,200.2 895.9,200.2 896.2,211.8 897.0,220.4 897.5,211.0 900.0,206.0 901.7,202.7 902.5,153.7 904.0,151.2 927.7,151.2" stroke="#ff0000" stroke-width="1"/>
<polyline points="108.0,435.0 229.5,435.0 230.5,440.0 231.0,452.4 231.5,438.0 232.5,445.0 233.5,436.0 235.0,441.0 237.0,435.0 267.8,435.0 268.4,457.5 268.9,435.0 289.0,435.0 290.5,450.0 291.0,473.0 291.8,440.0 293.0,420.0 293.5,399.4 294.5,399.4 295.0,412.0 296.0,414.0 296.5,425.0 297.5,428.0 298.0,433.0 299.0,435.0 492.0,435.0 493.5,446.0 494.0,454.5 496.5,454.5 497.0,440.0 498.0,446.0 499.0,440.0 500.0,435.0 505.0,435.0 506.0,443.7 508.0,443.7 509.0,438.0 510.4,460.3 510.8,459.8 511.2,460.9 511.6,460.8 512.0,460.6 512.4,459.9 512.8,459.4 513.2,459.7 513.6,461.0 514.0,459.7 514.4,460.6 514.8,460.5 515.2,460.6 515.6,459.7 516.0,459.7 516.4,459.6 516.8,461.2 517.2,460.1 517.6,460.6 518.0,460.4 518.4,459.8 518.8,459.5 519.2,459.4 519.6,460.9 520.0,459.6 520.4,461.1 520.8,460.1 521.2,460.7 521.6,459.6 522.0,460.8 522.4,459.9 522.8,460.1 523.2,460.3 523.6,459.6 524.0,459.8 524.4,460.8 524.8,459.9 525.2,460.1 525.6,460.8 526.0,459.8 526.4,459.7 526.8,459.8 527.2,460.1 527.6,460.1 528.0,460.6 528.4,460.2 528.8,461.0 529.2,459.5 529.8,460.3 531.0,456.2 531.4,456.5 531.8,456.8 532.2,455.7 532.6,455.4 533.0,456.1 533.4,455.5 533.8,456.1 534.2,456.6 534.6,455.5 535.0,455.5 535.4,456.2 535.8,455.6 536.2,455.7 536.6,456.1 537.0,455.5 537.4,455.4 537.8,456.0 538.2,456.1 538.6,457.0 539.0,456.3 539.4,455.4 539.8,455.7 540.2,456.6 540.6,456.3 541.0,456.9 541.4,457.0 541.8,456.8 542.2,455.5 542.6,457.0 543.0,456.2 543.4,455.7 543.8,455.6 544.2,456.9 544.6,455.7 545.0,455.4 545.4,455.8 545.8,457.0 546.2,456.1 546.6,456.6 547.0,455.4 547.4,456.1 547.8,455.9 548.2,455.7 548.6,456.5 549.0,456.0 549.4,455.5 549.8,457.1 550.2,456.2 550.6,455.6 551.0,455.3 551.4,456.5 551.8,456.2 552.2,455.3 552.6,456.1 553.0,456.6 553.4,456.3 553.8,455.7 554.4,456.2 555.0,450.0 558.0,450.0 559.5,430.0 560.0,410.0 560.4,412.5 560.8,412.5 561.2,412.7 561.6,412.8 562.0,411.9 562.4,413.0 562.8,413.3 563.2,412.9 563.6,413.1 564.0,412.3 564.4,413.2 564.8,411.9 565.2,412.0 565.6,412.7 566.0,413.2 566.4,411.7 566.8,412.0 567.2,411.7 567.6,412.4 568.0,411.9 568.4,411.9 568.8,412.9 569.2,412.6 569.6,413.3 570.0,412.3 570.4,412.8 570.8,411.6 571.2,413.3 571.6,412.0 572.0,412.5 572.4,412.5 572.8,413.3 573.2,412.5 573.6,413.4 574.0,412.7 574.4,412.0 574.8,413.1 575.2,412.0 575.6,413.4 576.0,412.4 576.4,412.0 576.8,413.3 577.2,412.2 577.6,412.3 578.0,412.2 578.4,412.8 578.8,411.6 579.2,412.3 579.6,411.9 580.0,413.1 580.4,411.6 580.8,412.7 581.2,412.1 581.6,412.4 582.0,412.6 582.4,412.9 582.8,411.8 583.2,412.0 583.6,411.8 584.2,412.5 585.0,452.9 587.0,452.9 588.5,459.5 589.0,456.2 589.4,457.0 589.8,455.6 590.2,455.5 590.6,456.2 591.0,456.3 591.4,456.9 591.8,455.4 592.2,455.7 592.6,455.6 593.0,456.4 593.4,456.1 593.8,456.0 594.2,456.9 594.6,456.5 595.0,456.8 595.4,457.0 595.8,455.8 596.2,457.0 596.6,456.0 597.0,455.4 597.4,456.9 597.8,455.5 598.2,455.3 598.6,455.8 599.0,455.8 599.4,457.0 599.8,456.9 600.2,456.1 600.6,456.3 601.0,456.8 601.4,456.8 601.8,456.5 602.2,456.2 602.6,455.5 603.0,455.7 603.4,456.5 603.8,456.4 604.2,456.7 604.6,456.9 605.0,457.0 605.4,455.6 605.8,455.4 606.2,456.9 606.6,456.3 607.0,455.6 607.4,456.5 607.8,455.8 608.2,455.7 608.6,456.0 609.0,456.2 609.4,456.5 609.8,455.4 610.2,456.6 610.6,456.4 611.0,456.1 611.4,456.5 611.8,456.7 612.2,455.3 612.8,456.2 613.0,465.3 617.0,465.3 618.0,440.0 618.8,407.2 619.3,412.5 619.7,412.5 620.1,412.8 620.5,412.9 620.9,412.8 621.3,411.9 621.7,413.3 622.1,413.0 622.5,412.0 622.9,412.4 623.3,413.3 623.7,412.0 624.1,412.3 624.5,413.3 624.9,413.2 625.3,412.0 625.7,412.9 626.1,412.2 626.5,412.8 626.9,413.0 627.3,411.8 627.7,412.0 628.1,412.0 628.5,412.1 628.9,411.7 629.3,411.8 629.7,412.3 630.1,412.4 630.5,411.7 630.9,412.6 631.3,413.3 631.7,412.6 632.1,412.2 632.5,412.9 632.9,412.4 633.3,411.9 633.7,412.5 634.1,411.6 634.5,412.8 634.9,411.9 635.3,412.3 635.7,413.3 636.1,413.0 636.5,413.1 636.9,412.8 637.3,412.7 637.7,412.9 638.1,413.3 638.5,412.0 638.9,413.0 639.3,412.1 639.7,412.1 640.1,413.1 640.5,412.7 640.9,413.1 641.3,413.2 641.7,412.7 642.1,412.0 642.5,411.6 642.9,412.6 643.3,412.9 643.7,412.1 644.1,411.7 644.5,411.6 645.1,412.5 646.5,465.3 650.0,465.3 651.5,456.2 651.9,455.6 652.3,456.6 652.7,455.3 653.1,455.7 653.5,455.8 653.9,456.6 654.3,457.1 654.7,455.3 655.1,455.5 655.5,457.0 655.9,457.0 656.3,455.6 656.7,455.9 657.1,456.2 657.5,455.9 657.9,456.1 658.3,456.2 658.7,455.8 659.1,455.4 659.5,455.5 659.9,455.6 660.3,455.5 660.7,456.4 661.1,456.6 661.5,455.8 661.9,456.7 662.3,456.6 662.7,455.9 663.1,456.2 663.5,455.6 663.9,457.0 664.3,456.3 664.7,455.4 665.1,455.6 665.5,456.5 665.9,456.0 666.3,456.6 666.7,455.7 667.1,456.7 667.5,456.7 667.9,455.5 668.3,456.4 668.7,455.6 669.1,456.6 669.5,456.7 669.9,456.7 670.3,455.7 670.7,455.5 671.1,456.5 671.5,456.3 671.9,455.5 672.3,455.6 672.7,456.3 673.1,455.5 673.5,456.4 673.9,455.7 674.3,455.8 674.7,456.1 675.0,456.2 676.0,452.9 679.0,452.9 680.2,410.0 680.6,412.5 681.0,412.6 681.4,412.9 681.8,411.7 682.2,412.9 682.6,412.0 683.0,412.1 683.4,412.8 683.8,412.8 684.2,412.7 684.6,413.2 685.0,412.0 685.4,412.2 685.8,412.8 686.2,412.1 686.6,411.9 687.0,412.0 687.4,413.0 687.8,413.1 688.2,412.9 688.6,413.3 689.0,413.0 689.4,412.2 689.8,412.2 690.2,412.9 690.6,411.7 691.0,412.7 691.4,411.8 691.8,411.7 692.2,412.5 692.6,411.9 693.0,413.3 693.4,413.2 693.8,412.4 694.2,412.0 694.6,411.8 695.0,412.5 695.4,412.5 695.8,412.3 696.2,412.9 696.6,412.6 697.0,413.0 697.4,411.8 697.8,411.7 698.2,412.3 698.6,412.5 699.0,412.1 699.4,412.8 699.8,412.0 700.2,412.2 700.6,412.5 701.0,412.9 701.4,413.0 701.8,412.3 702.2,412.4 702.6,413.3 703.0,413.3 703.3,412.5 705.0,452.9 707.5,452.9 709.1,460.0 710.0,457.0 710.4,457.2 710.8,456.3 711.2,456.9 711.6,457.2 712.0,456.6 712.4,456.2 712.8,457.9 713.2,457.7 713.6,456.3 714.0,456.9 714.4,457.2 714.8,456.6 715.2,456.2 715.6,457.5 716.0,457.5 716.4,456.9 716.8,456.3 717.2,456.8 717.6,456.3 718.0,457.8 718.4,456.2 718.8,456.6 719.2,457.5 719.6,456.3 720.0,456.3 720.4,456.2 720.8,456.4 721.2,457.1 721.6,457.6 722.0,456.4 722.4,456.4 722.8,457.5 723.2,456.9 723.6,456.7 724.0,456.3 724.4,456.5 724.8,457.8 725.2,456.3 725.6,456.6 726.0,457.4 726.4,457.7 726.8,457.7 727.2,457.0 727.6,457.8 728.0,457.2 728.4,456.6 728.8,456.9 729.2,457.4 729.6,457.4 730.0,456.3 730.4,456.4 730.8,457.8 731.2,456.3 731.6,457.6 732.0,456.7 732.4,457.0 734.0,423.0 734.4,422.5 734.8,422.6 735.2,422.9 735.6,423.9 736.0,422.4 736.4,423.6 736.8,422.7 737.2,422.4 737.6,423.4 738.0,422.7 738.4,422.4 738.8,422.9 739.2,423.6 739.6,423.7 740.0,423.0 742.0,410.0 742.5,413.0 742.9,413.1 743.3,412.1 743.7,413.5 744.1,413.2 744.5,413.7 744.9,413.8 745.3,412.7 745.7,413.6 746.1,413.6 746.5,412.6 746.9,412.8 747.3,412.8 747.7,412.7 748.1,412.8 748.5,412.3 748.9,412.5 749.3,413.7 749.7,412.8 750.1,413.2 750.5,413.7 750.9,413.5 751.3,412.5 751.7,413.8 752.1,413.5 752.5,413.9 752.9,413.4 753.3,413.5 753.7,413.6 754.1,412.6 754.5,413.3 754.9,412.8 755.3,413.6 755.7,412.3 756.1,413.1 756.5,412.7 756.9,413.6 757.3,412.7 757.7,413.6 758.1,413.6 758.5,413.7 758.9,412.4 759.3,413.8 759.7,413.0 760.6,453.0 763.0,453.0 764.7,460.0 765.5,457.0 765.9,457.4 766.3,457.3 766.7,457.3 767.1,456.2 767.5,457.7 767.9,457.1 768.3,456.9 768.7,456.7 769.1,457.5 769.5,457.5 769.9,457.7 770.3,456.5 770.7,456.7 771.1,456.5 771.5,456.3 771.9,456.7 772.3,456.1 772.7,457.5 773.1,456.5 773.5,456.2 773.9,456.2 774.3,457.4 774.7,456.5 775.1,456.9 775.5,456.8 775.9,457.5 776.3,457.8 776.7,456.7 777.1,457.2 777.5,457.7 777.9,456.9 778.3,457.7 778.8,457.0 780.0,445.0 784.0,430.0 785.3,410.0 785.8,413.0 786.2,413.4 786.6,412.7 787.0,413.7 787.4,413.1 787.8,412.3 788.2,413.2 788.6,413.6 789.0,413.0 789.4,413.0 789.8,412.8 790.2,413.7 790.6,413.3 791.0,412.5 791.4,412.8 791.8,412.8 792.2,413.8 792.6,413.4 793.0,412.3 793.4,413.7 793.8,412.2 794.2,413.2 794.6,412.9 795.0,413.4 795.4,412.9 795.8,412.3 796.2,413.0 796.6,413.6 797.0,413.0 798.8,453.0 800.4,453.0 802.0,461.0 803.0,458.0 803.4,458.5 803.8,457.7 804.2,457.5 804.6,458.4 805.0,458.5 805.4,457.5 805.8,458.7 806.2,458.9 806.6,457.9 807.0,457.8 807.4,458.4 807.8,458.8 808.2,457.5 808.6,457.6 809.0,457.7 809.4,458.4 809.8,457.4 810.2,458.1 810.6,458.0 811.0,458.3 811.4,457.4 811.8,458.8 812.2,458.9 812.6,458.1 813.0,458.5 813.4,457.4 813.8,458.7 814.2,458.1 814.5,458.0 816.0,445.0 818.5,430.0 819.3,409.0 819.8,413.0 820.2,413.5 820.6,413.7 821.0,412.8 821.4,413.8 821.8,412.5 822.2,412.1 822.6,413.0 823.0,413.7 823.4,413.7 823.8,413.8 824.2,413.0 824.6,413.8 825.0,413.1 825.4,412.4 825.8,413.2 826.2,413.5 826.6,412.9 827.0,413.2 827.4,412.6 827.8,412.6 828.2,412.9 828.6,413.0 829.0,412.9 829.4,412.3 829.8,412.1 830.3,413.0 832.8,453.0 835.3,453.0 836.0,460.0 837.0,457.0 837.4,456.7 837.8,457.4 838.2,457.4 838.6,456.5 839.0,456.6 839.4,457.0 839.8,456.4 840.2,457.2 840.6,457.7 841.0,456.5 841.4,457.2 841.8,457.4 842.2,457.4 842.6,457.4 843.0,457.4 843.4,456.6 843.8,457.6 844.4,457.0 846.0,448.7 848.5,448.7 850.0,408.0 850.5,413.0 850.9,413.8 851.3,412.2 851.7,413.8 852.1,412.9 852.5,412.3 852.9,412.2 853.3,413.5 853.7,413.3 854.1,412.4 854.5,412.9 854.9,413.2 855.3,413.9 855.7,412.7 856.1,413.5 856.5,412.5 856.9,412.5 857.3,412.4 857.7,412.8 858.1,413.2 858.5,412.6 858.9,412.4 859.3,412.5 859.7,412.3 860.1,412.4 860.5,412.7 860.9,413.0 861.3,412.4 861.8,413.0 864.0,398.0 864.5,402.2 864.9,402.2 865.3,402.1 865.7,403.1 866.1,402.2 866.5,403.0 866.9,402.1 867.3,401.7 867.7,402.4 868.1,401.6 868.5,401.6 868.9,401.4 869.3,402.6 869.7,403.0 870.1,402.0 870.5,401.9 870.9,402.1 871.3,401.9 871.7,402.5 872.1,402.0 872.5,401.6 872.9,402.9 873.3,402.3 873.7,401.3 874.1,402.8 874.5,402.6 874.9,401.9 875.3,402.4 875.7,403.0 876.1,402.0 876.5,402.1 876.9,401.8 877.3,402.3 877.7,402.5 878.1,402.6 878.5,403.0 878.9,401.6 879.3,402.0 879.7,402.8 880.1,402.7 880.5,402.4 880.9,402.5 881.3,401.9 881.7,403.0 882.1,402.3 882.5,402.0 882.9,401.6 883.3,401.5 883.7,402.9 884.1,402.7 884.5,401.3 884.9,401.9 885.3,402.2 885.7,402.2 886.1,402.0 886.5,402.9 886.9,401.9 887.3,402.3 887.7,403.0 888.1,402.5 888.5,402.2 888.9,401.9 889.3,402.0 889.7,402.4 890.1,402.7 890.5,401.8 890.9,402.0 891.3,402.0 891.7,402.0 892.1,402.9 892.5,402.3 892.9,401.8 893.3,401.9 893.7,402.8 894.1,401.6 894.5,402.5 894.9,401.3 895.3,401.6 895.8,402.2 896.7,426.3 898.3,426.3 899.2,400.6 900.8,400.6 902.2,418.0 903.3,431.3 905.0,435.0 927.7,435.0" stroke="#0000ff" stroke-width="1"/>
<polyline points="108.0,435.0 229.5,435.0 231.0,428.0 232.5,422.0 233.0,440.0 234.0,428.0 235.5,437.0 237.0,435.0 267.8,435.0 268.4,399.4 269.0,422.0 269.6,435.0 289.0,435.0 289.8,420.0 290.3,403.3 291.0,403.3 291.5,450.0 292.5,430.0 294.0,440.0 296.0,446.0 297.0,454.0 298.0,440.0 299.0,435.0 492.0,435.0 493.5,430.0 495.0,418.0 496.5,428.0 498.0,432.0 503.0,432.0 505.5,410.0 506.5,392.0 507.4,386.5 508.3,395.0 509.0,415.0 510.0,419.7 512.0,423.0 512.4,422.2 512.8,423.6 513.2,422.4 513.6,422.5 514.0,422.2 514.4,422.6 514.8,423.4 515.2,423.4 515.6,423.7 516.0,423.8 516.4,423.1 516.8,423.8 517.2,422.3 517.6,423.8 518.0,422.9 518.4,422.4 518.8,423.4 519.2,423.6 519.6,422.8 520.0,422.3 520.4,423.7 520.8,423.5 521.2,423.2 521.6,423.9 522.0,422.2 522.4,422.2 522.8,422.3 523.2,422.1 523.6,423.4 524.0,423.2 524.4,422.3 524.8,422.4 525.2,422.4 525.6,423.2 526.0,423.3 526.4,423.8 526.8,422.7 527.2,423.9 527.6,422.9 528.0,422.8 528.4,422.6 528.8,422.5 529.2,423.9 529.6,423.9 530.0,423.0 530.3,450.9 530.7,451.3 531.1,450.3 531.5,450.3 531.9,450.3 532.3,450.6 532.7,451.3 533.1,450.1 533.5,451.0 533.9,451.2 534.3,450.1 534.7,450.8 535.1,451.4 535.5,451.0 535.9,450.8 536.3,451.6 536.7,451.1 537.1,450.6 537.5,450.7 537.9,451.7 538.3,451.5 538.7,451.6 539.1,451.0 539.5,450.3 539.9,450.3 540.3,450.7 540.7,451.2 541.1,450.0 541.5,451.4 541.9,451.4 542.3,450.9 542.7,450.0 543.1,451.4 543.5,450.7 543.9,451.2 544.3,451.0 544.7,451.3 545.1,450.7 545.5,451.7 545.9,451.7 546.3,451.7 546.7,451.1 547.1,450.6 547.5,450.7 547.9,450.5 548.3,451.6 548.7,451.4 549.1,451.4 549.5,451.5 549.9,451.8 550.3,451.2 550.7,450.6 551.1,451.4 551.5,450.5 551.9,451.1 552.3,450.3 552.7,451.5 553.1,450.9 553.5,450.5 553.9,451.7 554.4,450.9 556.0,411.4 558.0,411.4 559.5,418.0 559.9,417.2 560.3,418.8 560.7,418.5 561.1,417.4 561.5,418.5 561.9,418.1 562.3,418.7 562.7,418.2 563.1,417.9 563.5,418.8 563.9,417.3 564.3,418.5 564.7,417.3 565.1,417.6 565.5,417.3 565.9,418.7 566.3,417.9 566.7,418.4 567.1,417.6 567.5,418.4 567.9,418.3 568.3,417.3 568.7,418.0 569.1,418.4 569.5,417.5 569.9,418.3 570.3,417.6 570.7,417.8 571.1,418.8 571.5,418.8 571.9,418.9 572.3,417.9 572.7,418.1 573.1,418.6 573.5,418.5 573.9,417.9 574.3,418.7 574.7,417.8 575.1,418.8 575.5,418.0 575.9,417.3 576.3,418.4 576.7,417.4 577.1,418.3 577.5,417.2 577.9,418.9 578.3,418.1 578.7,418.4 579.1,417.3 579.5,418.2 579.9,417.8 580.3,417.5 580.7,418.6 581.1,417.2 581.5,418.0 581.9,417.3 582.3,418.6 582.7,418.7 583.1,417.2 583.5,417.9 583.9,417.9 584.2,418.0 585.0,411.4 587.0,411.4 588.5,451.5 588.9,451.9 589.3,451.9 589.7,451.2 590.1,452.3 590.5,450.9 590.9,450.8 591.3,452.1 591.7,450.8 592.1,450.9 592.5,451.5 592.9,451.2 593.3,450.9 593.7,452.3 594.1,451.5 594.5,452.0 594.9,451.1 595.3,452.2 595.7,451.0 596.1,452.2 596.5,451.7 596.9,452.3 597.3,452.0 597.7,451.7 598.1,451.6 598.5,452.1 598.9,451.4 599.3,450.8 599.7,452.2 600.1,452.1 600.5,451.8 600.9,451.9 601.3,451.0 601.7,451.4 602.1,452.1 602.5,452.3 602.9,452.3 603.3,450.9 603.7,451.8 604.1,451.6 604.5,451.3 604.9,450.9 605.3,450.8 605.7,451.4 606.1,451.5 606.5,451.1 606.9,451.3 607.3,451.6 607.7,452.0 608.1,451.7 608.5,450.9 608.9,452.2 609.3,451.3 609.7,452.3 610.1,452.4 610.5,450.9 610.9,451.6 611.3,452.3 611.7,451.3 612.1,451.6 612.4,451.5 613.5,430.0 618.0,413.9 619.5,418.0 619.9,417.7 620.3,417.2 620.7,417.5 621.1,417.3 621.5,417.6 621.9,418.2 622.3,418.1 622.7,418.8 623.1,418.3 623.5,417.8 623.9,418.8 624.3,418.2 624.7,418.1 625.1,418.7 625.5,418.3 625.9,417.7 626.3,418.2 626.7,417.6 627.1,418.8 627.5,417.5 627.9,418.9 628.3,417.2 628.7,417.1 629.1,418.1 629.5,417.5 629.9,418.0 630.3,417.3 630.7,418.6 631.1,418.3 631.5,418.3 631.9,418.8 632.3,418.9 632.7,418.3 633.1,418.4 633.5,417.1 633.9,417.2 634.3,417.9 634.7,418.8 635.1,417.7 635.5,418.1 635.9,417.1 636.3,417.8 636.7,418.7 637.1,418.2 637.5,418.6 637.9,417.1 638.3,417.5 638.7,417.4 639.1,418.6 639.5,417.3 639.9,418.8 640.3,417.6 640.7,418.7 641.1,418.0 641.5,417.7 641.9,418.8 642.3,417.8 642.7,418.4 643.1,417.2 643.5,418.6 643.9,418.9 644.3,417.3 644.7,418.4 645.1,418.0 646.0,425.0 648.0,445.0 651.8,451.5 652.2,451.1 652.6,450.9 653.0,451.3 653.4,451.8 653.8,452.3 654.2,452.4 654.6,452.4 655.0,451.7 655.4,451.8 655.8,450.9 656.2,451.9 656.6,451.6 657.0,451.2 657.4,452.2 657.8,451.1 658.2,450.9 658.6,450.9 659.0,450.9 659.4,451.7 659.8,452.0 660.2,450.9 660.6,451.5 661.0,451.6 661.4,451.6 661.8,451.3 662.2,451.6 662.6,450.6 663.0,450.7 663.4,451.4 663.8,451.0 664.2,452.0 664.6,451.0 665.0,452.1 665.4,451.0 665.8,450.8 666.2,451.5 666.6,451.3 667.0,451.2 667.4,452.0 667.8,451.0 668.2,451.8 668.6,452.1 669.0,451.4 669.4,451.5 669.8,452.3 670.2,451.7 670.6,450.9 671.0,450.7 671.4,450.7 671.8,451.2 672.2,450.8 672.6,451.8 673.0,451.4 673.4,451.2 673.8,451.5 674.2,452.3 674.6,451.0 675.0,451.5 676.5,410.5 678.5,410.5 680.8,418.0 681.2,417.4 681.6,417.6 682.0,417.7 682.4,418.7 682.8,418.4 683.2,417.9 683.6,417.4 684.0,417.2 684.4,417.3 684.8,418.6 685.2,418.3 685.6,417.4 686.0,418.2 686.4,417.2 686.8,418.0 687.2,417.7 687.6,417.3 688.0,418.4 688.4,418.4 688.8,418.0 689.2,417.4 689.6,418.3 690.0,417.9 690.4,418.3 690.8,417.3 691.2,418.7 691.6,417.1 692.0,417.5 692.4,417.8 692.8,417.5 693.2,417.3 693.6,418.3 694.0,418.9 694.4,417.7 694.8,417.6 695.2,418.3 695.6,417.5 696.0,417.8 696.4,418.3 696.8,417.9 697.2,417.4 697.6,417.2 698.0,418.1 698.4,418.9 698.8,418.8 699.2,417.3 699.6,418.0 700.0,418.0 700.4,417.4 700.8,418.3 701.2,418.0 701.6,418.6 702.0,417.6 702.4,418.8 702.8,418.6 703.3,418.0 705.0,410.5 706.6,410.5 709.1,451.5 709.5,451.5 709.9,450.9 710.3,451.5 710.7,450.8 711.1,451.8 711.5,451.9 711.9,451.6 712.3,452.4 712.7,450.7 713.1,451.9 713.5,452.0 713.9,450.8 714.3,451.2 714.7,450.7 715.1,451.6 715.5,451.9 715.9,451.2 716.3,451.9 716.7,451.3 717.1,451.9 717.5,451.1 717.9,452.4 718.3,451.4 718.7,450.6 719.1,450.8 719.5,451.9 719.9,452.2 720.3,451.7 720.7,450.9 721.1,452.2 721.5,451.9 721.9,450.8 722.3,451.3 722.7,451.8 723.1,450.6 723.5,450.7 723.9,451.2 724.3,452.2 724.7,452.4 725.1,451.2 725.5,452.2 725.9,452.0 726.3,452.2 726.7,451.7 727.1,452.3 727.5,451.8 727.9,452.3 728.3,451.6 728.7,451.0 729.1,451.5 729.5,451.5 729.9,451.2 730.3,451.3 730.7,451.5 731.1,451.7 731.5,451.0 731.9,451.1 732.4,451.5 734.4,402.2 735.0,409.7 740.0,409.7 741.5,418.0 741.9,418.0 742.3,418.0 742.7,417.9 743.1,418.3 743.5,417.4 743.9,418.1 744.3,417.6 744.7,418.5 745.1,418.4 745.5,418.5 745.9,418.0 746.3,417.5 746.7,418.8 747.1,418.0 747.5,417.8 747.9,417.6 748.3,417.8 748.7,418.4 749.1,418.6 749.5,418.0 749.9,418.4 750.3,417.5 750.7,417.9 751.1,417.7 751.5,417.7 751.9,417.7 752.3,418.5 752.7,418.4 753.1,417.5 753.5,417.5 753.9,418.5 754.3,418.3 754.7,418.3 755.1,418.2 755.5,418.3 755.9,417.6 756.3,417.2 756.7,417.7 757.1,417.2 757.5,418.8 757.9,418.0 758.3,418.3 758.7,418.8 759.1,418.5 759.7,418.0 761.4,410.5 762.5,420.0 764.7,450.9 765.1,450.4 765.5,450.6 765.9,450.2 766.3,451.4 766.7,451.3 767.1,450.9 767.5,450.7 767.9,450.5 768.3,450.9 768.7,451.3 769.1,451.6 769.5,451.5 769.9,451.6 770.3,450.8 770.7,450.8 771.1,450.6 771.5,451.8 771.9,450.3 772.3,450.3 772.7,450.5 773.1,451.7 773.5,451.5 773.9,450.6 774.3,451.5 774.7,451.6 775.1,450.8 775.5,450.3 775.9,451.4 776.3,450.7 776.7,450.2 777.1,451.6 777.5,450.8 777.9,450.7 778.3,451.1 778.8,450.9 780.5,400.6 781.3,407.2 784.6,407.2 785.5,418.0 785.9,417.6 786.3,417.1 786.7,417.8 787.1,417.8 787.5,417.1 787.9,417.8 788.3,418.5 788.7,417.7 789.1,418.3 789.5,418.2 789.9,417.4 790.3,417.1 790.7,418.3 791.1,418.2 791.5,417.6 791.9,417.5 792.3,418.6 792.7,418.7 793.1,417.5 793.5,418.2 793.9,418.1 794.3,417.7 794.7,417.2 795.1,417.7 795.5,418.3 795.9,418.2 796.3,418.0 796.7,417.3 797.0,418.0 799.0,410.5 800.5,425.0 802.0,451.0 802.4,450.5 802.8,450.7 803.2,450.8 803.6,450.8 804.0,451.7 804.4,450.3 804.8,451.9 805.2,450.5 805.6,451.6 806.0,450.5 806.4,451.2 806.8,450.8 807.2,450.2 807.6,451.5 808.0,451.6 808.4,450.6 808.8,451.5 809.2,451.0 809.6,451.9 810.0,450.2 810.4,450.8 810.8,450.5 811.2,451.2 811.6,451.5 812.0,451.6 812.4,451.1 812.8,450.8 813.2,451.5 813.6,450.3 814.0,450.6 814.5,451.0 816.2,411.4 818.0,414.0 819.5,418.0 819.9,418.5 820.3,417.9 820.7,418.9 821.1,417.3 821.5,417.9 821.9,417.5 822.3,417.1 822.7,417.3 823.1,417.3 823.5,417.8 823.9,417.9 824.3,418.0 824.7,417.6 825.1,418.4 825.5,418.0 825.9,418.9 826.3,417.4 826.7,418.0 827.1,418.0 827.5,417.8 827.9,418.7 828.3,417.5 828.7,418.7 829.1,417.7 829.5,417.7 829.9,418.2 830.3,418.1 830.7,417.6 831.0,418.0 832.8,410.0 834.5,430.0 836.0,451.0 836.4,450.3 836.8,451.8 837.2,450.8 837.6,450.3 838.0,451.3 838.4,451.1 838.8,450.7 839.2,450.7 839.6,451.6 840.0,450.7 840.4,450.9 840.8,451.8 841.2,450.7 841.6,450.8 842.0,450.4 842.4,451.3 842.8,451.3 843.2,450.9 843.6,450.8 844.0,450.5 844.4,451.0 846.9,412.2 849.0,415.0 850.2,418.0 850.6,418.5 851.0,417.9 851.4,418.6 851.8,417.8 852.2,418.4 852.6,417.2 853.0,417.5 853.4,418.8 853.8,418.3 854.2,418.3 854.6,418.0 855.0,418.0 855.4,417.5 855.8,417.4 856.2,418.3 856.6,418.3 857.0,417.6 857.4,418.3 857.8,417.3 858.2,418.2 858.6,417.4 859.0,418.0 859.4,417.7 859.8,418.1 860.2,417.3 860.6,418.0 861.0,418.2 861.4,417.3 861.8,418.0 864.3,469.5 865.0,465.3 865.4,465.0 865.8,465.6 866.2,465.4 866.6,465.5 867.0,465.8 867.4,465.4 867.8,464.8 868.2,465.2 868.6,465.9 869.0,465.4 869.4,465.8 869.8,465.1 870.2,465.2 870.6,466.1 871.0,465.9 871.4,465.6 871.8,464.6 872.2,465.5 872.6,464.5 873.0,466.1 873.4,466.1 873.8,465.7 874.2,464.9 874.6,465.9 875.0,464.7 875.4,465.9 875.8,465.3 876.2,464.4 876.6,466.0 877.0,465.2 877.4,465.9 877.8,465.6 878.2,465.4 878.6,466.0 879.0,464.8 879.4,466.0 879.8,465.0 880.2,464.4 880.6,465.0 881.0,464.5 881.4,464.5 881.8,465.5 882.2,464.6 882.6,464.7 883.0,464.9 883.4,464.9 883.8,466.1 884.2,466.0 884.6,466.0 885.0,466.2 885.4,465.2 885.8,465.8 886.2,464.9 886.6,466.1 887.0,465.9 887.4,465.7 887.8,464.8 888.2,464.6 888.6,466.1 889.0,465.4 889.4,465.5 889.8,466.0 890.2,464.7 890.6,465.7 891.0,465.2 891.4,465.8 891.8,465.2 892.2,464.8 892.6,466.1 893.0,464.9 893.4,465.7 893.8,465.9 894.2,464.8 894.6,465.7 895.0,465.1 895.4,464.8 895.8,464.8 896.2,466.1 896.7,465.3 898.5,480.0 900.3,493.5 901.5,465.0 902.8,439.6 905.0,435.0 927.7,435.0" stroke="#008000" stroke-width="1"/>
<polyline points="108.0,435.0 229.0,435.0 229.0,432.7 229.5,434.1 230.0,434.0 230.5,429.3 231.0,436.5 231.5,436.5 232.0,437.8 232.5,432.6 233.0,431.1 233.5,432.5 234.0,436.3 234.5,435.6 235.0,433.1 235.5,434.2 236.0,430.5 236.5,438.2 237.0,433.7 237.5,434.1 238.0,436.9 238.5,431.0 239.0,436.2 239.5,432.5 240.0,435.0 249.4,435.0 249.4,425.8 264.1,425.8 264.5,435.0 266.0,435.0 266.0,442.0 266.4,430.5 266.8,433.4 267.2,439.2 267.6,436.7 268.0,435.0 268.4,438.3 268.8,432.5 269.2,436.0 269.6,429.0 270.0,441.8 270.4,433.1 270.8,442.3 272.0,435.0 289.5,435.0 290.5,440.0 291.5,460.0 292.5,479.0 293.0,455.0 293.5,470.0 294.0,440.0 295.5,432.0 296.0,430.0 299.0,430.0 299.0,440.0 296.0,440.0 296.0,435.0 300.0,435.0 491.6,435.0 495.0,426.3 498.0,430.0 500.0,432.0 502.4,432.0" stroke="#ff0000" stroke-width="2"/>
<polyline points="502.4,432.0 502.4,428.9 502.8,445.7 503.2,444.7 503.6,428.6 504.4,426.0 504.9,445.3 507.5,445.1 508.0,426.0 508.5,425.7 508.9,445.7 509.3,444.7 509.7,426.1 511.0,425.8 511.4,446.0 511.8,445.0 512.2,425.5 513.0,425.2 513.4,445.6 513.8,444.6 514.2,425.5 516.0,429.0 516.4,434.0 516.8,433.0 517.2,429.2 517.5,429.0 517.9,445.3 518.3,444.3 518.7,429.1 521.5,425.5 526.0,425.5 526.0,426.5 521.5,426.5 526.0,426.0 526.0,429.6 526.4,445.9 526.8,444.9 527.2,430.0 527.5,425.5 531.0,425.5 531.0,426.5 527.5,426.5 531.0,426.0 531.0,426.0 531.5,445.1 534.1,445.5 534.6,426.0 535.1,425.4 535.5,444.5 535.9,443.5 536.3,425.0 537.1,425.5 541.5,425.5 541.5,426.5 537.1,426.5 541.5,426.0 541.5,428.5 541.9,436.4 542.3,435.4 542.7,428.8 543.5,425.4 543.9,444.1 544.3,443.1 544.7,425.7 545.0,425.5 545.4,445.2 545.8,444.2 546.2,425.2 546.5,425.0 546.9,432.3 547.3,431.3 547.7,425.2 549.5,424.5 550.0,442.2 550.5,425.2 551.0,441.9 551.5,424.8 552.0,442.4 552.5,426.1 553.0,442.1 553.5,427.0 554.0,443.4 554.5,425.3 555.0,442.6 555.5,426.0 555.9,432.4 556.3,431.4 556.7,426.1 558.5,426.0 559.0,444.1 562.5,444.1 563.0,426.0 563.5,425.5 566.4,425.5 566.4,426.5 563.5,426.5 566.4,426.0 566.4,425.2 566.8,444.2 567.2,443.2 567.6,425.3 568.9,426.2 569.3,446.0 569.7,445.0 570.1,426.1 571.4,429.8 571.8,444.4 572.2,443.4 572.6,430.0 573.9,427.4 574.3,443.4 574.7,442.4 575.1,427.0 575.9,425.5 580.1,425.5 580.1,426.5 575.9,426.5 580.1,426.0 580.1,426.5 580.5,445.6 580.9,444.6 581.3,426.2 582.1,426.4 582.5,445.6 582.9,444.6 583.3,426.8 584.6,425.2 585.0,444.1 585.4,443.1 585.8,425.0 587.6,426.0 588.1,444.6 590.3,444.2 590.8,426.0 591.3,427.1 591.7,442.5 592.1,441.5 592.5,426.8 593.3,426.0 593.7,445.8 594.1,444.8 594.5,425.8 596.3,425.1 596.7,439.5 597.1,438.5 597.5,424.9 598.8,426.2 599.2,444.7 599.6,443.7 600.0,425.8 602.8,425.3 603.2,443.7 603.6,442.7 604.0,425.2 606.3,426.0 606.8,443.5 610.0,443.1 610.5,426.0 611.0,427.0 611.5,444.6 612.0,427.4 612.5,445.3 613.0,426.3 613.5,444.1 614.0,424.5 614.5,443.2 615.0,425.3 615.5,444.3 616.0,424.7 616.5,443.9 617.0,426.1 617.4,435.9 617.8,434.9 618.2,425.7 620.5,425.8 620.9,445.7 621.3,444.7 621.7,425.9 624.0,425.9 624.4,445.0 624.8,444.0 625.2,426.2 625.5,426.0 626.0,444.9 630.4,445.2 630.9,426.0 631.4,425.5 636.2,425.5 636.2,426.5 631.4,426.5 636.2,426.0 636.2,426.0 636.7,445.0 639.6,445.3 640.1,426.0 640.6,427.4 641.0,437.7 641.4,436.7 641.8,427.1 643.6,426.2 644.0,445.8 644.4,444.8 644.8,425.9 645.6,425.2 646.0,445.6 646.4,444.6 646.8,425.0 647.1,425.3 647.6,445.5 648.1,425.0 648.6,443.5 649.1,426.1 649.6,445.1 650.1,427.4 650.6,445.9 651.1,424.9 651.6,442.3 652.1,426.6 652.6,443.3 653.1,424.9 653.6,444.5 654.1,425.8 654.6,445.1 655.1,426.3 655.6,442.3 656.1,427.1 656.5,445.1 656.9,444.1 657.3,427.4 658.1,426.2 658.5,444.0 658.9,443.0 659.3,426.3 660.1,425.2 660.6,445.0 661.1,426.6 661.6,445.0 662.1,426.1 662.6,444.6 663.1,424.9 663.6,443.2 664.1,425.4 664.6,442.8 665.1,426.7 665.6,442.5 666.1,426.3 666.5,434.3 666.9,433.3 667.3,426.2 668.6,429.0 669.0,444.3 669.4,443.3 669.8,429.1 671.6,425.6 672.0,445.7 672.4,444.7 672.8,425.5 673.1,425.5 676.7,425.5 676.7,426.5 673.1,426.5 676.7,426.0 676.7,426.0 677.1,445.5 677.5,444.5 677.9,425.9 679.2,429.0 679.6,436.6 680.0,435.6 680.4,429.2 682.7,426.0 683.1,446.0 683.5,445.0 683.9,426.3 684.2,424.9 684.6,444.9 685.0,443.9 685.4,424.8 687.2,425.4 687.6,444.6 688.0,443.6 688.4,425.2 689.2,426.0 689.7,445.4 694.4,445.8 694.9,426.0 695.4,425.9 695.8,445.4 696.2,444.4 696.6,425.8 698.4,427.1 698.9,445.0 699.4,426.7 699.9,442.9 700.4,425.2 700.9,444.7 701.4,425.4 701.9,444.8 702.4,425.5 702.9,444.9 703.4,426.2 703.9,445.2 704.4,425.9 704.8,445.7 705.2,444.7 705.6,425.9 705.9,425.6 706.3,441.0 706.7,440.0 707.1,425.4 709.9,425.5 710.3,444.7 710.7,443.7 711.1,425.7 711.9,426.0 712.3,445.8 712.7,444.8 713.1,425.7 714.4,425.0 714.8,433.6 715.2,432.6 715.6,424.9 716.4,428.2 716.8,432.7 717.2,431.7 717.6,428.2 718.4,425.5 721.1,425.5 721.1,426.5 718.4,426.5 721.1,426.0 721.1,425.4 721.5,444.3 721.9,443.3 722.3,425.5 723.6,426.3 724.0,440.1 724.4,439.1 724.8,426.6 725.6,424.8 726.0,443.2 726.4,442.2 726.8,425.0 729.6,425.9 730.0,445.6 730.4,444.6 730.8,425.7 733.1,424.9 733.5,440.6 733.9,439.6 734.3,425.3 735.1,424.8 735.5,445.9 735.9,444.9 736.3,424.9 738.1,426.0 738.6,445.0 744.1,444.7 744.6,426.0 745.1,426.0 745.6,444.8 750.8,444.9 751.3,426.0 751.8,426.0 752.3,445.4 755.7,444.9 756.2,426.0 756.7,426.7 757.1,432.5 757.5,431.5 757.9,426.9 758.7,425.7 759.1,439.4 759.5,438.4 759.9,425.4 760.7,426.0 761.1,445.0 761.5,444.0 761.9,425.8 764.7,425.0 765.1,441.1 765.5,440.1 765.9,425.3 766.2,425.2 766.6,444.9 767.0,443.9 767.4,425.1 769.2,425.5 773.0,425.5 773.0,426.5 769.2,426.5 773.0,426.0 773.0,427.1 773.4,444.2 773.8,443.2 774.2,427.3 774.5,426.2 774.9,445.6 775.3,444.6 775.7,425.8 778.5,425.0 778.9,444.9 779.3,443.9 779.7,425.1 782.5,426.4 782.9,444.3 783.3,443.3 783.7,426.1 786.0,426.5 786.4,445.5 786.8,444.5 787.2,426.4 788.0,425.5 792.1,425.5 792.1,426.5 788.0,426.5 792.1,426.0 792.1,426.0 792.6,444.7 796.8,444.6 797.3,426.0 797.8,425.5 798.2,440.0 798.6,439.0 799.0,425.3 800.8,425.0 801.2,445.7 801.6,444.7 802.0,424.6 804.3,426.0 804.8,443.7 810.1,443.3 810.6,426.0 811.1,425.5 814.6,425.5 814.6,426.5 811.1,426.5 814.6,426.0 814.6,425.9 815.0,444.1 815.4,443.1 815.8,426.0 816.6,429.1 817.0,436.7 817.4,435.7 817.8,429.2 819.6,426.0 820.0,445.2 820.4,444.2 820.8,425.6 823.1,425.3 823.5,445.3 823.9,444.3 824.3,424.9 826.1,425.3 826.5,435.8 826.9,434.8 827.3,425.0 829.1,426.7 829.5,445.8 829.9,444.8 830.3,426.4 832.1,426.3 832.5,445.5 832.9,444.5 833.3,426.3 834.1,426.0 834.6,445.2 837.8,444.7 838.3,426.0 838.8,427.3 839.3,443.4 839.8,427.3 840.3,442.7 840.8,424.7 841.3,444.9 841.8,425.3 842.3,442.1 842.8,425.5 843.3,444.4 843.8,426.0 844.2,443.1 844.6,442.1 845.0,426.2 846.8,426.2 847.2,445.1 847.6,444.1 848.0,426.1 848.8,426.0 849.3,444.9 852.2,445.3 852.7,426.0 853.2,429.4 853.6,444.0 854.0,443.0 854.4,429.8 856.2,425.2 856.7,442.9 857.2,426.2 857.7,445.0 858.2,427.3 858.7,441.7 859.2,425.8 859.7,442.1 860.2,426.4 860.7,442.1 861.2,426.3 861.7,444.5 862.2,425.5 862.7,444.4 863.2,426.6 863.7,445.9 864.2,426.6 864.7,444.0 865.2,424.9 865.6,444.5 866.0,443.5 866.4,424.7 869.2,428.9 869.6,445.2 870.0,444.2 870.4,428.6 871.2,426.2 871.6,442.3 872.0,441.3 872.4,426.1 874.7,425.5 875.1,445.1 875.5,444.1 875.9,425.8 878.7,426.4 879.1,444.8 879.5,443.8 879.9,426.7 881.7,425.2 882.1,444.9 882.5,443.9 882.9,425.6 884.7,425.7 885.1,445.1 885.5,444.1 885.9,425.6 886.2,425.8 886.6,434.0 887.0,433.0 887.4,425.5 888.2,426.2 888.6,444.3 889.0,443.3 889.4,426.1 890.7,426.1 891.2,445.4 891.7,424.7 892.2,445.1 892.7,427.0 893.2,443.0 893.7,425.7 894.2,445.3 894.7,425.4 895.2,442.4 895.7,426.5" stroke="#ff0000" stroke-width="1"/>
<polyline points="895.8,440.0 896.5,450.0 897.0,469.5 897.6,462.0 900.0,450.0 902.0,440.0 904.1,435.0 927.7,435.0" stroke="#ff0000" stroke-width="2"/>
<polyline points="108.0,691.5 230.3,691.5 234.4,693.5 290.0,693.5 292.5,696.5 298.3,691.5 493.3,691.5 500.0,695.3 509.9,696.0 558.0,754.5 560.5,754.5 584.2,726.8 617.0,763.6 619.4,763.6 645.5,732.4 679.2,769.4 704.3,741.6 733.2,772.4 760.1,746.5 780.0,767.3 784.6,767.3 797.9,752.0 819.2,772.4 832.0,757.3 849.4,774.4 864.3,757.8 903.3,691.5 905.0,691.5" stroke="#0000ff" stroke-width="1.4"/>
<polyline points="108.0,691.5 229.5,691.5 232.8,689.5 267.6,689.5 269.3,688.5 290.0,688.5 291.0,686.5 292.5,686.5 293.0,688.5 294.2,688.5 297.5,691.5 493.3,691.5 497.4,687.3 505.7,687.3 509.0,680.6 530.6,667.4 555.0,690.3 588.2,660.4 612.8,682.6 617.8,682.6 646.8,656.6 651.8,656.6 675.5,678.5 708.3,649.1 733.7,671.5 763.1,642.1 765.2,642.1 779.3,655.4 801.7,634.7 813.4,645.0 836.1,627.2 846.1,636.7 862.7,621.2 899.2,682.3 902.5,691.5 927.7,691.5" stroke="#008000" stroke-width="1.4"/>
<polyline points="108.0,780.5 230.3,780.5 237.8,765.3 249.4,765.3 264.3,689.8 266.0,689.8 270.1,695.5 290.0,695.5 294.2,770.3 299.2,780.5 491.6,780.5 496.6,765.3 502.4,762.5 509.9,722.1 514.9,703.9 515.7,703.1 516.5,702.5 517.4,699.1 518.2,698.9 519.0,697.8 519.9,694.8 520.7,692.3 521.5,691.4 522.3,694.4 523.1,697.9 524.0,701.1 524.8,705.5 525.6,706.3 526.5,708.3 527.3,708.6 528.1,708.6 529.0,709.5 529.8,710.1 530.6,712.1 531.4,712.0 532.3,713.6 533.1,714.7 533.9,714.9 534.8,713.8 535.6,712.6 536.4,710.9 537.3,709.3 538.1,708.9 538.9,708.1 539.8,707.4 540.6,706.4 541.4,704.4 542.3,700.8 543.1,699.5 543.9,697.0 544.8,693.7 545.6,692.3 546.4,687.2 547.3,683.9 548.1,679.5 548.9,673.3 549.7,670.1 550.6,665.0 551.4,660.7 552.3,662.3 553.2,661.6 554.1,661.6 555.0,663.0 556.0,663.1 557.0,661.7 558.0,661.0 559.0,663.1 560.0,662.9 561.0,664.5 562.0,662.6 563.0,662.7 564.0,661.5 564.8,662.5 565.6,661.0 566.4,661.5 567.2,662.1 568.0,662.0 568.8,666.5 569.6,669.0 570.5,673.2 571.3,677.8 572.1,681.7 573.0,684.7 573.8,688.5 574.6,692.3 575.4,694.4 576.3,697.0 577.1,697.6 577.9,699.8 578.8,703.1 579.6,704.1 580.4,705.5 581.3,707.6 582.1,710.5 582.9,706.9 583.8,704.6 584.6,702.8 585.4,698.9 586.2,702.5 587.1,704.4 587.9,707.2 588.7,705.3 589.6,704.1 590.4,702.3 591.2,699.9 592.1,700.0 592.9,698.2 593.7,694.8 594.6,694.5 595.4,692.3 596.2,691.9 597.0,691.7 597.9,691.4 598.7,692.3 599.5,691.2 600.3,692.7 601.2,691.0 602.0,692.5 602.8,691.5 603.6,693.3 604.5,694.1 605.3,693.9 606.1,691.1 607.0,687.9 607.8,682.8 608.6,680.7 609.5,675.9 610.3,674.1 611.1,671.2 612.0,665.8 612.8,664.5 613.6,661.1 614.5,657.4 615.3,653.3 616.1,654.9 616.9,655.2 617.8,657.3 618.6,656.6 619.4,659.1 620.2,659.9 621.0,658.8 621.9,657.1 622.7,655.8 623.5,659.0 624.4,661.0 625.2,665.4 626.0,668.1 626.9,670.6 627.7,673.8 628.5,677.2 629.4,680.3 630.2,682.4 631.0,685.0 631.9,689.3 632.7,691.4 633.5,690.7 634.3,692.7 635.2,691.5 636.0,692.6 636.8,693.1 637.6,692.2 638.5,690.1 639.3,688.5 640.1,691.6 641.0,693.8 641.8,695.5 642.6,698.6 643.5,699.3 644.3,703.4 645.2,704.4 646.0,707.2 646.8,706.1 647.6,706.4 648.5,704.8 649.3,703.9 650.1,702.5 651.0,701.6 651.8,698.6 652.6,697.2 653.4,697.2 654.2,698.9 655.1,699.3 655.9,699.7 656.7,699.6 657.6,698.8 658.4,698.7 659.2,698.8 660.0,697.4 660.9,696.0 661.7,696.3 662.5,696.1 663.4,695.6 664.2,694.8 665.0,692.1 665.9,690.8 666.7,689.2 667.6,687.4 668.4,686.5 669.2,684.3 670.0,679.6 670.9,677.3 671.7,672.9 672.5,670.2 673.4,666.6 674.2,663.9 675.0,659.9 675.8,659.6 676.7,660.1 677.5,659.8 678.4,660.5 679.2,662.5 680.0,661.1 680.9,662.0 681.7,662.4 682.5,665.2 683.4,665.6 684.2,667.0 685.0,669.9 685.8,672.7 686.6,675.9 687.5,678.7 688.3,683.4 689.1,685.6 689.9,684.2 690.8,682.5 691.6,682.3 692.4,683.1 693.3,685.7 694.1,687.2 694.9,689.7 695.7,689.7 696.6,692.7 697.4,693.9 698.2,689.6 699.1,686.2 699.9,683.1 700.8,681.5 701.6,677.3 702.5,676.8 703.3,676.4 704.1,675.4 705.0,675.0 705.8,673.9 706.7,673.7 707.5,673.8 708.3,672.6 709.1,672.4 710.0,673.1 710.8,671.5 711.6,672.4 712.5,674.5 713.3,674.3 714.1,676.2 715.0,675.7 715.8,677.3 716.7,679.5 717.6,682.5 718.4,686.7 719.3,688.9 720.2,691.4 721.1,688.1 722.1,685.1 723.0,681.1 724.0,677.8 724.9,674.0 725.7,673.1 726.6,671.3 727.4,670.4 728.2,667.5 729.1,668.2 729.9,665.7 730.7,666.6 731.5,666.9 732.4,667.7 733.2,667.4 734.0,665.2 734.9,663.7 735.7,663.1 736.5,661.2 737.4,660.7 738.2,658.5 739.0,657.7 739.9,656.0 740.7,654.1 741.5,655.7 742.4,654.9 743.2,656.1 744.0,657.0 744.8,657.4 745.6,659.1 746.5,659.5 747.3,660.7 748.1,662.9 749.0,665.1 749.8,667.0 750.7,667.8 751.5,670.7 752.3,673.2 753.1,676.2 754.0,679.2 754.8,681.0 755.6,682.8 756.5,687.2 757.3,688.7 758.1,691.4 758.9,692.8 759.8,690.9 760.6,692.3 761.4,690.3 762.2,689.7 763.1,687.6 763.9,687.2 764.7,685.6 765.5,685.9 766.4,684.8 767.2,684.7 768.0,683.3 768.9,683.7 769.7,683.1 770.7,686.8 771.7,689.0 772.6,684.6 773.5,681.9 774.5,676.2 775.4,672.9 776.3,669.0 777.2,664.8 778.0,662.5 778.9,660.1 779.8,656.7 780.7,653.5 781.5,648.6 782.4,645.1 783.3,642.5 784.2,644.8 785.2,646.6 786.1,649.7 787.1,652.4 788.1,649.4 789.1,647.5 790.0,650.2 791.0,653.1 792.0,656.3 792.9,659.1 793.7,660.8 794.6,664.9 795.4,665.8 796.2,669.4 797.1,670.7 797.9,674.0 798.8,673.8 799.6,672.3 800.4,669.1 801.3,666.2 802.1,661.5 802.9,659.0 803.8,653.7 804.6,650.8 805.4,649.1 806.2,648.6 807.1,647.7 807.9,647.2 808.7,645.8 809.5,646.5 810.4,648.3 811.2,650.0 812.0,650.0 812.8,647.4 813.7,647.6 814.5,643.9 815.3,643.7 816.2,641.8 817.0,640.0 817.8,641.1 818.7,640.7 819.5,639.4 820.3,640.1 821.2,641.4 822.0,640.4 822.8,641.6 823.7,640.4 824.5,640.8 825.3,642.4 826.1,643.0 827.0,644.1 827.8,645.0 828.6,645.3 829.5,643.7 830.3,641.7 831.2,642.0 832.0,640.8 833.0,644.2 834.1,645.8 835.0,642.9 836.0,639.7 836.9,634.2 837.8,631.7 838.6,630.7 839.4,629.9 840.2,630.0 841.0,632.0 841.9,635.3 842.7,638.3 843.5,639.8 844.4,639.4 845.2,640.1 846.0,640.8 847.0,638.3 847.9,633.8 848.9,631.7 849.9,635.9 850.8,638.6 851.8,641.8 852.7,645.8 853.5,646.2 854.4,648.5 855.2,648.1 856.0,649.1 856.9,651.1 857.9,652.6 858.8,654.4 859.8,655.5 860.7,656.6 861.6,655.1 862.5,655.6 863.3,655.1 864.2,654.9 865.1,654.1 866.1,649.2 867.1,646.5 868.1,641.6 869.0,646.4 870.0,652.0 870.9,656.3 871.8,662.4 872.7,666.9 873.6,669.5 874.5,674.3 875.3,676.9 876.2,680.1 877.1,683.9 878.0,688.1 878.9,691.5 879.9,696.0 880.9,700.6 881.8,698.3 882.6,695.5 883.4,696.1 884.2,698.2 885.1,699.2 885.9,702.1 886.7,703.0 887.8,696.8 888.9,691.4 889.8,692.6 890.8,694.4 891.7,695.5 892.5,697.9 893.4,698.1 894.2,701.6 895.1,703.1 895.9,703.9 897.2,720.5 899.2,750.4 901.7,775.3 905.0,780.5 927.7,780.5" stroke="#ff0000" stroke-width="1.3"/>
<polygon points="106.0,1020.6 106.7,1020.7 107.4,1020.4 108.1,1021.1 108.8,1021.1 109.5,1021.0 110.2,1020.2 110.9,1021.1 111.6,1021.5 112.3,1020.5 113.0,1021.2 113.7,1021.2 114.4,1020.3 115.1,1021.7 115.8,1021.0 116.5,1021.5 117.2,1020.5 117.9,1020.7 118.6,1020.8 119.3,1020.6 120.0,1020.8 120.7,1020.3 121.4,1020.8 122.1,1020.3 122.8,1020.7 123.5,1020.2 124.2,1021.1 124.9,1020.8 125.6,1021.4 126.3,1020.7 127.0,1021.3 127.7,1021.5 128.4,1020.7 129.1,1021.0 129.8,1020.3 130.5,1020.0 131.2,1021.1 131.9,1020.0 132.6,1020.6 133.3,1020.2 134.0,1019.9 134.7,1021.2 135.4,1020.4 136.1,1021.1 136.8,1021.2 137.5,1019.9 138.2,1021.1 138.9,1020.8 139.6,1020.0 140.3,1020.5 141.0,1020.7 141.7,1020.0 142.4,1020.1 143.1,1019.7 143.8,1020.3 144.5,1020.8 145.2,1020.8 145.9,1020.0 146.6,1021.0 147.3,1020.1 148.0,1019.8 148.7,1020.1 149.4,1021.0 150.1,1020.0 150.8,1020.6 151.5,1021.1 152.2,1020.6 152.9,1020.6 153.6,1021.0 154.3,1021.1 155.0,1019.8 155.7,1019.6 156.4,1019.9 157.1,1020.8 157.8,1020.1 158.5,1020.0 159.2,1021.0 159.9,1019.6 160.6,1020.0 161.3,1020.3 162.0,1019.9 162.7,1019.9 163.4,1019.8 164.1,1020.7 164.8,1020.9 165.5,1019.7 166.2,1019.9 166.9,1021.0 167.6,1019.8 168.3,1020.9 169.0,1019.7 169.7,1020.0 170.4,1020.0 171.1,1020.0 171.8,1019.7 172.5,1019.7 173.2,1021.0 173.9,1020.1 174.6,1020.6 175.3,1020.2 176.0,1019.5 176.7,1019.5 177.4,1021.0 178.1,1019.6 178.8,1020.6 179.5,1019.5 180.2,1019.7 180.9,1019.9 181.6,1020.4 182.3,1020.6 183.0,1020.9 183.7,1020.2 184.4,1019.5 185.1,1020.4 185.8,1020.6 186.5,1019.5 187.2,1020.1 187.9,1020.1 188.6,1020.5 189.3,1020.6 190.0,1019.4 190.7,1019.8 191.4,1019.4 192.1,1019.9 192.8,1019.8 193.5,1019.6 194.2,1020.2 194.9,1020.1 195.6,1019.3 196.3,1019.8 197.0,1019.8 197.7,1020.2 198.4,1020.5 199.1,1020.5 199.8,1020.7 200.5,1019.6 201.2,1020.0 201.9,1019.6 202.6,1020.3 203.3,1019.2 204.0,1019.4 204.7,1020.5 205.4,1020.3 206.1,1020.8 206.8,1019.4 207.5,1019.5 208.2,1020.2 208.9,1019.6 209.6,1020.7 210.3,1019.4 211.0,1019.8 211.7,1019.6 212.4,1020.8 213.1,1020.6 213.8,1019.6 214.5,1019.6 215.2,1020.0 215.9,1020.1 216.6,1019.3 217.3,1019.4 218.0,1019.6 218.7,1019.4 219.4,1020.5 220.1,1019.8 220.8,1020.5 221.5,1019.9 222.2,1019.9 222.9,1020.1 223.6,1019.4 224.3,1020.8 225.0,1019.4 225.7,1020.1 226.4,1019.4 227.1,1020.4 227.8,1020.1 228.5,1020.0 229.2,1020.3 229.9,1020.0 230.6,1019.4 231.3,1020.7 232.0,1020.3 232.7,1019.4 233.4,1019.6 234.1,1020.8 234.8,1019.8 235.5,1020.2 236.2,1020.2 236.9,1020.8 237.6,1020.8 238.3,1019.5 239.0,1019.6 239.7,1019.6 240.4,1019.4 241.1,1020.8 241.8,1020.0 242.5,1020.7 243.2,1019.8 243.9,1019.9 244.6,1019.6 245.3,1019.9 246.0,1020.5 246.7,1020.0 247.4,1019.9 248.1,1020.4 248.8,1020.4 249.5,1019.5 250.2,1020.9 250.9,1019.9 251.6,1020.4 252.3,1019.9 253.0,1019.9 253.7,1020.1 254.4,1019.8 255.1,1019.6 255.8,1020.2 256.5,1020.7 257.2,1019.7 257.9,1020.3 258.6,1020.9 259.3,1020.0 260.0,1020.5 260.7,1020.3 261.4,1020.3 262.1,1020.6 262.8,1020.2 263.5,1019.5 264.2,1020.1 264.9,1019.6 265.6,1019.6 266.3,1021.0 267.0,1020.2 267.7,1020.1 268.4,1021.1 269.1,1019.7 269.8,1019.6 270.5,1020.4 271.2,1020.1 271.9,1020.0 272.6,1019.8 273.3,1020.2 274.0,1020.2 274.7,1020.2 275.4,1019.7 276.1,1020.6 276.8,1019.7 277.5,1020.2 278.2,1020.4 278.9,1019.6 279.6,1019.8 280.3,1020.2 281.0,1020.7 281.7,1019.8 282.4,1020.9 283.1,1019.9 283.8,1021.0 284.5,1021.2 285.2,1021.1 285.9,1021.2 286.6,1021.2 287.3,1020.1 288.0,1021.2 288.7,1020.3 289.4,1020.7 290.1,1019.9 290.8,1020.6 291.5,1020.2 292.2,1019.9 292.9,1021.2 293.6,1021.0 294.3,1020.9 295.0,1020.4 295.7,1021.2 296.4,1020.7 297.1,1020.2 297.8,1020.9 298.5,1021.2 299.2,1021.1 299.9,1020.8 300.6,1021.1 301.3,1021.0 302.0,1020.0 302.7,1019.8 303.4,1019.8 304.1,1020.8 304.8,1020.5 305.5,1020.1 306.2,1020.1 306.9,1021.1 307.6,1020.0 308.3,1020.9 309.0,1020.7 309.7,1020.7 310.4,1020.5 311.1,1019.6 311.8,1020.2 312.5,1019.7 313.2,1019.7 313.9,1019.6 314.6,1020.1 315.3,1020.7 316.0,1019.7 316.7,1020.0 317.4,1019.4 318.1,1019.6 318.8,1019.7 319.5,1019.7 320.2,1020.2 320.9,1019.8 321.6,1019.1 322.3,1020.4 323.0,1020.0 323.7,1019.1 324.4,1019.0 325.1,1019.1 325.8,1020.4 326.5,1019.3 327.2,1020.4 327.9,1020.3 328.6,1019.4 329.3,1020.0 330.0,1019.0 330.7,1019.6 331.4,1018.8 332.1,1019.4 332.8,1019.7 333.5,1019.1 334.2,1018.7 334.9,1019.8 335.6,1019.8 336.3,1019.2 337.0,1018.7 337.7,1020.0 338.4,1019.5 339.1,1019.5 339.8,1019.0 340.5,1018.8 341.2,1019.1 341.9,1018.4 342.6,1018.9 343.3,1019.0 344.0,1018.6 344.7,1018.9 345.4,1018.4 346.1,1018.5 346.8,1019.8 347.5,1019.2 348.2,1018.7 348.9,1019.5 349.6,1019.5 350.3,1019.6 351.0,1018.6 351.7,1018.2 352.4,1018.8 353.1,1019.1 353.8,1019.4 354.5,1019.1 355.2,1018.6 355.9,1018.9 356.6,1019.0 357.3,1018.9 358.0,1018.3 358.7,1018.3 359.4,1018.4 360.1,1018.3 360.8,1019.3 361.5,1019.5 362.2,1019.5 362.9,1018.3 363.6,1018.2 364.3,1019.2 365.0,1019.3 365.7,1018.7 366.4,1019.2 367.1,1018.5 367.8,1018.4 368.5,1018.7 369.2,1019.1 369.9,1018.4 370.6,1018.9 371.3,1018.6 372.0,1019.7 372.7,1019.6 373.4,1019.6 374.1,1019.4 374.8,1019.2 375.5,1018.6 376.2,1019.3 376.9,1019.3 377.6,1018.5 378.3,1019.8 379.0,1018.7 379.7,1018.8 380.4,1019.5 381.1,1018.9 381.8,1019.2 382.5,1018.7 383.2,1019.7 383.9,1019.4 384.6,1019.7 385.3,1019.5 386.0,1019.4 386.7,1019.0 387.4,1019.9 388.1,1019.6 388.8,1020.5 389.5,1018.9 390.2,1019.9 390.9,1019.3 391.6,1019.6 392.3,1019.9 393.0,1020.0 393.7,1019.4 394.4,1020.7 395.1,1019.9 395.8,1020.9 396.5,1019.7 397.2,1020.1 397.9,1019.8 398.6,1020.3 399.3,1021.0 400.0,1021.2 400.7,1020.9 401.4,1020.5 402.1,1021.0 402.8,1019.7 403.5,1020.3 404.2,1020.7 404.9,1019.8 405.6,1020.2 406.3,1020.2 407.0,1019.4 407.7,1020.1 408.4,1020.4 409.1,1020.2 409.8,1019.5 410.5,1020.8 411.2,1019.7 411.9,1019.2 412.6,1019.4 413.3,1020.5 414.0,1019.9 414.7,1020.3 415.4,1019.8 416.1,1019.9 416.8,1020.0 417.5,1020.4 418.2,1019.1 418.9,1019.6 419.6,1018.9 420.3,1019.3 421.0,1018.7 421.7,1019.3 422.4,1020.0 423.1,1019.9 423.8,1019.6 424.5,1020.0 425.2,1019.3 425.9,1019.8 426.6,1019.2 427.3,1018.5 428.0,1019.0 428.7,1019.4 429.4,1018.8 430.1,1019.5 430.8,1019.5 431.5,1018.2 432.2,1018.9 432.9,1019.2 433.6,1019.3 434.3,1019.5 435.0,1018.3 435.7,1018.5 436.4,1018.4 437.1,1019.2 437.8,1018.1 438.5,1019.3 439.2,1019.2 439.9,1018.0 440.6,1018.6 441.3,1018.0 442.0,1019.2 442.7,1018.6 443.4,1018.9 444.1,1018.4 444.8,1018.3 445.5,1018.9 446.2,1018.6 446.9,1019.0 447.6,1019.6 448.3,1018.8 449.0,1018.6 449.7,1019.0 450.4,1018.8 451.1,1019.2 451.8,1019.7 452.5,1019.5 453.2,1018.7 453.9,1019.7 454.6,1019.7 455.3,1019.8 456.0,1019.2 456.7,1019.7 457.4,1019.8 458.1,1019.8 458.8,1018.8 459.5,1018.8 460.2,1019.5 460.9,1020.1 461.6,1020.0 462.3,1019.7 463.0,1020.0 463.7,1020.2 464.4,1019.7 465.1,1020.4 465.8,1019.2 466.5,1019.1 467.2,1019.7 467.9,1019.2 468.6,1020.6 469.3,1019.7 470.0,1020.8 470.7,1020.8 471.4,1019.2 472.1,1020.6 472.8,1019.3 473.5,1020.6 474.2,1019.6 474.9,1019.8 475.6,1020.8 476.3,1020.0 477.0,1019.5 477.7,1020.0 478.4,1020.7 479.1,1019.6 479.8,1019.9 480.5,1019.8 481.2,1019.7 481.9,1019.8 482.6,1019.5 483.3,1020.3 484.0,1020.4 484.7,1020.1 485.4,1019.7 486.1,1019.8 486.8,1020.1 487.5,1020.3 488.2,1020.6 488.9,1020.7 489.6,1020.4 490.3,1019.5 491.0,1019.5 491.7,1020.8 492.4,1019.7 493.1,1020.7 493.8,1019.5 494.5,1019.7 495.2,1020.9 495.9,1020.7 496.6,1020.5 497.3,1020.1 498.0,1020.3 498.7,1019.8 499.4,1019.6 500.1,1019.8 500.8,1019.7 501.5,1020.3 502.2,1021.1 502.9,1020.4 503.6,1020.1 504.3,1020.4 505.0,1020.1 505.7,1021.1 506.4,1020.7 507.1,1019.6 507.8,1020.7 508.5,1020.5 509.2,1020.2 509.9,1020.7 510.6,1021.0 511.3,1019.7 512.0,1021.1 512.7,1020.9 513.4,1020.7 514.1,1020.9 514.8,1021.1 515.5,1019.7 516.2,1020.7 516.9,1020.5 517.6,1019.9 518.3,1021.1 519.0,1021.3 519.7,1020.5 520.4,1020.3 521.1,1021.0 521.8,1020.0 522.5,1021.2 523.2,1019.8 523.9,1020.5 524.6,1020.2 525.3,1019.8 526.0,1020.1 526.7,1020.7 527.4,1020.8 528.1,1021.0 528.8,1019.7 529.5,1020.9 530.2,1019.5 530.9,1019.5 531.6,1020.5 532.3,1020.2 533.0,1020.0 533.7,1019.3 534.4,1019.9 535.1,1019.8 535.8,1019.9 536.5,1019.2 537.2,1019.7 537.9,1019.9 538.6,1019.8 539.3,1019.0 540.0,1019.5 540.7,1019.7 541.4,1019.8 542.1,1019.8 542.8,1019.2 543.5,1019.6 544.2,1018.9 544.9,1019.0 545.6,1019.0 546.3,1019.6 547.0,1018.7 547.7,1019.4 548.4,1019.6 549.1,1019.5 549.8,1020.1 550.5,1019.0 551.2,1019.2 551.9,1019.8 552.6,1019.5 553.3,1018.8 554.0,1020.0 554.7,1018.8 555.4,1019.3 556.1,1019.2 556.8,1018.5 557.5,1018.4 558.2,1019.2 558.9,1018.4 559.6,1018.8 560.3,1019.4 561.0,1019.7 561.7,1019.5 562.4,1018.3 563.1,1018.8 563.8,1019.4 564.5,1018.4 565.2,1018.9 565.9,1018.6 566.6,1018.6 567.3,1019.4 568.0,1019.5 568.7,1019.0 569.4,1019.3 570.1,1018.5 570.8,1019.1 571.5,1018.9 572.2,1019.3 572.9,1019.2 573.6,1019.6 574.3,1019.5 575.0,1019.3 575.7,1019.0 576.4,1019.2 577.1,1018.7 577.8,1018.7 578.5,1019.2 579.2,1018.8 579.9,1019.4 580.6,1020.0 581.3,1018.9 582.0,1019.1 582.7,1019.8 583.4,1019.3 584.1,1018.5 584.8,1019.1 585.5,1019.9 586.2,1019.2 586.9,1019.3 587.6,1019.9 588.3,1019.8 589.0,1019.8 589.7,1018.9 590.4,1019.1 591.1,1019.8 591.8,1019.1 592.5,1018.9 593.2,1020.1 593.9,1018.8 594.6,1019.2 595.3,1020.1 596.0,1018.8 596.7,1018.9 597.4,1019.7 598.1,1020.1 598.8,1019.2 599.5,1019.8 600.2,1019.0 600.9,1020.3 601.6,1019.5 602.3,1019.9 603.0,1018.8 603.7,1019.6 604.4,1018.6 605.1,1019.5 605.8,1019.8 606.5,1019.2 607.2,1019.3 607.9,1019.8 608.6,1018.7 609.3,1019.6 610.0,1019.2 610.7,1019.0 611.4,1018.4 612.1,1019.4 612.8,1018.5 613.5,1019.0 614.2,1018.2 614.9,1019.7 615.6,1019.3 616.3,1018.9 617.0,1019.5 617.7,1018.1 618.4,1018.9 619.1,1018.1 619.8,1019.2 620.5,1018.4 621.2,1018.0 621.9,1019.0 622.6,1018.1 623.3,1018.6 624.0,1019.1 624.7,1017.8 625.4,1018.9 626.1,1018.9 626.8,1018.7 627.5,1019.1 628.2,1018.5 628.9,1018.9 629.6,1017.8 630.3,1017.7 631.0,1018.7 631.7,1017.6 632.4,1017.8 633.1,1017.9 633.8,1018.5 634.5,1017.7 635.2,1017.9 635.9,1018.2 636.6,1017.5 637.3,1018.0 638.0,1017.5 638.7,1018.5 639.4,1018.0 640.1,1017.3 640.8,1017.9 641.5,1017.2 642.2,1017.4 642.9,1018.0 643.6,1017.2 644.3,1017.2 645.0,1017.0 645.7,1017.9 646.4,1017.3 647.1,1016.7 647.8,1016.7 648.5,1017.2 649.2,1018.0 649.9,1017.0 650.6,1017.0 651.3,1016.8 652.0,1016.9 652.7,1017.8 653.4,1017.7 654.1,1017.6 654.8,1017.0 655.5,1017.6 656.2,1016.4 656.9,1016.3 657.6,1017.2 658.3,1017.2 659.0,1016.0 659.7,1017.0 660.4,1016.1 661.1,1015.9 661.8,1015.8 662.5,1016.6 663.2,1016.7 663.9,1017.0 664.6,1017.4 665.3,1016.1 666.0,1017.3 666.7,1017.0 667.4,1016.7 668.1,1016.2 668.8,1016.7 669.5,1016.9 670.2,1017.2 670.9,1016.0 671.6,1017.5 672.3,1016.4 673.0,1017.2 673.7,1017.6 674.4,1017.2 675.1,1017.4 675.8,1017.2 676.5,1017.6 677.2,1016.9 677.9,1017.4 678.6,1017.0 679.3,1017.1 680.0,1016.9 680.7,1016.7 681.4,1017.4 682.1,1017.0 682.8,1017.5 683.5,1017.4 684.2,1018.1 684.9,1017.7 685.6,1019.2 686.3,1018.5 687.0,1018.4 687.7,1019.4 688.4,1019.0 689.1,1019.6 689.8,1020.7 690.5,1020.6 691.2,1020.6 691.9,1019.5 692.6,1019.2 693.3,1019.7 694.0,1020.3 694.7,1019.7 695.4,1019.5 696.1,1019.5 696.8,1020.0 697.5,1019.2 698.2,1018.6 698.9,1018.9 699.6,1018.7 700.3,1018.3 701.0,1019.1 701.7,1018.2 702.4,1018.7 703.1,1019.2 703.8,1018.1 704.5,1018.2 705.2,1018.0 705.9,1017.4 706.6,1017.7 707.3,1017.8 708.0,1017.2 708.7,1017.4 709.4,1017.7 710.1,1017.3 710.8,1016.8 711.5,1017.3 712.2,1017.1 712.9,1017.1 713.6,1017.2 714.3,1017.6 715.0,1016.5 715.7,1015.9 716.4,1015.9 717.1,1016.8 717.8,1016.2 718.5,1015.5 719.2,1016.6 719.9,1016.1 720.6,1016.2 721.3,1016.3 722.0,1016.2 722.7,1016.1 723.4,1016.2 724.1,1016.3 724.8,1015.9 725.5,1014.8 726.2,1014.8 726.9,1015.0 727.6,1015.9 728.3,1014.8 729.0,1015.8 729.7,1015.6 730.4,1015.0 731.1,1014.5 731.8,1014.3 732.5,1015.6 733.2,1014.2 733.9,1014.9 734.6,1014.1 735.3,1014.9 736.0,1014.2 736.7,1014.9 737.4,1014.4 738.1,1015.4 738.8,1015.9 739.5,1016.0 740.2,1016.0 740.9,1015.5 741.6,1016.6 742.3,1016.8 743.0,1017.3 743.7,1017.1 744.4,1018.5 745.1,1018.3 745.8,1018.7 746.5,1019.0 747.2,1018.9 747.9,1018.8 748.6,1017.9 749.3,1018.9 750.0,1019.3 750.7,1018.9 751.4,1019.6 752.1,1019.5 752.8,1018.7 753.5,1018.9 754.2,1019.6 754.9,1019.1 755.6,1019.8 756.3,1018.9 757.0,1020.2 757.7,1019.8 758.4,1020.5 759.1,1019.6 759.8,1019.4 760.5,1019.7 761.2,1018.3 761.9,1016.7 762.6,1015.3 763.3,1015.6 764.0,1015.1 764.7,1014.9 765.4,1014.1 766.1,1014.4 766.8,1015.0 767.5,1013.9 768.2,1015.2 768.9,1014.6 769.6,1014.2 770.3,1014.1 771.0,1014.4 771.7,1014.9 772.4,1013.8 773.1,1015.0 773.8,1014.4 774.5,1014.7 775.2,1014.2 775.9,1014.5 776.6,1014.5 777.3,1013.9 778.0,1014.6 778.7,1013.2 779.4,1014.1 780.1,1014.3 780.8,1014.3 781.5,1013.8 782.2,1013.7 782.9,1013.5 783.6,1015.0 784.3,1017.9 785.0,1019.4 785.7,1019.8 786.4,1019.9 787.1,1019.3 787.8,1019.7 788.5,1019.3 789.2,1020.4 789.9,1020.2 790.6,1019.9 791.3,1019.7 792.0,1020.2 792.7,1020.1 793.4,1019.4 794.1,1019.7 794.8,1019.5 795.5,1020.4 796.2,1019.4 796.9,1020.4 797.6,1019.8 798.3,1020.1 799.0,1019.0 799.7,1019.2 800.4,1018.8 801.1,1017.8 801.8,1015.0 802.5,1015.1 803.2,1015.4 803.9,1015.0 804.6,1014.5 805.3,1014.4 806.0,1015.4 806.7,1014.8 807.4,1014.7 808.1,1015.1 808.8,1015.3 809.5,1014.2 810.2,1014.8 810.9,1015.0 811.6,1015.0 812.3,1014.0 813.0,1015.3 813.7,1015.4 814.4,1014.5 815.1,1013.8 815.8,1013.8 816.5,1013.8 817.2,1014.4 817.9,1014.9 818.6,1017.7 819.3,1019.7 820.0,1019.6 820.7,1020.8 821.4,1020.0 822.1,1019.7 822.8,1019.8 823.5,1020.2 824.2,1020.2 824.9,1019.9 825.6,1020.7 826.3,1019.9 827.0,1020.8 827.7,1020.3 828.4,1019.7 829.1,1020.9 829.8,1020.7 830.5,1020.4 831.2,1020.6 831.9,1020.4 832.6,1020.3 833.3,1019.9 834.0,1017.1 834.7,1014.8 835.4,1014.0 836.1,1013.7 836.8,1014.6 837.5,1013.3 838.2,1013.2 838.9,1013.6 839.6,1014.5 840.3,1014.1 841.0,1013.8 841.7,1014.1 842.4,1014.0 843.1,1013.3 843.8,1013.4 844.5,1012.9 845.2,1013.3 845.9,1014.2 846.6,1013.1 847.3,1013.9 848.0,1014.0 848.7,1014.2 849.4,1013.1 850.1,1013.7 850.8,1015.7 851.5,1019.7 852.2,1020.2 852.9,1020.6 853.6,1020.3 854.3,1021.6 855.0,1021.2 855.7,1021.4 856.4,1021.2 857.1,1021.3 857.8,1021.5 858.5,1020.6 859.2,1021.5 859.9,1021.9 860.6,1020.5 861.3,1020.7 862.0,1020.4 862.7,1021.7 863.4,1021.5 864.1,1020.7 864.8,1021.7 865.5,1020.4 866.2,1021.9 866.9,1020.5 867.6,1020.6 868.3,1020.5 869.0,1021.4 869.7,1020.5 870.4,1021.4 871.1,1020.9 871.8,1021.8 872.5,1020.4 873.2,1020.9 873.9,1021.9 874.6,1021.6 875.3,1020.5 876.0,1021.3 876.7,1020.7 877.4,1021.6 878.1,1022.0 878.8,1021.1 879.5,1021.6 880.2,1021.8 880.9,1021.6 881.6,1020.7 882.3,1020.7 883.0,1021.8 883.7,1021.5 884.4,1021.7 885.1,1020.8 885.8,1021.4 886.5,1022.0 887.2,1020.6 887.9,1021.0 888.6,1021.3 889.3,1021.2 890.0,1021.3 890.7,1020.9 891.4,1021.9 892.1,1021.5 892.8,1022.0 893.5,1020.8 894.2,1021.3 894.9,1022.2 895.6,1021.8 896.3,1021.4 897.0,1022.3 897.7,1022.2 898.4,1021.0 899.1,1021.5 899.8,1021.0 900.5,1022.0 901.2,1020.7 901.9,1022.0 902.6,1021.9 903.3,1021.0 904.0,1021.7 904.7,1021.0 905.4,1021.4 906.1,1020.7 906.8,1020.9 907.5,1020.7 908.2,1022.0 908.9,1021.2 909.6,1022.0 910.3,1021.6 911.0,1021.3 911.7,1020.6 912.4,1021.8 913.1,1020.5 913.8,1020.7 914.5,1021.8 915.2,1020.9 915.9,1020.6 916.6,1021.2 917.3,1021.3 918.0,1021.3 918.7,1021.6 919.4,1020.5 920.1,1021.2 920.8,1020.5 921.5,1021.7 922.2,1020.7 922.9,1021.5 923.6,1021.4 924.0,1021.0 922.0,1025.0 924.0,1029.0 106.0,1029.0" fill="#008000" stroke="none"/>
<polygon points="913,1013.5 915,1017 913,1021 932,1021 929.5,1017 932,1013.5" fill="#008000" stroke="none"/>
<polygon points="106.0,1028.5 931.0,1028.5 930.4,1039.1 929.8,1038.3 929.2,1038.6 928.6,1039.3 928.0,1040.2 927.4,1040.1 926.8,1039.0 926.2,1040.2 925.6,1040.0 925.0,1038.8 924.4,1038.9 923.8,1040.0 923.2,1038.5 922.6,1039.2 922.0,1040.0 921.4,1038.5 920.8,1039.2 920.2,1039.8 919.6,1040.1 919.0,1039.2 918.4,1039.5 917.8,1039.0 917.2,1038.6 916.6,1038.8 916.0,1039.5 915.4,1038.7 914.8,1040.1 914.2,1038.8 913.6,1039.1 913.0,1040.0 912.4,1038.7 911.8,1039.4 911.2,1038.9 910.6,1038.5 910.0,1040.0 909.4,1039.0 908.8,1038.6 908.2,1040.1 907.6,1039.7 907.0,1038.4 906.4,1039.4 905.8,1039.1 905.2,1039.2 904.6,1038.7 904.0,1039.6 903.4,1040.2 902.8,1039.7 902.2,1038.1 901.6,1040.1 901.0,1038.8 900.4,1038.2 899.8,1039.5 899.2,1039.7 898.6,1039.7 898.0,1039.0 897.4,1039.2 896.8,1038.5 896.2,1040.0 895.6,1040.1 895.0,1038.8 894.4,1038.1 893.8,1038.9 893.2,1038.6 892.6,1038.3 892.0,1039.4 891.4,1038.3 890.8,1038.5 890.2,1038.1 889.6,1039.7 889.0,1039.5 888.4,1039.5 887.8,1038.2 887.2,1038.4 886.6,1039.0 886.0,1039.7 885.4,1038.6 884.8,1038.5 884.2,1039.6 883.6,1038.8 883.0,1039.6 882.4,1039.8 881.8,1038.2 881.2,1038.3 880.6,1039.7 880.0,1039.8 879.4,1038.5 878.8,1038.2 878.2,1038.4 877.6,1039.2 877.0,1039.9 876.4,1040.1 875.8,1038.7 875.2,1038.1 874.6,1039.1 874.0,1039.4 873.4,1038.6 872.8,1038.1 872.2,1039.9 871.6,1038.4 871.0,1039.9 870.4,1038.3 869.8,1038.9 869.2,1039.8 868.6,1039.0 868.0,1039.8 867.4,1039.0 866.8,1038.9 866.2,1038.4 865.6,1038.1 865.0,1039.0 864.4,1038.2 863.8,1040.0 863.2,1039.3 862.6,1039.7 862.0,1038.7 861.4,1038.2 860.8,1038.2 860.2,1038.2 859.6,1039.1 859.0,1040.1 858.4,1039.0 857.8,1038.1 857.2,1039.5 856.6,1039.7 856.0,1038.4 855.4,1039.0 854.8,1040.2 854.2,1038.6 853.6,1039.5 853.0,1039.8 852.4,1038.5 851.8,1039.0 851.2,1039.6 850.6,1040.2 850.0,1038.9 849.4,1038.5 848.8,1038.7 848.2,1039.6 847.6,1039.1 847.0,1038.1 846.4,1039.5 845.8,1039.1 845.2,1039.7 844.6,1039.1 844.0,1039.6 843.4,1040.0 842.8,1038.6 842.2,1039.4 841.6,1039.0 841.0,1039.0 840.4,1038.3 839.8,1038.0 839.2,1038.9 838.6,1039.5 838.0,1038.7 837.4,1039.4 836.8,1039.0 836.2,1040.1 835.6,1039.0 835.0,1038.3 834.4,1038.9 833.8,1039.4 833.2,1038.8 832.6,1038.5 832.0,1038.8 831.4,1038.7 830.8,1039.3 830.2,1039.5 829.6,1038.9 829.0,1038.0 828.4,1038.7 827.8,1038.1 827.2,1039.7 826.6,1038.3 826.0,1040.0 825.4,1039.1 824.8,1038.8 824.2,1039.6 823.6,1038.5 823.0,1039.0 822.4,1038.1 821.8,1039.4 821.2,1039.4 820.6,1038.2 820.0,1038.3 819.4,1038.9 818.8,1038.5 818.2,1038.5 817.6,1039.8 817.0,1038.2 816.4,1038.4 815.8,1038.8 815.2,1038.4 814.6,1039.1 814.0,1039.7 813.4,1040.2 812.8,1039.0 812.2,1038.9 811.6,1039.4 811.0,1039.5 810.4,1039.6 809.8,1039.2 809.2,1039.1 808.6,1038.4 808.0,1039.0 807.4,1039.9 806.8,1039.4 806.2,1038.5 805.6,1038.8 805.0,1038.9 804.4,1039.5 803.8,1038.8 803.2,1038.1 802.6,1038.7 802.0,1039.5 801.4,1038.5 800.8,1039.6 800.2,1038.3 799.6,1039.8 799.0,1038.2 798.4,1039.6 797.8,1039.7 797.2,1038.6 796.6,1038.5 796.0,1038.5 795.4,1038.6 794.8,1038.2 794.2,1039.6 793.6,1038.8 793.0,1038.1 792.4,1039.2 791.8,1039.8 791.2,1038.2 790.6,1038.2 790.0,1038.8 789.4,1040.0 788.8,1039.6 788.2,1038.0 787.6,1038.0 787.0,1040.1 786.4,1038.9 785.8,1038.0 785.2,1039.7 784.6,1039.8 784.0,1039.0 783.4,1039.0 782.8,1039.9 782.2,1039.6 781.6,1039.1 781.0,1040.0 780.4,1038.2 779.8,1038.3 779.2,1038.1 778.6,1039.0 778.0,1039.2 777.4,1038.7 776.8,1039.2 776.2,1039.1 775.6,1039.9 775.0,1040.2 774.4,1038.7 773.8,1038.9 773.2,1038.1 772.6,1040.1 772.0,1039.9 771.4,1039.0 770.8,1039.0 770.2,1039.5 769.6,1038.4 769.0,1038.8 768.4,1039.5 767.8,1038.9 767.2,1039.1 766.6,1038.9 766.0,1039.2 765.4,1038.9 764.8,1039.1 764.2,1038.2 763.6,1039.0 763.0,1039.6 762.4,1039.8 761.8,1039.0 761.2,1039.1 760.6,1039.4 760.0,1039.6 759.4,1039.5 758.8,1038.9 758.2,1038.7 757.6,1038.5 757.0,1039.6 756.4,1039.2 755.8,1039.0 755.2,1038.8 754.6,1039.4 754.0,1040.2 753.4,1038.2 752.8,1038.7 752.2,1039.8 751.6,1039.6 751.0,1038.4 750.4,1039.8 749.8,1038.4 749.2,1040.1 748.6,1039.8 748.0,1038.5 747.4,1038.6 746.8,1038.3 746.2,1039.6 745.6,1038.3 745.0,1038.1 744.4,1039.0 743.8,1039.9 743.2,1038.1 742.6,1040.0 742.0,1038.4 741.4,1038.4 740.8,1039.6 740.2,1038.6 739.6,1039.7 739.0,1039.6 738.4,1039.0 737.8,1039.4 737.2,1038.4 736.6,1039.3 736.0,1038.4 735.4,1039.0 734.8,1039.7 734.2,1040.0 733.6,1038.5 733.0,1039.3 732.4,1038.3 731.8,1040.2 731.2,1038.5 730.6,1038.5 730.0,1039.8 729.4,1038.2 728.8,1038.1 728.2,1038.3 727.6,1038.7 727.0,1038.7 726.4,1040.1 725.8,1039.3 725.2,1039.8 724.6,1038.2 724.0,1039.0 723.4,1040.1 722.8,1039.4 722.2,1039.5 721.6,1038.0 721.0,1038.2 720.4,1039.3 719.8,1038.6 719.2,1038.7 718.6,1039.2 718.0,1040.1 717.4,1039.7 716.8,1038.8 716.2,1039.1 715.6,1038.8 715.0,1038.4 714.4,1039.2 713.8,1038.2 713.2,1040.0 712.6,1039.1 712.0,1038.8 711.4,1038.3 710.8,1038.2 710.2,1038.8 709.6,1039.2 709.0,1039.7 708.4,1040.1 707.8,1039.0 707.2,1039.9 706.6,1039.5 706.0,1039.5 705.4,1039.4 704.8,1039.1 704.2,1039.8 703.6,1039.8 703.0,1038.0 702.4,1038.4 701.8,1040.2 701.2,1039.9 700.6,1038.9 700.0,1038.4 699.4,1038.3 698.8,1040.0 698.2,1038.6 697.6,1038.7 697.0,1038.6 696.4,1039.5 695.8,1039.4 695.2,1039.6 694.6,1038.2 694.0,1039.9 693.4,1039.5 692.8,1039.7 692.2,1039.6 691.6,1039.9 691.0,1038.3 690.4,1039.6 689.8,1038.1 689.2,1039.3 688.6,1038.3 688.0,1039.5 687.4,1040.0 686.8,1039.7 686.2,1039.9 685.6,1039.0 685.0,1039.3 684.4,1038.9 683.8,1038.9 683.2,1039.9 682.6,1040.2 682.0,1040.0 681.4,1038.3 680.8,1039.3 680.2,1038.8 679.6,1039.6 679.0,1040.0 678.4,1040.1 677.8,1038.3 677.2,1038.6 676.6,1039.7 676.0,1040.0 675.4,1038.2 674.8,1038.7 674.2,1038.7 673.6,1038.9 673.0,1038.2 672.4,1038.0 671.8,1038.7 671.2,1039.1 670.6,1038.4 670.0,1038.6 669.4,1039.7 668.8,1039.3 668.2,1039.7 667.6,1038.9 667.0,1039.1 666.4,1039.5 665.8,1039.3 665.2,1039.7 664.6,1039.6 664.0,1038.7 663.4,1038.4 662.8,1039.2 662.2,1040.2 661.6,1038.8 661.0,1038.6 660.4,1038.3 659.8,1039.7 659.2,1038.7 658.6,1038.9 658.0,1040.0 657.4,1038.9 656.8,1039.1 656.2,1038.9 655.6,1039.6 655.0,1039.7 654.4,1039.4 653.8,1040.0 653.2,1040.2 652.6,1040.0 652.0,1039.2 651.4,1039.3 650.8,1039.9 650.2,1038.9 649.6,1039.8 649.0,1039.5 648.4,1039.9 647.8,1038.9 647.2,1039.4 646.6,1039.7 646.0,1038.9 645.4,1039.1 644.8,1039.7 644.2,1038.4 643.6,1039.2 643.0,1038.3 642.4,1039.6 641.8,1039.0 641.2,1038.1 640.6,1038.7 640.0,1039.2 639.4,1039.2 638.8,1040.1 638.2,1039.4 637.6,1038.2 637.0,1038.3 636.4,1038.9 635.8,1039.1 635.2,1039.4 634.6,1038.9 634.0,1039.2 633.4,1039.5 632.8,1038.6 632.2,1039.9 631.6,1039.6 631.0,1039.5 630.4,1040.1 629.8,1038.3 629.2,1038.2 628.6,1039.0 628.0,1039.7 627.4,1038.8 626.8,1039.6 626.2,1039.6 625.6,1039.7 625.0,1039.2 624.4,1040.0 623.8,1040.2 623.2,1039.5 622.6,1038.3 622.0,1039.1 621.4,1038.2 620.8,1039.8 620.2,1038.9 619.6,1038.0 619.0,1038.3 618.4,1040.1 617.8,1038.3 617.2,1038.9 616.6,1038.1 616.0,1040.0 615.4,1039.9 614.8,1039.2 614.2,1038.4 613.6,1038.7 613.0,1040.0 612.4,1039.1 611.8,1039.9 611.2,1039.8 610.6,1038.1 610.0,1039.0 609.4,1039.3 608.8,1038.9 608.2,1039.4 607.6,1040.0 607.0,1038.2 606.4,1039.9 605.8,1038.7 605.2,1039.8 604.6,1039.5 604.0,1039.2 603.4,1038.6 602.8,1040.0 602.2,1038.3 601.6,1040.1 601.0,1039.4 600.4,1038.1 599.8,1038.7 599.2,1040.1 598.6,1038.1 598.0,1039.3 597.4,1038.8 596.8,1039.2 596.2,1040.0 595.6,1040.0 595.0,1038.0 594.4,1039.9 593.8,1039.7 593.2,1038.5 592.6,1038.8 592.0,1038.7 591.4,1039.8 590.8,1038.7 590.2,1038.9 589.6,1039.8 589.0,1038.4 588.4,1038.9 587.8,1039.9 587.2,1040.0 586.6,1039.0 586.0,1038.3 585.4,1039.2 584.8,1040.1 584.2,1038.2 583.6,1038.6 583.0,1038.7 582.4,1038.3 581.8,1039.7 581.2,1038.8 580.6,1038.1 580.0,1038.3 579.4,1039.5 578.8,1038.7 578.2,1039.4 577.6,1039.3 577.0,1039.1 576.4,1040.0 575.8,1038.3 575.2,1039.7 574.6,1038.6 574.0,1039.6 573.4,1039.1 572.8,1038.2 572.2,1038.5 571.6,1039.4 571.0,1038.5 570.4,1038.4 569.8,1040.1 569.2,1039.1 568.6,1038.6 568.0,1038.2 567.4,1038.1 566.8,1038.3 566.2,1039.1 565.6,1038.1 565.0,1039.9 564.4,1038.7 563.8,1038.3 563.2,1039.2 562.6,1039.3 562.0,1040.2 561.4,1040.1 560.8,1039.5 560.2,1039.8 559.6,1038.3 559.0,1040.1 558.4,1040.0 557.8,1039.4 557.2,1040.2 556.6,1039.1 556.0,1038.3 555.4,1039.8 554.8,1040.2 554.2,1040.1 553.6,1039.9 553.0,1038.0 552.4,1039.8 551.8,1038.8 551.2,1039.7 550.6,1039.9 550.0,1039.1 549.4,1038.7 548.8,1038.7 548.2,1040.1 547.6,1039.9 547.0,1038.2 546.4,1039.7 545.8,1038.8 545.2,1039.5 544.6,1040.0 544.0,1038.2 543.4,1039.3 542.8,1039.6 542.2,1038.5 541.6,1038.3 541.0,1039.3 540.4,1038.3 539.8,1038.2 539.2,1039.8 538.6,1038.4 538.0,1038.5 537.4,1039.9 536.8,1039.5 536.2,1038.1 535.6,1039.0 535.0,1039.4 534.4,1038.2 533.8,1040.0 533.2,1039.9 532.6,1038.2 532.0,1039.9 531.4,1038.5 530.8,1039.3 530.2,1038.2 529.6,1040.2 529.0,1039.0 528.4,1039.7 527.8,1040.1 527.2,1040.1 526.6,1039.3 526.0,1038.2 525.4,1039.9 524.8,1040.1 524.2,1040.0 523.6,1039.9 523.0,1038.5 522.4,1040.1 521.8,1040.1 521.2,1039.6 520.6,1038.6 520.0,1039.1 519.4,1040.0 518.8,1039.1 518.2,1040.2 517.6,1038.9 517.0,1039.4 516.4,1038.4 515.8,1039.3 515.2,1039.2 514.6,1039.5 514.0,1039.7 513.4,1039.2 512.8,1039.7 512.2,1039.1 511.6,1039.4 511.0,1039.6 510.4,1039.6 509.8,1040.0 509.2,1038.6 508.6,1040.1 508.0,1039.9 507.4,1040.1 506.8,1040.0 506.2,1039.2 505.6,1039.1 505.0,1039.9 504.4,1039.4 503.8,1038.5 503.2,1039.4 502.6,1039.4 502.0,1038.5 501.4,1039.3 500.8,1038.2 500.2,1038.5 499.6,1039.4 499.0,1039.6 498.4,1040.0 497.8,1038.2 497.2,1040.0 496.6,1039.9 496.0,1038.7 495.4,1038.8 494.8,1039.2 494.2,1039.2 493.6,1040.0 493.0,1039.7 492.4,1040.0 491.8,1040.2 491.2,1040.1 490.6,1039.1 490.0,1038.7 489.4,1039.0 488.8,1040.1 488.2,1040.1 487.6,1038.1 487.0,1039.9 486.4,1039.9 485.8,1040.1 485.2,1039.6 484.6,1038.9 484.0,1038.2 483.4,1038.3 482.8,1038.6 482.2,1038.7 481.6,1038.7 481.0,1039.9 480.4,1038.2 479.8,1039.1 479.2,1038.9 478.6,1038.6 478.0,1039.2 477.4,1039.7 476.8,1038.7 476.2,1038.2 475.6,1038.1 475.0,1039.0 474.4,1039.5 473.8,1039.9 473.2,1038.7 472.6,1038.7 472.0,1039.7 471.4,1038.2 470.8,1038.4 470.2,1038.5 469.6,1039.1 469.0,1039.9 468.4,1039.7 467.8,1040.2 467.2,1038.4 466.6,1039.8 466.0,1038.4 465.4,1038.9 464.8,1038.5 464.2,1038.8 463.6,1039.3 463.0,1038.9 462.4,1039.2 461.8,1038.9 461.2,1039.5 460.6,1039.7 460.0,1038.9 459.4,1039.5 458.8,1038.2 458.2,1039.3 457.6,1038.4 457.0,1039.4 456.4,1038.4 455.8,1040.1 455.2,1040.2 454.6,1039.3 454.0,1039.6 453.4,1038.1 452.8,1038.1 452.2,1038.6 451.6,1039.5 451.0,1039.7 450.4,1040.2 449.8,1039.4 449.2,1039.6 448.6,1039.1 448.0,1039.2 447.4,1038.3 446.8,1039.7 446.2,1039.7 445.6,1040.0 445.0,1039.8 444.4,1038.3 443.8,1040.1 443.2,1039.2 442.6,1039.1 442.0,1039.7 441.4,1038.2 440.8,1038.4 440.2,1039.5 439.6,1038.5 439.0,1038.3 438.4,1040.0 437.8,1038.6 437.2,1039.8 436.6,1038.5 436.0,1040.1 435.4,1039.0 434.8,1038.9 434.2,1039.1 433.6,1039.5 433.0,1039.7 432.4,1038.5 431.8,1038.2 431.2,1038.0 430.6,1038.7 430.0,1038.5 429.4,1038.2 428.8,1039.6 428.2,1039.3 427.6,1039.9 427.0,1039.8 426.4,1038.4 425.8,1039.3 425.2,1038.7 424.6,1039.4 424.0,1039.7 423.4,1039.4 422.8,1038.1 422.2,1038.5 421.6,1039.9 421.0,1039.6 420.4,1038.5 419.8,1039.1 419.2,1038.9 418.6,1039.8 418.0,1039.7 417.4,1040.1 416.8,1039.0 416.2,1039.3 415.6,1039.9 415.0,1038.3 414.4,1039.2 413.8,1038.4 413.2,1039.4 412.6,1039.0 412.0,1038.1 411.4,1038.9 410.8,1038.8 410.2,1038.5 409.6,1039.7 409.0,1040.0 408.4,1039.1 407.8,1038.6 407.2,1039.7 406.6,1039.3 406.0,1040.0 405.4,1039.9 404.8,1040.1 404.2,1038.2 403.6,1039.6 403.0,1039.5 402.4,1038.0 401.8,1039.8 401.2,1039.5 400.6,1038.5 400.0,1039.3 399.4,1039.1 398.8,1040.0 398.2,1039.5 397.6,1039.3 397.0,1038.7 396.4,1038.9 395.8,1038.4 395.2,1039.7 394.6,1039.5 394.0,1039.2 393.4,1038.3 392.8,1039.8 392.2,1038.7 391.6,1039.7 391.0,1038.0 390.4,1039.7 389.8,1039.6 389.2,1038.6 388.6,1039.0 388.0,1038.1 387.4,1038.3 386.8,1039.7 386.2,1038.7 385.6,1038.8 385.0,1038.4 384.4,1040.1 383.8,1039.6 383.2,1040.1 382.6,1038.3 382.0,1039.8 381.4,1038.8 380.8,1038.8 380.2,1039.8 379.6,1039.6 379.0,1038.6 378.4,1038.2 377.8,1038.5 377.2,1039.8 376.6,1038.3 376.0,1039.8 375.4,1039.0 374.8,1039.3 374.2,1039.6 373.6,1038.4 373.0,1039.7 372.4,1038.9 371.8,1039.8 371.2,1038.5 370.6,1039.3 370.0,1038.6 369.4,1039.5 368.8,1038.2 368.2,1038.6 367.6,1038.7 367.0,1040.1 366.4,1038.7 365.8,1038.2 365.2,1038.6 364.6,1039.6 364.0,1039.9 363.4,1038.1 362.8,1040.2 362.2,1038.3 361.6,1040.0 361.0,1038.6 360.4,1038.0 359.8,1038.3 359.2,1039.0 358.6,1040.1 358.0,1039.5 357.4,1038.2 356.8,1039.5 356.2,1039.6 355.6,1039.0 355.0,1038.5 354.4,1038.3 353.8,1039.1 353.2,1039.0 352.6,1038.0 352.0,1039.5 351.4,1040.2 350.8,1039.2 350.2,1039.3 349.6,1039.8 349.0,1039.1 348.4,1038.8 347.8,1038.8 347.2,1038.9 346.6,1038.3 346.0,1039.3 345.4,1038.1 344.8,1038.2 344.2,1039.0 343.6,1039.4 343.0,1038.9 342.4,1038.6 341.8,1038.7 341.2,1038.5 340.6,1039.0 340.0,1038.2 339.4,1040.2 338.8,1039.6 338.2,1039.3 337.6,1038.4 337.0,1039.1 336.4,1039.4 335.8,1039.1 335.2,1038.0 334.6,1039.4 334.0,1038.8 333.4,1038.7 332.8,1039.2 332.2,1039.6 331.6,1038.9 331.0,1039.5 330.4,1038.6 329.8,1038.3 329.2,1038.7 328.6,1038.7 328.0,1040.0 327.4,1038.3 326.8,1038.5 326.2,1038.3 325.6,1040.1 325.0,1039.5 324.4,1038.2 323.8,1038.7 323.2,1039.9 322.6,1038.5 322.0,1038.6 321.4,1039.8 320.8,1039.4 320.2,1038.6 319.6,1040.1 319.0,1038.3 318.4,1038.2 317.8,1038.5 317.2,1038.8 316.6,1039.0 316.0,1039.4 315.4,1038.9 314.8,1039.7 314.2,1039.7 313.6,1038.8 313.0,1039.4 312.4,1038.4 311.8,1038.0 311.2,1039.5 310.6,1038.7 310.0,1038.7 309.4,1039.6 308.8,1039.3 308.2,1039.9 307.6,1038.1 307.0,1039.6 306.4,1038.7 305.8,1039.4 305.2,1038.5 304.6,1038.1 304.0,1039.6 303.4,1039.5 302.8,1040.2 302.2,1038.9 301.6,1038.6 301.0,1038.3 300.4,1038.3 299.8,1039.0 299.2,1039.7 298.6,1038.3 298.0,1039.7 297.4,1039.8 296.8,1038.5 296.2,1038.7 295.6,1039.2 295.0,1038.9 294.4,1039.7 293.8,1039.3 293.2,1039.1 292.6,1039.1 292.0,1039.0 291.4,1040.1 290.8,1038.4 290.2,1038.6 289.6,1038.5 289.0,1040.1 288.4,1038.3 287.8,1039.0 287.2,1040.0 286.6,1038.2 286.0,1040.0 285.4,1039.2 284.8,1039.7 284.2,1038.2 283.6,1039.1 283.0,1038.3 282.4,1039.4 281.8,1039.4 281.2,1040.2 280.6,1038.3 280.0,1039.1 279.4,1040.1 278.8,1039.6 278.2,1039.4 277.6,1039.6 277.0,1038.1 276.4,1039.0 275.8,1038.3 275.2,1038.6 274.6,1038.4 274.0,1038.4 273.4,1039.5 272.8,1039.7 272.2,1038.9 271.6,1038.1 271.0,1038.7 270.4,1038.5 269.8,1039.6 269.2,1038.6 268.6,1039.2 268.0,1039.7 267.4,1039.5 266.8,1038.8 266.2,1038.7 265.6,1039.0 265.0,1038.2 264.4,1038.0 263.8,1039.0 263.2,1038.6 262.6,1039.2 262.0,1038.3 261.4,1038.8 260.8,1038.1 260.2,1038.5 259.6,1039.1 259.0,1039.6 258.4,1038.1 257.8,1039.6 257.2,1039.2 256.6,1038.8 256.0,1038.6 255.4,1038.8 254.8,1040.0 254.2,1040.2 253.6,1039.1 253.0,1040.1 252.4,1038.4 251.8,1038.6 251.2,1038.1 250.6,1038.1 250.0,1038.4 249.4,1039.4 248.8,1038.2 248.2,1039.9 247.6,1038.0 247.0,1040.1 246.4,1040.1 245.8,1038.1 245.2,1038.4 244.6,1039.9 244.0,1040.1 243.4,1039.0 242.8,1038.7 242.2,1040.2 241.6,1039.5 241.0,1039.0 240.4,1038.3 239.8,1038.1 239.2,1039.8 238.6,1040.1 238.0,1039.6 237.4,1038.3 236.8,1038.2 236.2,1039.3 235.6,1039.9 235.0,1038.9 234.4,1039.0 233.8,1038.4 233.2,1038.9 232.6,1039.7 232.0,1039.8 231.4,1038.5 230.8,1039.7 230.2,1039.3 229.6,1038.4 229.0,1038.7 228.4,1039.5 227.8,1038.2 227.2,1040.2 226.6,1038.7 226.0,1039.3 225.4,1038.7 224.8,1039.7 224.2,1039.7 223.6,1038.4 223.0,1038.8 222.4,1038.6 221.8,1039.0 221.2,1040.1 220.6,1039.4 220.0,1039.3 219.4,1038.8 218.8,1039.5 218.2,1038.2 217.6,1039.2 217.0,1039.6 216.4,1039.3 215.8,1039.4 215.2,1038.3 214.6,1039.5 214.0,1039.8 213.4,1038.9 212.8,1040.0 212.2,1040.1 211.6,1038.8 211.0,1038.7 210.4,1038.5 209.8,1038.4 209.2,1039.5 208.6,1039.9 208.0,1038.4 207.4,1039.1 206.8,1038.9 206.2,1039.5 205.6,1038.7 205.0,1039.7 204.4,1038.2 203.8,1039.8 203.2,1039.2 202.6,1039.7 202.0,1038.7 201.4,1038.5 200.8,1039.3 200.2,1038.6 199.6,1039.8 199.0,1038.8 198.4,1039.9 197.8,1039.6 197.2,1040.0 196.6,1040.0 196.0,1038.2 195.4,1039.5 194.8,1039.3 194.2,1038.5 193.6,1038.1 193.0,1038.7 192.4,1038.9 191.8,1039.7 191.2,1038.7 190.6,1039.7 190.0,1040.1 189.4,1038.8 188.8,1039.8 188.2,1038.3 187.6,1039.2 187.0,1038.9 186.4,1039.2 185.8,1039.9 185.2,1038.3 184.6,1039.6 184.0,1038.6 183.4,1040.1 182.8,1038.9 182.2,1039.9 181.6,1038.5 181.0,1040.0 180.4,1038.0 179.8,1039.1 179.2,1039.9 178.6,1040.0 178.0,1039.8 177.4,1039.6 176.8,1039.1 176.2,1039.2 175.6,1039.1 175.0,1040.0 174.4,1039.7 173.8,1039.3 173.2,1038.5 172.6,1039.4 172.0,1040.1 171.4,1040.1 170.8,1040.0 170.2,1039.7 169.6,1038.7 169.0,1038.4 168.4,1038.5 167.8,1038.8 167.2,1040.2 166.6,1038.9 166.0,1039.2 165.4,1038.9 164.8,1038.0 164.2,1038.0 163.6,1038.7 163.0,1038.7 162.4,1039.4 161.8,1038.4 161.2,1038.1 160.6,1039.9 160.0,1039.3 159.4,1038.1 158.8,1040.1 158.2,1040.1 157.6,1038.8 157.0,1038.2 156.4,1040.1 155.8,1039.9 155.2,1038.3 154.6,1040.0 154.0,1038.7 153.4,1040.1 152.8,1039.2 152.2,1038.5 151.6,1038.5 151.0,1039.6 150.4,1038.1 149.8,1038.0 149.2,1038.9 148.6,1038.6 148.0,1039.3 147.4,1039.8 146.8,1038.2 146.2,1038.3 145.6,1039.8 145.0,1038.9 144.4,1038.1 143.8,1039.2 143.2,1038.7 142.6,1039.6 142.0,1039.0 141.4,1038.1 140.8,1038.6 140.2,1040.1 139.6,1039.1 139.0,1038.5 138.4,1038.9 137.8,1038.1 137.2,1039.2 136.6,1039.3 136.0,1038.2 135.4,1039.3 134.8,1039.7 134.2,1039.8 133.6,1039.6 133.0,1039.3 132.4,1038.1 131.8,1038.4 131.2,1038.4 130.6,1039.1 130.0,1038.5 129.4,1038.7 128.8,1039.3 128.2,1040.2 127.6,1038.4 127.0,1040.1 126.4,1038.3 125.8,1038.1 125.2,1038.2 124.6,1039.7 124.0,1039.6 123.4,1038.8 122.8,1038.4 122.2,1040.2 121.6,1038.8 121.0,1038.3 120.4,1039.9 119.8,1038.4 119.2,1039.8 118.6,1039.2 118.0,1039.2 117.4,1039.7 116.8,1039.4 116.2,1040.0 115.6,1039.3 115.0,1040.0 114.4,1039.8 113.8,1038.2 113.2,1039.6 112.6,1038.6 112.0,1040.0 111.4,1038.7 110.8,1040.1 110.2,1038.1 109.6,1038.7 109.0,1040.1 108.4,1038.9 107.8,1038.7 107.2,1040.2 106.6,1040.1 106.0,1039.3" fill="#0000ff" stroke="none"/>
<polyline points="108.0,1034.4 109.0,1034.4 110.0,1034.4 111.0,1034.4 112.0,1034.4 113.0,1034.4 114.0,1034.4 115.0,1034.4 116.0,1034.4 117.0,1034.4 118.0,1034.4 119.0,1034.4 120.0,1034.4 121.0,1034.4 122.0,1034.4 123.0,1034.4 124.0,1034.4 125.0,1034.4 126.0,1034.4 127.0,1034.4 128.0,1034.4 129.0,1034.4 130.0,1034.4 131.0,1034.4 132.0,1034.4 133.0,1034.9 134.0,1034.9 135.0,1034.9 136.0,1034.9 137.0,1034.9 138.0,1034.9 139.0,1034.9 140.0,1034.9 141.0,1034.9 142.0,1034.9 143.0,1034.9 144.0,1034.9 145.0,1034.9 146.0,1034.9 147.0,1034.9 148.0,1034.9 149.0,1034.9 150.0,1034.9 151.0,1034.9 152.0,1034.9 153.0,1034.9 154.0,1034.9 155.0,1034.9 156.0,1034.9 157.0,1034.9 158.0,1034.9 159.0,1034.9 160.0,1034.9 161.0,1034.9 162.0,1034.9 163.0,1034.9 164.0,1034.9 165.0,1034.9 166.0,1034.9 167.0,1034.9 168.0,1034.9 169.0,1034.9 170.0,1034.9 171.0,1034.9 172.0,1034.9 173.0,1034.9 174.0,1034.9 175.0,1034.9 176.0,1034.9 177.0,1034.9 178.0,1034.9 179.0,1034.9 180.0,1034.9 181.0,1034.9 182.0,1034.9 183.0,1034.9 184.0,1034.9 185.0,1034.9 186.0,1034.9 187.0,1034.9 188.0,1034.9 189.0,1034.9 190.0,1034.9 191.0,1034.9 192.0,1034.9 193.0,1034.9 194.0,1034.9 195.0,1034.9 196.0,1034.9 197.0,1034.9 198.0,1034.9 199.0,1034.9 200.0,1034.9 201.0,1034.9 202.0,1034.9 203.0,1034.9 204.0,1034.9 205.0,1034.9 206.0,1034.9 207.0,1034.9 208.0,1034.9 209.0,1034.9 210.0,1034.9 211.0,1034.9 212.0,1034.9 213.0,1034.9 214.0,1034.9 215.0,1034.9 216.0,1034.9 217.0,1034.9 218.0,1034.9 219.0,1034.9 220.0,1034.9 221.0,1034.9 222.0,1034.9 223.0,1034.9 224.0,1034.9 225.0,1034.9 226.0,1034.9 227.0,1034.9 228.0,1034.9 229.0,1034.9 230.0,1034.9 231.0,1034.9 232.0,1034.9 233.0,1034.9 234.0,1034.9 235.0,1034.9 236.0,1034.9 237.0,1034.9 238.0,1034.9 239.0,1034.9 240.0,1034.9 241.0,1034.9 242.0,1034.9 243.0,1034.9 244.0,1034.9 245.0,1034.9 246.0,1034.9 247.0,1034.9 248.0,1034.9 249.0,1034.9 250.0,1034.9 251.0,1034.9 252.0,1034.9 253.0,1034.9 254.0,1034.9 255.0,1034.9 256.0,1034.9 257.0,1034.9 258.0,1034.9 259.0,1034.9 260.0,1034.9 261.0,1034.9 262.0,1034.9 263.0,1034.9 264.0,1034.9 265.0,1034.9 266.0,1034.9 267.0,1034.9 268.0,1034.9 269.0,1034.9 270.0,1034.9 271.0,1034.9 272.0,1034.9 273.0,1034.9 274.0,1034.9 275.0,1034.9 276.0,1034.9 277.0,1034.9 278.0,1034.9 279.0,1034.9 280.0,1034.9 281.0,1034.9 282.0,1034.9 283.0,1034.9 284.0,1034.9 285.0,1034.9 286.0,1034.9 287.0,1034.9 288.0,1034.9 289.0,1034.9 290.0,1034.9 291.0,1034.9 292.0,1034.9 293.0,1034.9 294.0,1034.9 295.0,1034.9 296.0,1034.9 297.0,1034.9 298.0,1034.9 299.0,1034.9 300.0,1034.9 301.0,1034.9 302.0,1034.9 303.0,1034.9 304.0,1034.9 305.0,1034.9 306.0,1034.9 307.0,1034.9 308.0,1034.9 309.0,1034.9 310.0,1034.9 311.0,1034.9 312.0,1034.9 313.0,1034.9 314.0,1034.9 315.0,1034.9 316.0,1034.9 317.0,1034.9 318.0,1034.9 319.0,1034.9 320.0,1034.9 321.0,1034.9 322.0,1034.9 323.0,1034.9 324.0,1034.9 325.0,1034.9 326.0,1034.9 327.0,1034.9 328.0,1034.9 329.0,1034.9 330.0,1034.9 331.0,1034.9 332.0,1034.9 333.0,1034.9 334.0,1034.9 335.0,1034.9 336.0,1034.9 337.0,1034.9 338.0,1034.9 339.0,1034.9 340.0,1034.9 341.0,1034.9 342.0,1034.9 343.0,1034.9 344.0,1034.9 345.0,1034.9 346.0,1034.9 347.0,1034.9 348.0,1034.9 349.0,1034.9 350.0,1034.9 351.0,1034.9 352.0,1034.9 353.0,1034.9 354.0,1034.9 355.0,1034.9 356.0,1034.9 357.0,1034.9 358.0,1034.9 359.0,1034.9 360.0,1034.9 361.0,1034.9 362.0,1034.9 363.0,1034.9 364.0,1034.9 365.0,1034.9 366.0,1034.9 367.0,1034.9 368.0,1034.9 369.0,1034.9 370.0,1034.9 371.0,1034.9 372.0,1034.9 373.0,1034.9 374.0,1034.9 375.0,1033.4 376.0,1033.4 377.0,1033.4 378.0,1033.4 379.0,1033.4 380.0,1033.4 381.0,1033.4 382.0,1033.4 383.0,1033.4 384.0,1033.4 385.0,1033.4 386.0,1033.4 387.0,1033.4 388.0,1033.4 389.0,1033.4 390.0,1033.4 391.0,1033.4 392.0,1034.9 393.0,1034.9 394.0,1034.9 395.0,1034.9 396.0,1034.9 397.0,1034.9 398.0,1034.9 399.0,1034.9 400.0,1034.9 401.0,1034.9 402.0,1034.9 403.0,1034.9 404.0,1034.9 405.0,1034.9 406.0,1034.9 407.0,1034.9 408.0,1034.9 409.0,1034.9 410.0,1034.9 411.0,1034.9 412.0,1034.9 413.0,1034.9 414.0,1034.9 415.0,1034.9 416.0,1034.9 417.0,1034.9 418.0,1034.9 419.0,1034.9 420.0,1034.9 421.0,1034.9 422.0,1034.9 423.0,1034.9 424.0,1034.9 425.0,1034.9 426.0,1034.9 427.0,1034.9 428.0,1034.9 429.0,1034.9 430.0,1034.9 431.0,1034.9 432.0,1034.9 433.0,1034.9 434.0,1034.9 435.0,1034.9 436.0,1034.9 437.0,1034.9 438.0,1034.9 439.0,1033.4 440.0,1033.4 441.0,1033.4 442.0,1033.4 443.0,1033.4 444.0,1033.4 445.0,1033.4 446.0,1034.4 447.0,1034.4 448.0,1034.4 449.0,1034.4 450.0,1034.4 451.0,1034.4 452.0,1034.4 453.0,1034.4 454.0,1034.4 455.0,1034.4 456.0,1034.4 457.0,1034.4 458.0,1034.4 459.0,1034.4 460.0,1034.4 461.0,1034.4 462.0,1034.4 463.0,1034.4 464.0,1034.4 465.0,1034.4 466.0,1034.4 467.0,1034.4 468.0,1034.4 469.0,1034.4 470.0,1034.4 471.0,1034.4 472.0,1034.4 473.0,1034.4 474.0,1034.4 475.0,1034.4 476.0,1034.4 477.0,1034.4 478.0,1034.4 479.0,1034.4 480.0,1034.4 481.0,1034.4 482.0,1034.4 483.0,1034.4 484.0,1034.4 485.0,1034.4 486.0,1034.4 487.0,1034.4 488.0,1034.4 489.0,1034.4 490.0,1034.4 491.0,1034.4 492.0,1034.4 493.0,1034.4 494.0,1034.4 495.0,1034.4 496.0,1034.4 497.0,1034.4 498.0,1034.4 499.0,1034.4 500.0,1034.4 501.0,1034.4 502.0,1034.4 503.0,1034.4 504.0,1034.4 505.0,1034.4 506.0,1034.4 507.0,1034.4 508.0,1034.4 509.0,1034.4 510.0,1034.4 511.0,1034.4 512.0,1034.4 513.0,1034.4 514.0,1034.4 515.0,1034.4 516.0,1034.4 517.0,1034.4 518.0,1034.4 519.0,1034.4 520.0,1034.4 521.0,1034.4 522.0,1034.4 523.0,1034.4 524.0,1034.4 525.0,1034.4 526.0,1034.4 527.0,1034.4 528.0,1034.4 529.0,1034.4 530.0,1034.4 531.0,1034.4 532.0,1034.4 533.0,1034.4 534.0,1034.4 535.0,1034.4 536.0,1034.4 537.0,1034.4 538.0,1034.4 539.0,1034.4 540.0,1034.4 541.0,1034.4 542.0,1034.4 543.0,1034.4 544.0,1034.4 545.0,1034.4 546.0,1034.4 547.0,1034.4 548.0,1034.4 549.0,1034.4 550.0,1034.9 551.0,1034.9 552.0,1034.9 553.0,1034.9 554.0,1034.9 555.0,1034.9 556.0,1034.9 557.0,1034.9 558.0,1034.9 559.0,1034.9 560.0,1034.9 561.0,1034.9 562.0,1034.9 563.0,1034.9 564.0,1034.9 565.0,1034.9 566.0,1034.9 567.0,1034.9 568.0,1034.9 569.0,1034.9 570.0,1034.9 571.0,1034.9 572.0,1034.9 573.0,1034.9 574.0,1034.9 575.0,1034.9 576.0,1034.9 577.0,1034.9 578.0,1034.9 579.0,1034.9 580.0,1034.9 581.0,1034.9 582.0,1034.9 583.0,1034.9 584.0,1034.9 585.0,1034.9 586.0,1034.9 587.0,1034.9 588.0,1034.9 589.0,1034.9 590.0,1034.9 591.0,1034.9 592.0,1034.9 593.0,1034.9 594.0,1034.9 595.0,1034.9 596.0,1034.9 597.0,1034.9 598.0,1034.9 599.0,1034.9 600.0,1034.9 601.0,1034.9 602.0,1034.9 603.0,1034.9 604.0,1034.9 605.0,1034.9 606.0,1034.9 607.0,1034.9 608.0,1034.9 609.0,1033.9 610.0,1033.9 611.0,1033.9 612.0,1033.9 613.0,1033.9 614.0,1033.9 615.0,1033.9 616.0,1033.9 617.0,1033.9 618.0,1033.9 619.0,1033.9 620.0,1033.9 621.0,1033.9 622.0,1033.9 623.0,1033.9 624.0,1033.9 625.0,1033.9 626.0,1033.9 627.0,1033.9 628.0,1033.9 629.0,1033.9 630.0,1033.9 631.0,1033.9 632.0,1033.9 633.0,1033.9 634.0,1033.9 635.0,1033.9 636.0,1033.9 637.0,1033.9 638.0,1033.9 639.0,1033.4 640.0,1033.4 641.0,1033.4 642.0,1033.4 643.0,1033.4 644.0,1033.4 645.0,1033.4 646.0,1033.4 647.0,1033.4 648.0,1033.4 649.0,1033.4 650.0,1033.4 651.0,1033.4 652.0,1033.4 653.0,1033.4 654.0,1033.4 655.0,1033.4 656.0,1033.4 657.0,1033.4 658.0,1033.4 659.0,1033.4 660.0,1033.4 661.0,1033.4 662.0,1033.4 663.0,1033.4 664.0,1033.4 665.0,1033.4 666.0,1033.4 667.0,1033.4 668.0,1033.4 669.0,1033.4 670.0,1033.4 671.0,1033.4 672.0,1033.4 673.0,1033.4 674.0,1033.4 675.0,1033.4 676.0,1033.4 677.0,1033.4 678.0,1033.4 679.0,1033.4 680.0,1033.4 681.0,1033.4 682.0,1033.4 683.0,1033.4 684.0,1033.4 685.0,1033.4 686.0,1033.4 687.0,1033.4 688.0,1033.4 689.0,1033.4 690.0,1033.4 691.0,1033.9 692.0,1033.9 693.0,1033.9 694.0,1033.9 695.0,1033.9 696.0,1033.9 697.0,1033.9 698.0,1033.9 699.0,1033.9 700.0,1033.9 701.0,1033.9 702.0,1033.9 703.0,1033.9 704.0,1033.9 705.0,1033.9 706.0,1033.9 707.0,1033.9 708.0,1033.9 709.0,1033.9 710.0,1033.9 711.0,1033.9 712.0,1033.9 713.0,1033.9 714.0,1033.9 715.0,1033.9 716.0,1033.9 717.0,1033.9 718.0,1033.9 719.0,1033.9 720.0,1033.9 721.0,1033.9 722.0,1033.9 723.0,1033.9 724.0,1033.9 725.0,1033.9 726.0,1033.9 727.0,1033.9 728.0,1033.9 729.0,1033.9 730.0,1033.9 731.0,1033.9 732.0,1033.9 733.0,1033.9 734.0,1033.9 735.0,1033.9 736.0,1033.9 737.0,1033.9 738.0,1033.9 739.0,1033.9 740.0,1033.9 741.0,1033.9 742.0,1033.9 743.0,1033.9 744.0,1034.4 745.0,1034.4 746.0,1034.4 747.0,1034.4 748.0,1034.4 749.0,1034.4 750.0,1034.4 751.0,1034.4 752.0,1034.4 753.0,1034.4 754.0,1034.4 755.0,1034.4 756.0,1034.4 757.0,1034.4 758.0,1034.4 759.0,1034.4 760.0,1034.4 761.0,1034.4 762.0,1034.4 763.0,1034.4 764.0,1034.4 765.0,1034.4 766.0,1034.4 767.0,1034.4 768.0,1034.4 769.0,1034.4 770.0,1034.4 771.0,1034.4 772.0,1034.4 773.0,1034.4 774.0,1034.4 775.0,1034.4 776.0,1034.4 777.0,1034.4 778.0,1034.4 779.0,1034.4 780.0,1034.4 781.0,1034.4 782.0,1034.4 783.0,1034.4 784.0,1034.4 785.0,1034.4 786.0,1034.4 787.0,1034.4 788.0,1034.4 789.0,1034.4 790.0,1034.4 791.0,1034.4 792.0,1034.4 793.0,1034.4 794.0,1034.4 795.0,1034.4 796.0,1034.4 797.0,1034.4 798.0,1034.4 799.0,1034.4 800.0,1034.4 801.0,1034.4 802.0,1034.4 803.0,1034.4 804.0,1034.4 805.0,1034.4 806.0,1034.4 807.0,1034.4 808.0,1034.4 809.0,1034.4 810.0,1034.4 811.0,1034.4 812.0,1034.4 813.0,1034.4 814.0,1034.4 815.0,1034.4 816.0,1034.4 817.0,1034.4 818.0,1034.4 819.0,1034.4 820.0,1034.4 821.0,1034.4 822.0,1034.4 823.0,1034.4 824.0,1034.4 825.0,1034.4 826.0,1034.4 827.0,1034.4 828.0,1034.4 829.0,1034.4 830.0,1034.4 831.0,1034.4 832.0,1034.4 833.0,1034.4 834.0,1034.4 835.0,1034.4 836.0,1034.9 837.0,1034.9 838.0,1034.9 839.0,1034.9 840.0,1034.9 841.0,1034.9 842.0,1034.9 843.0,1034.9 844.0,1034.9 845.0,1034.9 846.0,1034.9 847.0,1034.9 848.0,1034.9 849.0,1034.9 850.0,1034.9 851.0,1034.9 852.0,1034.9 853.0,1034.9 854.0,1034.9 855.0,1034.9 856.0,1034.9 857.0,1034.9 858.0,1034.9 859.0,1034.9 860.0,1034.9 861.0,1034.9 862.0,1034.9 863.0,1034.9 864.0,1034.9 865.0,1034.9 866.0,1034.9 867.0,1034.9 868.0,1034.9 869.0,1034.9 870.0,1034.9 871.0,1034.9 872.0,1034.9 873.0,1034.9 874.0,1034.9 875.0,1034.9 876.0,1034.9 877.0,1034.9 878.0,1034.9 879.0,1034.9 880.0,1034.9 881.0,1034.9 882.0,1034.9 883.0,1034.9 884.0,1034.9 885.0,1034.9 886.0,1034.9 887.0,1034.9 888.0,1034.9 889.0,1034.9 890.0,1034.9 891.0,1034.9 892.0,1034.9 893.0,1034.9 894.0,1034.9 895.0,1034.9 896.0,1034.9 897.0,1034.9 898.0,1033.9 899.0,1033.9 900.0,1033.9 901.0,1033.9 902.0,1033.9 903.0,1033.9 904.0,1033.9 905.0,1033.9 906.0,1033.9 907.0,1033.9 908.0,1033.9 909.0,1034.4 910.0,1034.4 911.0,1034.4 912.0,1034.4 913.0,1034.4 914.0,1034.4 915.0,1034.4 916.0,1034.4 917.0,1034.4 918.0,1034.4 919.0,1034.4 920.0,1034.4 921.0,1034.4 922.0,1034.4 923.0,1034.4 924.0,1034.4 925.0,1034.4 926.0,1034.4 927.0,1034.4 928.0,1034.4 929.0,1034.4" stroke="#ff0000" stroke-width="1.3"/>
<path d="M923.5 1021.5l5.0 5.0M923.5 1026.5l5.0 -5.0" stroke="#0000ff" stroke-width="1"/>
<path d="M926.5 1023.5l5.0 5.0M926.5 1028.5l5.0 -5.0" stroke="#0000ff" stroke-width="1"/>
<path d="M927.5 1026.5l5.0 5.0M927.5 1031.5l5.0 -5.0" stroke="#0000ff" stroke-width="1"/>
<path d="M924.5 1024.5l5.0 5.0M924.5 1029.5l5.0 -5.0" stroke="#0000ff" stroke-width="1"/>
<path d="M106.5 1016.5l5.0 5.0M106.5 1021.5l5.0 -5.0" stroke="#0000ff" stroke-width="1"/>
<path d="M119.5 1016.0l5.0 5.0M119.5 1021.0l5.0 -5.0" stroke="#0000ff" stroke-width="1"/>
<path d="M130.5 1016.5l5.0 5.0M130.5 1021.5l5.0 -5.0" stroke="#0000ff" stroke-width="1"/>
<path d="M179.5 1016.5l5.0 5.0M179.5 1021.5l5.0 -5.0" stroke="#0000ff" stroke-width="1"/>
<path d="M228.5 1012.5l5.0 5.0M228.5 1017.5l5.0 -5.0" stroke="#0000ff" stroke-width="1"/>
<path d="M229.5 1014.5l5.0 5.0M229.5 1019.5l5.0 -5.0" stroke="#0000ff" stroke-width="1"/>
<path d="M250.5 1014.5l5.0 5.0M250.5 1019.5l5.0 -5.0" stroke="#0000ff" stroke-width="1"/>
<path d="M255.5 1013.5l5.0 5.0M255.5 1018.5l5.0 -5.0" stroke="#0000ff" stroke-width="1"/>
<path d="M259.5 1014.5l5.0 5.0M259.5 1019.5l5.0 -5.0" stroke="#0000ff" stroke-width="1"/>
<path d="M294.5 1016.0l5.0 5.0M294.5 1021.0l5.0 -5.0" stroke="#0000ff" stroke-width="1"/>
<path d="M497.5 1015.5l5.0 5.0M497.5 1020.5l5.0 -5.0" stroke="#0000ff" stroke-width="1"/>
<path d="M502.5 1014.5l5.0 5.0M502.5 1019.5l5.0 -5.0" stroke="#0000ff" stroke-width="1"/>
<path d="M557.5 1014.5l5.0 5.0M557.5 1019.5l5.0 -5.0" stroke="#0000ff" stroke-width="1"/>
<path d="M564.5 1015.0l5.0 5.0M564.5 1020.0l5.0 -5.0" stroke="#0000ff" stroke-width="1"/>
<path d="M572.5 1015.5l5.0 5.0M572.5 1020.5l5.0 -5.0" stroke="#0000ff" stroke-width="1"/>
<path d="M617.5 1013.5l5.0 5.0M617.5 1018.5l5.0 -5.0" stroke="#0000ff" stroke-width="1"/>
<path d="M629.5 1011.5l5.0 5.0M629.5 1016.5l5.0 -5.0" stroke="#0000ff" stroke-width="1"/>
<path d="M631.5 1010.5l5.0 5.0M631.5 1015.5l5.0 -5.0" stroke="#0000ff" stroke-width="1"/>
<path d="M643.5 1010.5l5.0 5.0M643.5 1015.5l5.0 -5.0" stroke="#0000ff" stroke-width="1"/>
<path d="M654.5 1011.5l5.0 5.0M654.5 1016.5l5.0 -5.0" stroke="#0000ff" stroke-width="1"/>
<path d="M785.5 1014.5l5.0 5.0M785.5 1019.5l5.0 -5.0" stroke="#0000ff" stroke-width="1"/>
<path d="M792.5 1013.5l5.0 5.0M792.5 1018.5l5.0 -5.0" stroke="#0000ff" stroke-width="1"/>
<path d="M777.5 1008.5l5.0 5.0M777.5 1013.5l5.0 -5.0" stroke="#0000ff" stroke-width="1"/>
<path d="M844.5 1008.0l5.0 5.0M844.5 1013.0l5.0 -5.0" stroke="#0000ff" stroke-width="1"/>
<path d="M859.5 1015.5l5.0 5.0M859.5 1020.5l5.0 -5.0" stroke="#0000ff" stroke-width="1"/>
<path d="M861.5 1014.5l5.0 5.0M861.5 1019.5l5.0 -5.0" stroke="#0000ff" stroke-width="1"/>
<path d="M903.5 1002.5l5.0 5.0M903.5 1007.5l5.0 -5.0" stroke="#0000ff" stroke-width="1"/>
<path d="M904.5 998.5l5.0 5.0M904.5 1003.5l5.0 -5.0" stroke="#0000ff" stroke-width="1"/>
<path d="M903.5 1006.5l5.0 5.0M903.5 1011.5l5.0 -5.0" stroke="#0000ff" stroke-width="1"/>
<path d="M904.5 1010.5l5.0 5.0M904.5 1015.5l5.0 -5.0" stroke="#0000ff" stroke-width="1"/>
<path d="M903.5 1014.5l5.0 5.0M903.5 1019.5l5.0 -5.0" stroke="#0000ff" stroke-width="1"/>
<path d="M902.5 1004.5l5.0 5.0M902.5 1009.5l5.0 -5.0" stroke="#0000ff" stroke-width="1"/>
<path d="M905.5 1008.5l5.0 5.0M905.5 1013.5l5.0 -5.0" stroke="#0000ff" stroke-width="1"/>
<path d="M902.5 1012.5l5.0 5.0M902.5 1017.5l5.0 -5.0" stroke="#0000ff" stroke-width="1"/>
<path d="M905.5 1016.5l5.0 5.0M905.5 1021.5l5.0 -5.0" stroke="#0000ff" stroke-width="1"/>
<path d="M903.5 1000.5l5.0 5.0M903.5 1005.5l5.0 -5.0" stroke="#0000ff" stroke-width="1"/>
<path d="M904.5 1017.5l5.0 5.0M904.5 1022.5l5.0 -5.0" stroke="#0000ff" stroke-width="1"/>
<path d="M925.5 1020.5l5.0 5.0M925.5 1025.5l5.0 -5.0" stroke="#0000ff" stroke-width="1"/>
<path d="M926.5 1024.5l5.0 5.0M926.5 1029.5l5.0 -5.0" stroke="#0000ff" stroke-width="1"/>
<path d="M927.5 1028.5l5.0 5.0M927.5 1033.5l5.0 -5.0" stroke="#0000ff" stroke-width="1"/>
<path d="M107.5 1017.5l5.0 5.0M107.5 1022.5l5.0 -5.0" stroke="#008000" stroke-width="1"/>
<path d="M212.5 1016.5l5.0 5.0M212.5 1021.5l5.0 -5.0" stroke="#008000" stroke-width="1"/>
<path d="M257.5 1013.5l5.0 5.0M257.5 1018.5l5.0 -5.0" stroke="#008000" stroke-width="1"/>
<path d="M262.5 1015.5l5.0 5.0M262.5 1020.5l5.0 -5.0" stroke="#008000" stroke-width="1"/>
<path d="M342.5 1014.5l5.0 5.0M342.5 1019.5l5.0 -5.0" stroke="#008000" stroke-width="1"/>
<path d="M349.5 1015.5l5.0 5.0M349.5 1020.5l5.0 -5.0" stroke="#008000" stroke-width="1"/>
<path d="M397.5 1015.5l5.0 5.0M397.5 1020.5l5.0 -5.0" stroke="#008000" stroke-width="1"/>
<path d="M409.5 1014.5l5.0 5.0M409.5 1019.5l5.0 -5.0" stroke="#008000" stroke-width="1"/>
<path d="M600.5 1012.5l5.0 5.0M600.5 1017.5l5.0 -5.0" stroke="#008000" stroke-width="1"/>
<path d="M764.5 1010.5l5.0 5.0M764.5 1015.5l5.0 -5.0" stroke="#008000" stroke-width="1"/>
<path d="M770.5 1009.5l5.0 5.0M770.5 1014.5l5.0 -5.0" stroke="#008000" stroke-width="1"/>
<path d="M800.5 1010.5l5.0 5.0M800.5 1015.5l5.0 -5.0" stroke="#008000" stroke-width="1"/>
<path d="M903.5 997.5l5.0 5.0M903.5 1002.5l5.0 -5.0" stroke="#008000" stroke-width="1"/>
<path d="M904.5 1001.5l5.0 5.0M904.5 1006.5l5.0 -5.0" stroke="#008000" stroke-width="1"/>
<path d="M903.5 1008.5l5.0 5.0M903.5 1013.5l5.0 -5.0" stroke="#008000" stroke-width="1"/>
<path d="M904.5 1013.5l5.0 5.0M904.5 1018.5l5.0 -5.0" stroke="#008000" stroke-width="1"/>
<polyline points="557.0,1171.0 557.5,1168.5 563.0,1168.5 564.0,1169.5 565.5,1170.5 568.0,1171.0" stroke="#0000ff" stroke-width="1"/>
<polyline points="905.5,1171.0 906.0,1166.5 910.0,1166.5 916.0,1168.0 922.0,1169.5 925.0,1170.5" stroke="#0000ff" stroke-width="1"/>
</g>
<rect x="104" y="250" width="9" height="16" fill="#fff"/>
<text x="105" y="263" font-family="'Liberation Sans',sans-serif" font-size="13px" fill="#000">z</text>
<line x1="108.5" y1="270" x2="108.5" y2="289" stroke="#000"/>
</svg>
 </div>
 <div id="sb" class="abs"></div>
 <div id="thumb" class="abs"></div>
 <svg class="abs" style="left:1420px;top:52px" width="17" height="1119" shape-rendering="crispEdges">
  <path d="M5 10.5 L8.5 6.5 L12 10.5 Z" fill="#505050"/>
  <path d="M5 1108 L8.5 1112 L12 1108 Z" fill="#505050"/>
  <g stroke="#555" stroke-width="1"><line x1="4" y1="408.5" x2="11" y2="408.5"/><line x1="4" y1="411.5" x2="11" y2="411.5"/><line x1="4" y1="414.5" x2="11" y2="414.5"/></g>
  <g stroke="#fff" stroke-width="1"><line x1="4" y1="409.5" x2="11" y2="409.5"/><line x1="4" y1="412.5" x2="11" y2="412.5"/><line x1="4" y1="415.5" x2="11" y2="415.5"/></g>
 </svg>
 <div id="status" class="abs">
  <span class="abs" style="left:2.5px;top:6px">Ready</span>
  <div class="pane" style="left:822px;width:486px;border-color:#a0a0a0 #f0f0f0 #f0f0f0 #a0a0a0"><span class="abs" style="left:2px;top:1px;white-space:nowrap">Load done.</span></div>
  <div class="pane" style="left:1311px;width:28px"></div>
  <div class="pane" style="left:1342px;width:34px"><span class="abs" style="left:1.5px;top:1px;letter-spacing:0">NUM</span></div>
  <div class="pane" style="left:1378px;width:32px"></div>
  <svg class="abs" style="left:1416px;top:7px" width="13" height="13"><g stroke="#a8a8a8" stroke-width="1.2"><line x1="12" y1="1" x2="1" y2="12"/><line x1="12" y1="5" x2="5" y2="12"/><line x1="12" y1="9" x2="9" y2="12"/></g></svg>
 </div>
</div>
</body></html>
